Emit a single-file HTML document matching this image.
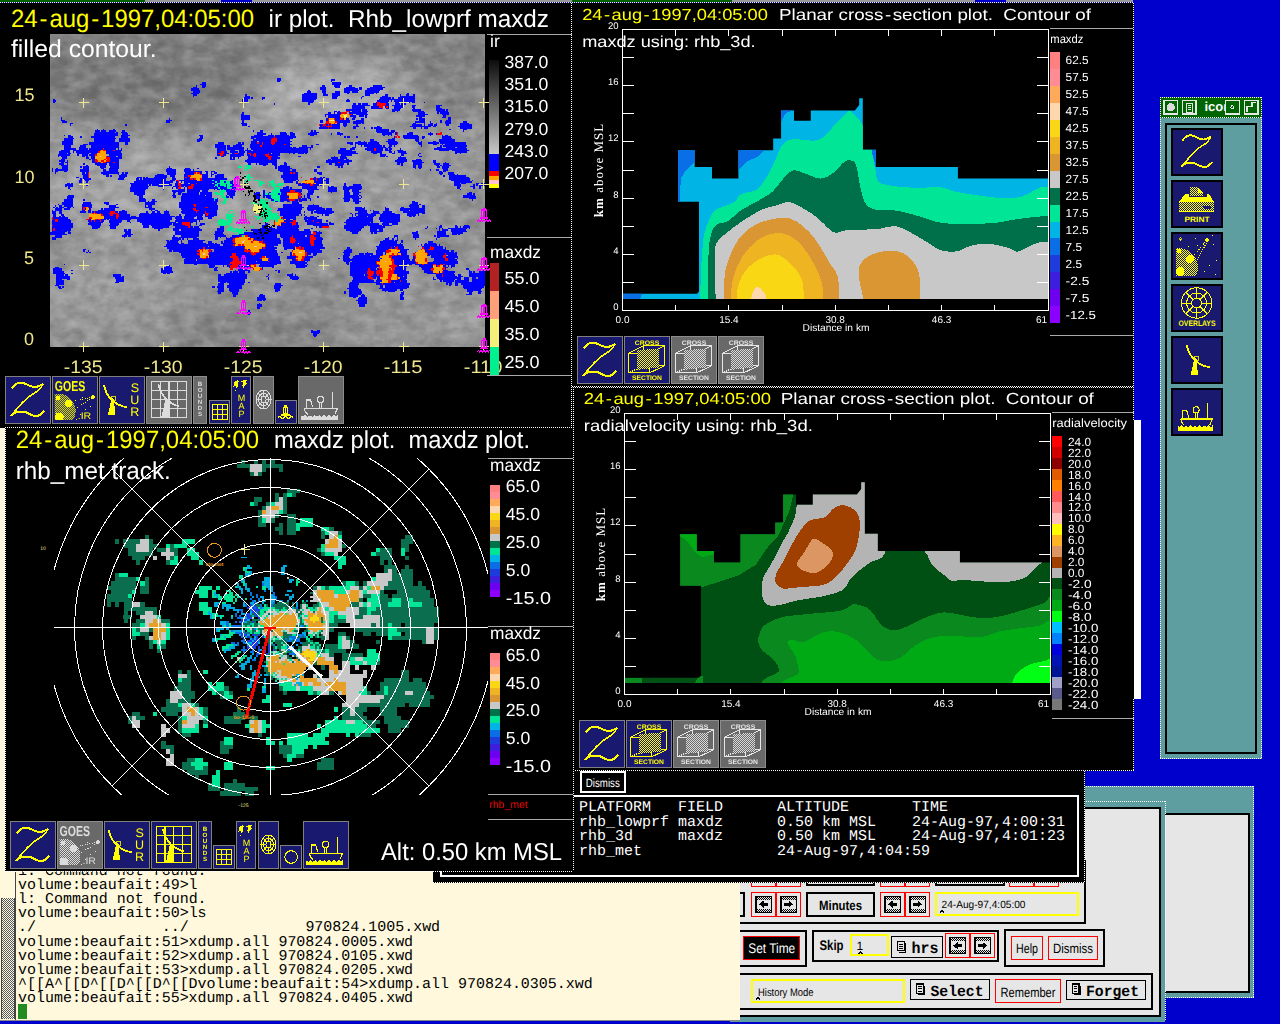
<!DOCTYPE html>
<html><head><meta charset="utf-8"><title>zebra display</title>
<style>html,body{margin:0;padding:0;background:#0000cd;overflow:hidden}svg{display:block}text{white-space:pre}</style></head>
<body><svg width="1280" height="1024" viewBox="0 0 1280 1024" shape-rendering="crispEdges" text-rendering="geometricPrecision">
<defs><pattern id="dy" width="2" height="2" patternUnits="userSpaceOnUse"><rect width="1" height="1" fill="#ffff00"/><rect x="1" y="1" width="1" height="1" fill="#ffff00"/></pattern><pattern id="dg" width="2" height="2" patternUnits="userSpaceOnUse"><rect width="1" height="1" fill="#dcdcdc"/><rect x="1" y="1" width="1" height="1" fill="#dcdcdc"/></pattern><pattern id="dk" width="2" height="2" patternUnits="userSpaceOnUse"><rect width="2" height="2" fill="#fffae6"/><rect width="1" height="1" fill="#555"/><rect x="1" y="1" width="1" height="1" fill="#555"/></pattern></defs>
<rect x="0" y="0" width="1280" height="1024" fill="#0000cd"/>
<rect x="1084.6" y="786" width="169.4" height="211.7" fill="#5f9ea0"/>
<rect x="1151" y="814.4" width="97.5" height="177.3" fill="#e6e6e6" stroke="#000" stroke-width="2"/>
<rect x="730" y="801.2" width="435" height="220.5" fill="#5f9ea0"/>
<line x1="1084" y1="801.5" x2="1165" y2="801.5" stroke="#fff" stroke-width="1" stroke-dasharray="1 1"/><line x1="1165" y1="801" x2="1165" y2="1021" stroke="#fff" stroke-width="1" stroke-dasharray="1 1"/><line x1="1084" y1="786.5" x2="1254" y2="786.5" stroke="#fff" stroke-width="1" stroke-dasharray="1 1"/><line x1="1253.5" y1="786" x2="1253.5" y2="998" stroke="#fff" stroke-width="1" stroke-dasharray="1 1"/><line x1="1165" y1="997.5" x2="1254" y2="997.5" stroke="#fff" stroke-width="1" stroke-dasharray="1 1"/>
<rect x="731" y="807.5" width="428.6" height="208.5" fill="#e6e6e6" stroke="#000" stroke-width="2"/>
<defs><pattern id="dk2" width="2" height="2" patternUnits="userSpaceOnUse"><rect width="2" height="2" fill="#e6e6e6"/><rect width="1" height="1" fill="#000"/><rect x="1" y="1" width="1" height="1" fill="#000"/></pattern></defs><rect x="751.5" y="870.5" width="23.8" height="15.6" fill="#e6e6e6" stroke="#ff0000" stroke-width="1"/><rect x="776.5" y="870.5" width="23.8" height="15.6" fill="#e6e6e6" stroke="#ff0000" stroke-width="1"/><rect x="807" y="871" width="67" height="14" fill="#e6e6e6" stroke="#000" stroke-width="2"/><rect x="880.5" y="870.5" width="23.8" height="15.6" fill="#e6e6e6" stroke="#ff0000" stroke-width="1"/><rect x="905.5" y="870.5" width="23.8" height="15.6" fill="#e6e6e6" stroke="#ff0000" stroke-width="1"/><rect x="936" y="871" width="68" height="14" fill="#e6e6e6" stroke="#000" stroke-width="2"/><rect x="1009.5" y="870.5" width="23.8" height="15.6" fill="#e6e6e6" stroke="#ff0000" stroke-width="1"/><rect x="1034.5" y="870.5" width="23.8" height="15.6" fill="#e6e6e6" stroke="#ff0000" stroke-width="1"/><rect x="701" y="861" width="384" height="62.4" fill="none" stroke="#000" stroke-width="2"/><rect x="701" y="893" width="43" height="22.5" fill="#e6e6e6" stroke="#000" stroke-width="2"/><rect x="751.5" y="892.5" width="23.8" height="23.6" fill="#e6e6e6" stroke="#ff0000" stroke-width="1"/><rect x="755" y="895.5" width="17" height="17.5" fill="#000"/><rect x="756.5" y="897" width="14" height="14.5" fill="#e6e6e6"/><rect x="756.5" y="897" width="14" height="2.5" fill="url(#dk2)"/><rect x="756.5" y="909" width="14" height="2.5" fill="url(#dk2)"/><path d="M759 904.3l4.5-3.6v2.3h4.5v2.6h-4.5v2.3z" fill="#000"/><rect x="776.5" y="892.5" width="23.8" height="23.6" fill="#e6e6e6" stroke="#ff0000" stroke-width="1"/><rect x="780" y="895.5" width="17" height="17.5" fill="#000"/><rect x="781.5" y="897" width="14" height="14.5" fill="#e6e6e6"/><rect x="781.5" y="897" width="14" height="2.5" fill="url(#dk2)"/><rect x="781.5" y="909" width="14" height="2.5" fill="url(#dk2)"/><path d="M793 904.3l-4.5-3.6v2.3h-4.5v2.6h4.5v2.3z" fill="#000"/><rect x="807" y="893" width="67" height="22.5" fill="#e6e6e6" stroke="#000" stroke-width="2"/><text x="840.5" y="909.5" font-size="13.5" fill="#000" font-family="Liberation Sans, sans-serif" font-weight="bold" text-anchor="middle" textLength="43" lengthAdjust="spacingAndGlyphs" xml:space="preserve">Minutes</text><rect x="880.5" y="892.5" width="23.8" height="23.6" fill="#e6e6e6" stroke="#ff0000" stroke-width="1"/><rect x="884" y="895.5" width="17" height="17.5" fill="#000"/><rect x="885.5" y="897" width="14" height="14.5" fill="#e6e6e6"/><rect x="885.5" y="897" width="14" height="2.5" fill="url(#dk2)"/><rect x="885.5" y="909" width="14" height="2.5" fill="url(#dk2)"/><path d="M888 904.3l4.5-3.6v2.3h4.5v2.6h-4.5v2.3z" fill="#000"/><rect x="905.5" y="892.5" width="23.8" height="23.6" fill="#e6e6e6" stroke="#ff0000" stroke-width="1"/><rect x="909" y="895.5" width="17" height="17.5" fill="#000"/><rect x="910.5" y="897" width="14" height="14.5" fill="#e6e6e6"/><rect x="910.5" y="897" width="14" height="2.5" fill="url(#dk2)"/><rect x="910.5" y="909" width="14" height="2.5" fill="url(#dk2)"/><path d="M922 904.3l-4.5-3.6v2.3h-4.5v2.6h4.5v2.3z" fill="#000"/><rect x="936.3" y="893" width="141.7" height="21.8" fill="#e6e6e6" stroke="#ffff00" stroke-width="2"/><text x="941.5" y="908" font-size="10.5" fill="#000" font-family="Liberation Sans, sans-serif" textLength="84" lengthAdjust="spacingAndGlyphs" xml:space="preserve">24-Aug-97,4:05:00</text><path d="M940 912.5l2.2-2.2 2.2 2.2" fill="none" stroke="#000" stroke-width="1.3"/><rect x="701" y="930.6" width="104.5" height="35" fill="none" stroke="#000" stroke-width="2"/><rect x="743.5" y="936.5" width="56.4" height="22.7" fill="#000" stroke="#ff0000" stroke-width="1"/><text x="771.7" y="953.2" font-size="14" fill="#fff" font-family="Liberation Sans, sans-serif" text-anchor="middle" textLength="47" lengthAdjust="spacingAndGlyphs" xml:space="preserve">Set Time</text><rect x="813" y="930.6" width="185" height="29.9" fill="none" stroke="#000" stroke-width="2"/><text x="819.5" y="949.8" font-size="14" fill="#000" font-family="Liberation Sans, sans-serif" font-weight="bold" textLength="24" lengthAdjust="spacingAndGlyphs" xml:space="preserve">Skip</text><rect x="851" y="934.8" width="37" height="20.5" fill="#e6e6e6" stroke="#ffff00" stroke-width="2"/><text x="856.5" y="950" font-size="12" fill="#000" font-family="Liberation Sans, sans-serif" xml:space="preserve">1</text><path d="M858.5 954l2.2-2.2 2.2 2.2" fill="none" stroke="#000" stroke-width="1.3"/><rect x="891.5" y="936.5" width="50.8" height="20.5" fill="#e6e6e6" stroke="#000" stroke-width="1"/><rect x="897.6" y="941.6" width="6.7" height="9.2" fill="#e6e6e6" stroke="#000" stroke-width="1.3"/><line x1="899.3" y1="944.2" x2="902.7" y2="944.2" stroke="#000" stroke-width="1"/><line x1="899.3" y1="946.4" x2="902.7" y2="946.4" stroke="#000" stroke-width="1"/><line x1="899.3" y1="948.6" x2="902.7" y2="948.6" stroke="#000" stroke-width="1"/><rect x="905" y="943" width="1.4" height="9.8" fill="#000"/><rect x="899" y="951.5" width="7.4" height="1.3" fill="#000"/><text x="911.5" y="953" font-size="16" fill="#000" font-family="Liberation Mono, monospace" font-weight="bold" textLength="27" lengthAdjust="spacingAndGlyphs" xml:space="preserve">hrs</text><rect x="945.7" y="933.9" width="23.8" height="23.6" fill="#e6e6e6" stroke="#ff0000" stroke-width="1"/><rect x="949.2" y="936.9" width="17" height="17.5" fill="#000"/><rect x="950.7" y="938.4" width="14" height="14.5" fill="#e6e6e6"/><rect x="950.7" y="938.4" width="14" height="2.5" fill="url(#dk2)"/><rect x="950.7" y="950.4" width="14" height="2.5" fill="url(#dk2)"/><path d="M953.2 945.7l4.5-3.6v2.3h4.5v2.6h-4.5v2.3z" fill="#000"/><rect x="970.8" y="933.9" width="23.8" height="23.6" fill="#e6e6e6" stroke="#ff0000" stroke-width="1"/><rect x="974.3" y="936.9" width="17" height="17.5" fill="#000"/><rect x="975.8" y="938.4" width="14" height="14.5" fill="#e6e6e6"/><rect x="975.8" y="938.4" width="14" height="2.5" fill="url(#dk2)"/><rect x="975.8" y="950.4" width="14" height="2.5" fill="url(#dk2)"/><path d="M987.3 945.7l-4.5-3.6v2.3h-4.5v2.6h4.5v2.3z" fill="#000"/><rect x="1005" y="930" width="99.3" height="36" fill="none" stroke="#000" stroke-width="2"/><rect x="1011.5" y="936.5" width="31" height="22.7" fill="#e6e6e6" stroke="#ff0000" stroke-width="1"/><text x="1027" y="953" font-size="13.5" fill="#000" font-family="Liberation Sans, sans-serif" text-anchor="middle" textLength="22" lengthAdjust="spacingAndGlyphs" xml:space="preserve">Help</text><rect x="1048.5" y="936.5" width="48.8" height="22.7" fill="#e6e6e6" stroke="#ff0000" stroke-width="1"/><text x="1073" y="953" font-size="13.5" fill="#000" font-family="Liberation Sans, sans-serif" text-anchor="middle" textLength="40" lengthAdjust="spacingAndGlyphs" xml:space="preserve">Dismiss</text><rect x="701" y="973.8" width="451" height="35.4" fill="none" stroke="#000" stroke-width="2"/><rect x="752" y="980" width="152.3" height="21.8" fill="#e6e6e6" stroke="#ffff00" stroke-width="2"/><text x="758" y="995.5" font-size="11" fill="#000" font-family="Liberation Sans, sans-serif" textLength="55.5" lengthAdjust="spacingAndGlyphs" xml:space="preserve">History Mode</text><path d="M756 999.5l2.2-2.2 2.2 2.2" fill="none" stroke="#000" stroke-width="1.3"/><rect x="910.5" y="979.5" width="79" height="20.4" fill="#e6e6e6" stroke="#000" stroke-width="1"/><rect x="916.6" y="984.1" width="6.7" height="9.2" fill="#e6e6e6" stroke="#000" stroke-width="1.3"/><line x1="918.3" y1="986.7" x2="921.7" y2="986.7" stroke="#000" stroke-width="1"/><line x1="918.3" y1="988.9" x2="921.7" y2="988.9" stroke="#000" stroke-width="1"/><line x1="918.3" y1="991.1" x2="921.7" y2="991.1" stroke="#000" stroke-width="1"/><rect x="924" y="985.5" width="1.4" height="9.8" fill="#000"/><rect x="918" y="994" width="7.4" height="1.3" fill="#000"/><text x="930.5" y="995.5" font-size="15.5" fill="#000" font-family="Liberation Mono, monospace" font-weight="bold" textLength="53" lengthAdjust="spacingAndGlyphs" xml:space="preserve">Select</text><rect x="995.5" y="979.5" width="64.8" height="22.8" fill="#e6e6e6" stroke="#ff0000" stroke-width="1"/><text x="1028" y="996.5" font-size="13.5" fill="#000" font-family="Liberation Sans, sans-serif" text-anchor="middle" textLength="55" lengthAdjust="spacingAndGlyphs" xml:space="preserve">Remember</text><rect x="1066.5" y="980" width="78.7" height="19.9" fill="#e6e6e6" stroke="#000" stroke-width="1"/><rect x="1072.2" y="984.1" width="6.7" height="9.2" fill="#e6e6e6" stroke="#000" stroke-width="1.3"/><line x1="1073.8" y1="986.7" x2="1077.2" y2="986.7" stroke="#000" stroke-width="1"/><line x1="1073.8" y1="988.9" x2="1077.2" y2="988.9" stroke="#000" stroke-width="1"/><line x1="1073.8" y1="991.1" x2="1077.2" y2="991.1" stroke="#000" stroke-width="1"/><rect x="1079.5" y="985.5" width="1.4" height="9.8" fill="#000"/><rect x="1073.5" y="994" width="7.4" height="1.3" fill="#000"/><text x="1086" y="995.5" font-size="15.5" fill="#000" font-family="Liberation Mono, monospace" font-weight="bold" textLength="53" lengthAdjust="spacingAndGlyphs" xml:space="preserve">Forget</text>
<rect x="0" y="420" width="740.3" height="601" fill="#fff8dc"/>
<rect x="0" y="1020" width="740.3" height="1" fill="#888"/>
<rect x="15" y="860" width="1" height="160" fill="#444"/>
<rect x="2" y="897.5" width="12" height="121.5" fill="url(#dk)"/>
<rect x="1" y="897.5" width="1" height="121.5" fill="#444"/><rect x="13.5" y="897.5" width="1" height="121.5" fill="#444"/>
<text x="18" y="874.7" font-size="15" fill="#000" font-family="Liberation Mono, monospace" textLength="188.6" lengthAdjust="spacingAndGlyphs" xml:space="preserve">1: Command not found.</text>
<text x="18" y="888.9" font-size="15" fill="#000" font-family="Liberation Mono, monospace" textLength="179.6" lengthAdjust="spacingAndGlyphs" xml:space="preserve">volume:beaufait:49&gt;l</text>
<text x="18" y="903.1" font-size="15" fill="#000" font-family="Liberation Mono, monospace" textLength="188.6" lengthAdjust="spacingAndGlyphs" xml:space="preserve">l: Command not found.</text>
<text x="18" y="917.2" font-size="15" fill="#000" font-family="Liberation Mono, monospace" textLength="188.6" lengthAdjust="spacingAndGlyphs" xml:space="preserve">volume:beaufait:50&gt;ls</text>
<text x="18" y="931.4" font-size="15" fill="#000" font-family="Liberation Mono, monospace" textLength="422.1" lengthAdjust="spacingAndGlyphs" xml:space="preserve">./              ../             970824.1005.xwd</text>
<text x="18" y="945.6" font-size="15" fill="#000" font-family="Liberation Mono, monospace" textLength="395.1" lengthAdjust="spacingAndGlyphs" xml:space="preserve">volume:beaufait:51&gt;xdump.all 970824.0005.xwd</text>
<text x="18" y="959.8" font-size="15" fill="#000" font-family="Liberation Mono, monospace" textLength="395.1" lengthAdjust="spacingAndGlyphs" xml:space="preserve">volume:beaufait:52&gt;xdump.all 970824.0105.xwd</text>
<text x="18" y="974" font-size="15" fill="#000" font-family="Liberation Mono, monospace" textLength="395.1" lengthAdjust="spacingAndGlyphs" xml:space="preserve">volume:beaufait:53&gt;xdump.all 970824.0205.xwd</text>
<text x="18" y="988.1" font-size="15" fill="#000" font-family="Liberation Mono, monospace" textLength="574.7" lengthAdjust="spacingAndGlyphs" xml:space="preserve">^[[A^[[D^[[D^[[D^[[Dvolume:beaufait:54&gt;xdump.all 970824.0305.xwd</text>
<text x="18" y="1002.3" font-size="15" fill="#000" font-family="Liberation Mono, monospace" textLength="395.1" lengthAdjust="spacingAndGlyphs" xml:space="preserve">volume:beaufait:55&gt;xdump.all 970824.0405.xwd</text>
<rect x="18" y="1004" width="9" height="14.5" fill="#228b22"/>
<rect x="1160" y="97" width="102" height="661.5" fill="#5f9ea0"/>
<rect x="1160" y="97" width="102" height="21" fill="#006400"/>
<rect x="1165.8" y="123.5" width="90.4" height="629" fill="none" stroke="#000" stroke-width="2"/>
<rect x="1172" y="129" width="50" height="46" fill="#191970" stroke="#000" stroke-width="2"/><g transform="translate(1176,129) scale(0.92,0.95)"><path d="M7.2 11.8C7.9 11.2 9.6 8.8 11.2 7.9C12.8 7.1 14.4 6.3 16.9 6.7C19.3 7.1 23.6 9.5 25.9 10.2C28.2 10.9 28.8 11.3 30.7 11C32.6 10.7 36.5 8.9 37.6 8.5" fill="none" stroke="#ffff00" stroke-width="2.0" stroke-linecap="round"/><path d="M37.6 8.9C36.9 9.8 35.3 12.8 33.2 14.6C31.1 16.4 27.6 17.9 25 19.9C22.4 21.9 20 24.1 17.7 26.4C15.4 28.7 13.1 31.5 11.2 33.7C9.3 35.9 7.1 38.5 6.3 39.4" fill="none" stroke="#ffff00" stroke-width="1.6" stroke-linecap="round"/><path d="M6.3 39.4C7.1 38.9 9 36.8 11.2 36.2C13.4 35.6 16.6 35.3 19.3 35.8C22 36.3 25.2 38.7 27.5 39.4C29.8 40.1 31.3 40.5 33.2 39.8C35.1 39.1 38 36.1 38.9 35.4" fill="none" stroke="#ffff00" stroke-width="2.0" stroke-linecap="round"/></g><rect x="1172" y="181" width="50" height="46" fill="#191970" stroke="#000" stroke-width="2"/><g transform="translate(1171,180)"><path d="M19 7h8l5 6v3h-13z" fill="url(#dy)"/><path d="M27 7l5 6h-5z" fill="#ffff00"/><path d="M14 14h4v3h18v-3h2l5 8h-35z" fill="#ffff00"/><rect x="8" y="22" width="35" height="10" fill="url(#dy)"/><rect x="8" y="31" width="35" height="1.2" fill="#ffff00"/><rect x="32" y="25.5" width="8" height="3" rx="1.5" fill="#191970"/><text x="26" y="41.5" font-size="7.8" fill="#ffff00" font-family="Liberation Sans, sans-serif" font-weight="bold" text-anchor="middle" textLength="25" lengthAdjust="spacingAndGlyphs" xml:space="preserve">PRINT</text></g><rect x="1172" y="233" width="50" height="46" fill="#191970" stroke="#000" stroke-width="2"/><g transform="translate(1171,232)"><clipPath id="pc"><rect x="5" y="12" width="22" height="32"/></clipPath><g clip-path="url(#pc)"><circle cx="8" cy="35" r="19" fill="url(#dy)"/><circle cx="9" cy="39.5" r="4.5" fill="#ffff00"/><circle cx="19" cy="27" r="4" fill="#ffff00"/><circle cx="8" cy="19" r="2.4" fill="#ffff00"/></g><path d="M22 25L35 9M25 30L36 10" stroke="#ffff00" stroke-width="1" stroke-dasharray="1 1.3"/><path d="M36 5.2L38.8 8L36 10.8L33.2 8Z" fill="#ffff00"/><rect x="9" y="7" width="1.2" height="1.2" fill="#ffff00"/><rect x="24" y="6" width="1.2" height="1.2" fill="#ffff00"/><rect x="17" y="14" width="1.2" height="1.2" fill="#ffff00"/><rect x="42" y="12" width="1.2" height="1.2" fill="#ffff00"/><rect x="45" y="28" width="1.2" height="1.2" fill="#ffff00"/><rect x="38" y="33" width="1.2" height="1.2" fill="#ffff00"/><rect x="33" y="39" width="1.2" height="1.2" fill="#ffff00"/><rect x="30" y="19" width="1.2" height="1.2" fill="#ffff00"/><rect x="44" y="42" width="1.2" height="1.2" fill="#ffff00"/><rect x="41" y="3" width="1.2" height="1.2" fill="#ffff00"/><rect x="26" y="13" width="1.2" height="1.2" fill="#ffff00"/><path d="M9.6 5.4l1.6 1.6-1.6 1.6-1.6-1.6z" fill="none" stroke="#ffff00" stroke-width="0.7"/></g><rect x="1172" y="285" width="50" height="46" fill="#191970" stroke="#000" stroke-width="2"/><g transform="translate(1171,284)"><g fill="none" stroke="#ffff00" stroke-width="1"><ellipse cx="25.6" cy="19" rx="15.2" ry="15.2"/><ellipse cx="25.6" cy="19" rx="10" ry="10"/><ellipse cx="25.6" cy="19" rx="5" ry="5"/><path d="M30.6 19L40.8 19"/><path d="M29.1 22.5L36.3 29.7"/><path d="M25.6 24L25.6 34.2"/><path d="M22.1 22.5L14.9 29.7"/><path d="M20.6 19L10.4 19"/><path d="M22.1 15.5L14.9 8.3"/><path d="M25.6 14L25.6 3.8"/><path d="M29.1 15.5L36.3 8.3"/></g><text x="26" y="41.5" font-size="8" fill="#ffff00" font-family="Liberation Sans, sans-serif" font-weight="bold" text-anchor="middle" textLength="37" lengthAdjust="spacingAndGlyphs" xml:space="preserve">OVERLAYS</text></g><rect x="1172" y="337" width="50" height="46" fill="#191970" stroke="#000" stroke-width="2"/><g transform="translate(1182,336)"><path d="M4.8 9.4Q9 27.5 27 31.2" fill="none" stroke="#ffff00" stroke-width="1.8" stroke-linecap="round"/><path d="M12.5 21L15 24L15.8 39.4H8.6L11 29Z" fill="#ffff00"/><rect x="12.2" y="20.3" width="4.2" height="4.2" fill="none" stroke="#ffff00" stroke-width="0.8"/></g><rect x="1172" y="389" width="50" height="46" fill="#191970" stroke="#000" stroke-width="2"/><g transform="translate(1175,386.5) scale(0.95,1.0)"><g fill="none" stroke="#ffff00" stroke-width="1.1"><path d="M6 32.5h33.2l-2.6 6"/><path d="M6 32.5q0.5 3.5 3.5 6"/><path d="M8 32.5v-8.5h4.4l2 7"/><circle cx="22.3" cy="23.4" r="3.1"/><path d="M21.2 26.4v6M23.4 26.4v6"/><path d="M34.2 16v16.5"/></g><path d="M3 44v-4.5l2 1.3 2.2-2.2 2.2 2.2 2.4-1.6 2.2 1.6 2.4-2 2.4 2 2.4-1.8 2.4 1.8 2.4-2 2.4 2 2.4-1.8 2.4 1.8 2.4-2.2 2.2 2.2 2.2-2.4V44z" fill="#ffff00"/></g>
<rect x="1164" y="100.6" width="13.4" height="13.3" fill="none" stroke="#e6e6e6" stroke-width="1.2"/><circle cx="1170.7" cy="107.3" r="4.2" fill="#dcdcdc"/>
<rect x="1182.6" y="100.6" width="13.4" height="13.3" fill="none" stroke="#e6e6e6" stroke-width="1.2"/><rect x="1186.5" y="103" width="6" height="9" fill="none" stroke="#e6e6e6" stroke-width="1"/><line x1="1188" y1="105.5" x2="1191" y2="105.5" stroke="#e6e6e6" stroke-width="1"/><line x1="1188" y1="107.5" x2="1191" y2="107.5" stroke="#e6e6e6" stroke-width="1"/><line x1="1188" y1="109.5" x2="1191" y2="109.5" stroke="#e6e6e6" stroke-width="1"/>
<text x="1204.5" y="111" font-size="13" fill="#fff" font-family="Liberation Sans, sans-serif" font-weight="bold" xml:space="preserve">icons</text>
<rect x="1225.6" y="100.6" width="13.6" height="13.3" fill="#006400" stroke="#e6e6e6" stroke-width="1.2"/><circle cx="1232.4" cy="107.3" r="1.6" fill="none" stroke="#e6e6e6" stroke-width="1"/>
<rect x="1244.6" y="100.6" width="13.4" height="13.3" fill="#006400" stroke="#e6e6e6" stroke-width="1.2"/><path d="M1247 111.5v-5h5v-4h4" fill="none" stroke="#e6e6e6" stroke-width="1.2"/>
<line x1="1160" y1="97.5" x2="1262" y2="97.5" stroke="#fff" stroke-width="1" stroke-dasharray="1 1"/><line x1="1160" y1="117.5" x2="1262" y2="117.5" stroke="#fff" stroke-width="1" stroke-dasharray="1 1"/><line x1="1160.5" y1="97" x2="1160.5" y2="758" stroke="#fff" stroke-width="1" stroke-dasharray="1 1"/><line x1="1261.5" y1="97" x2="1261.5" y2="758" stroke="#fff" stroke-width="1" stroke-dasharray="1 1"/><line x1="1160" y1="758" x2="1262" y2="758" stroke="#fff" stroke-width="1" stroke-dasharray="1 1"/>
<rect x="0" y="3" width="574" height="424.5" fill="#000"/>
<defs><filter id="sb" x="-20%" y="-20%" width="140%" height="140%"><feGaussianBlur stdDeviation="12"/></filter><filter id="sn" x="0" y="0" width="100%" height="100%"><feTurbulence type="fractalNoise" baseFrequency="0.07 0.1" numOctaves="3" seed="11"/><feColorMatrix type="matrix" values="0 0 0 0 0  0 0 0 0 0  0 0 0 0 0  2.2 0 0 0 -0.75"/></filter><filter id="sn2" x="0" y="0" width="100%" height="100%"><feTurbulence type="fractalNoise" baseFrequency="0.06 0.09" numOctaves="3" seed="5"/><feColorMatrix type="matrix" values="0 0 0 0 1  0 0 0 0 1  0 0 0 0 1  0 2.2 0 0 -0.8"/></filter><clipPath id="sc"><rect x="50" y="34" width="435" height="313"/></clipPath></defs><g clip-path="url(#sc)"><rect x="50" y="34" width="435" height="313" fill="#929292"/><g filter="url(#sb)"><ellipse cx="150" cy="75" rx="125" ry="52" fill="#787878" opacity="1.0"/><ellipse cx="300" cy="40" rx="220" ry="16" fill="#7e7e7e" opacity="0.9"/><ellipse cx="455" cy="72" rx="45" ry="45" fill="#7e7e7e" opacity="0.9"/><ellipse cx="330" cy="95" rx="80" ry="28" fill="#b4b4b4" opacity="0.85"/><ellipse cx="260" cy="125" rx="40" ry="18" fill="#a8a8a8" opacity="0.6"/><ellipse cx="420" cy="140" rx="50" ry="30" fill="#a0a0a0" opacity="0.6"/><ellipse cx="150" cy="190" rx="110" ry="50" fill="#a8a8a8" opacity="0.75"/><ellipse cx="330" cy="205" rx="120" ry="55" fill="#a4a4a4" opacity="0.6"/><ellipse cx="60" cy="140" rx="30" ry="12" fill="#a8a8a8" opacity="0.6"/><ellipse cx="110" cy="290" rx="75" ry="40" fill="#a2a2a2" opacity="0.65"/><ellipse cx="250" cy="332" rx="95" ry="22" fill="#828282" opacity="0.95"/><ellipse cx="420" cy="310" rx="70" ry="40" fill="#989898" opacity="0.5"/><ellipse cx="330" cy="270" rx="40" ry="35" fill="#8c8c8c" opacity="0.5"/><ellipse cx="465" cy="325" rx="25" ry="22" fill="#a8a8a8" opacity="0.5"/></g><rect x="50" y="34" width="435" height="313" filter="url(#sn)" opacity="0.13"/><rect x="50" y="34" width="435" height="313" filter="url(#sn2)" opacity="0.2"/></g>
<path fill="#0000ff" d="M276.5 77.5h4.5v1.5h-4.5zM276.5 79h4.5v1.5h-4.5zM330.5 79h4.5v1.5h-4.5zM276.5 80.5h3v1.5h-3zM330.5 80.5h1.5v1.5h-1.5zM201.5 82h4.5v1.5h-4.5zM332 82h9v1.5h-9zM200 83.5h6v1.5h-6zM332 83.5h9v1.5h-9zM195.5 85h1.5v1.5h-1.5zM201.5 85h4.5v1.5h-4.5zM321.5 85h3v1.5h-3zM333.5 85h6v1.5h-6zM348.5 85h3v1.5h-3zM372.5 85h9v1.5h-9zM192.5 86.5h4.5v1.5h-4.5zM201.5 86.5h3v1.5h-3zM320 86.5h6v1.5h-6zM335 86.5h4.5v1.5h-4.5zM345.5 86.5h9v1.5h-9zM359 86.5h3v1.5h-3zM369.5 86.5h15v1.5h-15zM191 88h7.5v1.5h-7.5zM320 88h6v1.5h-6zM344 88h13.5v1.5h-13.5zM359 88h3v1.5h-3zM366.5 88h16.5v1.5h-16.5zM191 89.5h9v1.5h-9zM308 89.5h1.5v1.5h-1.5zM321.5 89.5h4.5v1.5h-4.5zM344 89.5h15v1.5h-15zM365 89.5h15v1.5h-15zM192.5 91h7.5v1.5h-7.5zM306.5 91h4.5v1.5h-4.5zM321.5 91h4.5v1.5h-4.5zM335 91h4.5v1.5h-4.5zM344 91h6v1.5h-6zM351.5 91h6v1.5h-6zM365 91h13.5v1.5h-13.5zM191 92.5h7.5v1.5h-7.5zM303.5 92.5h13.5v1.5h-13.5zM323 92.5h3v1.5h-3zM332 92.5h7.5v1.5h-7.5zM347 92.5h1.5v1.5h-1.5zM365 92.5h9v1.5h-9zM375.5 92.5h1.5v1.5h-1.5zM407 92.5h1.5v1.5h-1.5zM192.5 94h4.5v1.5h-4.5zM245 94h1.5v1.5h-1.5zM302 94h15v1.5h-15zM323 94h4.5v1.5h-4.5zM332 94h7.5v1.5h-7.5zM365 94h4.5v1.5h-4.5zM384.5 94h3v1.5h-3zM399.5 94h1.5v1.5h-1.5zM405.5 94h3v1.5h-3zM413 94h1.5v1.5h-1.5zM192.5 95.5h1.5v1.5h-1.5zM245 95.5h4.5v1.5h-4.5zM302 95.5h15v1.5h-15zM332 95.5h6v1.5h-6zM362 95.5h1.5v1.5h-1.5zM381.5 95.5h6v1.5h-6zM399.5 95.5h15v1.5h-15zM243.5 97h6v1.5h-6zM251 97h1.5v1.5h-1.5zM261.5 97h3v1.5h-3zM302 97h15v1.5h-15zM332 97h4.5v1.5h-4.5zM360.5 97h1.5v1.5h-1.5zM380 97h10.5v1.5h-10.5zM392 97h1.5v1.5h-1.5zM398 97h16.5v1.5h-16.5zM53 98.5h1.5v1.5h-1.5zM242 98.5h6v1.5h-6zM261.5 98.5h1.5v1.5h-1.5zM302 98.5h13.5v1.5h-13.5zM347 98.5h1.5v1.5h-1.5zM378.5 98.5h36v1.5h-36zM53 100h3v1.5h-3zM242 100h6v1.5h-6zM302 100h12v1.5h-12zM345.5 100h4.5v1.5h-4.5zM377 100h12v1.5h-12zM390.5 100h1.5v1.5h-1.5zM393.5 100h21v1.5h-21zM53 101.5h1.5v1.5h-1.5zM243.5 101.5h1.5v1.5h-1.5zM308 101.5h4.5v1.5h-4.5zM375.5 101.5h12v1.5h-12zM395 101.5h15v1.5h-15zM411.5 101.5h3v1.5h-3zM423.5 101.5h1.5v1.5h-1.5zM273.5 103h1.5v1.5h-1.5zM308 103h1.5v1.5h-1.5zM353 103h3v1.5h-3zM357.5 103h3v1.5h-3zM362 103h6v1.5h-6zM372.5 103h16.5v1.5h-16.5zM395 103h4.5v1.5h-4.5zM401 103h4.5v1.5h-4.5zM351.5 104.5h18v1.5h-18zM372.5 104.5h16.5v1.5h-16.5zM392 104.5h12v1.5h-12zM411.5 104.5h4.5v1.5h-4.5zM435.5 104.5h6v1.5h-6zM351.5 106h13.5v1.5h-13.5zM371 106h12v1.5h-12zM384.5 106h4.5v1.5h-4.5zM393.5 106h9v1.5h-9zM411.5 106h3v1.5h-3zM435.5 106h4.5v1.5h-4.5zM351.5 107.5h13.5v1.5h-13.5zM371 107.5h12v1.5h-12zM386 107.5h3v1.5h-3zM393.5 107.5h7.5v1.5h-7.5zM413 107.5h1.5v1.5h-1.5zM435.5 107.5h6v1.5h-6zM345.5 109h15v1.5h-15zM362 109h4.5v1.5h-4.5zM392 109h7.5v1.5h-7.5zM411.5 109h9v1.5h-9zM435.5 109h9v1.5h-9zM446 109h1.5v1.5h-1.5zM333.5 110.5h3v1.5h-3zM338 110.5h1.5v1.5h-1.5zM345.5 110.5h4.5v1.5h-4.5zM351.5 110.5h9v1.5h-9zM362 110.5h6v1.5h-6zM392 110.5h3v1.5h-3zM396.5 110.5h1.5v1.5h-1.5zM413 110.5h10.5v1.5h-10.5zM437 110.5h10.5v1.5h-10.5zM242 112h1.5v1.5h-1.5zM327.5 112h3v1.5h-3zM333.5 112h1.5v1.5h-1.5zM336.5 112h10.5v1.5h-10.5zM348.5 112h18v1.5h-18zM417.5 112h7.5v1.5h-7.5zM437 112h1.5v1.5h-1.5zM440 112h9v1.5h-9zM240.5 113.5h3v1.5h-3zM324.5 113.5h22.5v1.5h-22.5zM350 113.5h3v1.5h-3zM356 113.5h12v1.5h-12zM417.5 113.5h10.5v1.5h-10.5zM441.5 113.5h7.5v1.5h-7.5zM240.5 115h9v1.5h-9zM324.5 115h1.5v1.5h-1.5zM327.5 115h18v1.5h-18zM350 115h6v1.5h-6zM359 115h4.5v1.5h-4.5zM365 115h1.5v1.5h-1.5zM416 115h9v1.5h-9zM443 115h3v1.5h-3zM60.5 116.5h1.5v1.5h-1.5zM240.5 116.5h9v1.5h-9zM327.5 116.5h18v1.5h-18zM353 116.5h3v1.5h-3zM365 116.5h1.5v1.5h-1.5zM419 116.5h3v1.5h-3zM441.5 116.5h4.5v1.5h-4.5zM447.5 116.5h3v1.5h-3zM60.5 118h1.5v1.5h-1.5zM168.5 118h1.5v1.5h-1.5zM240.5 118h9v1.5h-9zM326 118h22.5v1.5h-22.5zM351.5 118h3v1.5h-3zM360.5 118h3v1.5h-3zM416 118h1.5v1.5h-1.5zM419 118h6v1.5h-6zM447.5 118h3v1.5h-3zM60.5 119.5h4.5v1.5h-4.5zM165.5 119.5h6v1.5h-6zM242 119.5h1.5v1.5h-1.5zM320 119.5h3v1.5h-3zM326 119.5h24v1.5h-24zM356 119.5h7.5v1.5h-7.5zM419 119.5h6v1.5h-6zM440 119.5h1.5v1.5h-1.5zM446 119.5h4.5v1.5h-4.5zM62 121h4.5v1.5h-4.5zM165.5 121h4.5v1.5h-4.5zM242 121h1.5v1.5h-1.5zM320 121h3v1.5h-3zM326 121h24v1.5h-24zM353 121h10.5v1.5h-10.5zM414.5 121h10.5v1.5h-10.5zM429.5 121h1.5v1.5h-1.5zM440 121h1.5v1.5h-1.5zM444.5 121h6v1.5h-6zM462.5 121h4.5v1.5h-4.5zM69.5 122.5h3v1.5h-3zM240.5 122.5h6v1.5h-6zM324.5 122.5h15v1.5h-15zM342.5 122.5h4.5v1.5h-4.5zM353 122.5h7.5v1.5h-7.5zM362 122.5h1.5v1.5h-1.5zM413 122.5h3v1.5h-3zM423.5 122.5h1.5v1.5h-1.5zM429.5 122.5h3v1.5h-3zM435.5 122.5h1.5v1.5h-1.5zM444.5 122.5h6v1.5h-6zM459.5 122.5h9v1.5h-9zM69.5 124h1.5v1.5h-1.5zM125 124h1.5v1.5h-1.5zM242 124h4.5v1.5h-4.5zM318.5 124h21v1.5h-21zM342.5 124h4.5v1.5h-4.5zM356 124h1.5v1.5h-1.5zM411.5 124h10.5v1.5h-10.5zM423.5 124h1.5v1.5h-1.5zM428 124h4.5v1.5h-4.5zM434 124h3v1.5h-3zM446 124h3v1.5h-3zM459.5 124h12v1.5h-12zM248 125.5h1.5v1.5h-1.5zM320 125.5h19.5v1.5h-19.5zM344 125.5h1.5v1.5h-1.5zM353 125.5h6v1.5h-6zM377 125.5h3v1.5h-3zM410 125.5h21v1.5h-21zM432.5 125.5h3v1.5h-3zM458 125.5h13.5v1.5h-13.5zM318.5 127h21v1.5h-21zM353 127h3v1.5h-3zM363.5 127h1.5v1.5h-1.5zM371 127h1.5v1.5h-1.5zM374 127h7.5v1.5h-7.5zM413 127h3v1.5h-3zM420.5 127h1.5v1.5h-1.5zM423.5 127h4.5v1.5h-4.5zM459.5 127h12v1.5h-12zM96.5 128.5h1.5v1.5h-1.5zM102.5 128.5h1.5v1.5h-1.5zM113 128.5h1.5v1.5h-1.5zM375.5 128.5h13.5v1.5h-13.5zM449 128.5h1.5v1.5h-1.5zM462.5 128.5h4.5v1.5h-4.5zM95 130h4.5v1.5h-4.5zM101 130h4.5v1.5h-4.5zM108.5 130h7.5v1.5h-7.5zM122 130h3v1.5h-3zM252.5 130h1.5v1.5h-1.5zM260 130h3v1.5h-3zM311 130h1.5v1.5h-1.5zM314 130h1.5v1.5h-1.5zM375.5 130h13.5v1.5h-13.5zM390.5 130h4.5v1.5h-4.5zM462.5 130h1.5v1.5h-1.5zM95 131.5h19.5v1.5h-19.5zM116 131.5h1.5v1.5h-1.5zM120.5 131.5h6v1.5h-6zM257 131.5h6v1.5h-6zM279.5 131.5h6v1.5h-6zM290 131.5h3v1.5h-3zM309.5 131.5h9v1.5h-9zM336.5 131.5h3v1.5h-3zM377 131.5h16.5v1.5h-16.5zM395 131.5h3v1.5h-3zM408.5 131.5h4.5v1.5h-4.5zM429.5 131.5h1.5v1.5h-1.5zM93.5 133h24v1.5h-24zM122 133h6v1.5h-6zM257 133h9v1.5h-9zM270.5 133h1.5v1.5h-1.5zM279.5 133h7.5v1.5h-7.5zM290 133h4.5v1.5h-4.5zM308 133h9v1.5h-9zM330.5 133h1.5v1.5h-1.5zM336.5 133h6v1.5h-6zM381.5 133h10.5v1.5h-10.5zM395 133h3v1.5h-3zM407 133h6v1.5h-6zM428 133h4.5v1.5h-4.5zM435.5 133h3v1.5h-3zM63.5 134.5h1.5v1.5h-1.5zM68 134.5h3v1.5h-3zM93.5 134.5h24v1.5h-24zM120.5 134.5h9v1.5h-9zM198.5 134.5h4.5v1.5h-4.5zM254 134.5h9v1.5h-9zM267.5 134.5h6v1.5h-6zM275 134.5h13.5v1.5h-13.5zM290 134.5h4.5v1.5h-4.5zM309.5 134.5h4.5v1.5h-4.5zM339.5 134.5h1.5v1.5h-1.5zM383 134.5h1.5v1.5h-1.5zM387.5 134.5h1.5v1.5h-1.5zM390.5 134.5h1.5v1.5h-1.5zM396.5 134.5h1.5v1.5h-1.5zM402.5 134.5h15v1.5h-15zM429.5 134.5h1.5v1.5h-1.5zM441.5 134.5h1.5v1.5h-1.5zM444.5 134.5h3v1.5h-3zM68 136h4.5v1.5h-4.5zM80 136h1.5v1.5h-1.5zM90.5 136h24v1.5h-24zM120.5 136h7.5v1.5h-7.5zM200 136h3v1.5h-3zM251 136h45v1.5h-45zM344 136h1.5v1.5h-1.5zM347 136h3v1.5h-3zM356 136h1.5v1.5h-1.5zM393.5 136h3v1.5h-3zM402.5 136h16.5v1.5h-16.5zM422 136h3v1.5h-3zM441.5 136h9v1.5h-9zM63.5 137.5h10.5v1.5h-10.5zM93.5 137.5h22.5v1.5h-22.5zM119 137.5h10.5v1.5h-10.5zM198.5 137.5h4.5v1.5h-4.5zM251 137.5h3v1.5h-3zM255.5 137.5h37.5v1.5h-37.5zM392 137.5h3v1.5h-3zM404 137.5h15v1.5h-15zM422 137.5h1.5v1.5h-1.5zM441.5 137.5h10.5v1.5h-10.5zM63.5 139h9v1.5h-9zM93.5 139h21v1.5h-21zM119 139h10.5v1.5h-10.5zM197 139h4.5v1.5h-4.5zM252.5 139h37.5v1.5h-37.5zM369.5 139h4.5v1.5h-4.5zM387.5 139h7.5v1.5h-7.5zM414.5 139h4.5v1.5h-4.5zM438.5 139h16.5v1.5h-16.5zM62 140.5h10.5v1.5h-10.5zM93.5 140.5h21v1.5h-21zM119 140.5h10.5v1.5h-10.5zM197 140.5h3v1.5h-3zM251 140.5h6v1.5h-6zM258.5 140.5h33v1.5h-33zM357.5 140.5h3v1.5h-3zM363.5 140.5h1.5v1.5h-1.5zM369.5 140.5h7.5v1.5h-7.5zM386 140.5h10.5v1.5h-10.5zM416 140.5h3v1.5h-3zM420.5 140.5h1.5v1.5h-1.5zM432.5 140.5h3v1.5h-3zM438.5 140.5h16.5v1.5h-16.5zM62 142h10.5v1.5h-10.5zM89 142h30v1.5h-30zM125 142h3v1.5h-3zM218 142h6v1.5h-6zM237.5 142h3v1.5h-3zM242 142h1.5v1.5h-1.5zM251 142h39v1.5h-39zM347 142h6v1.5h-6zM354.5 142h12v1.5h-12zM368 142h10.5v1.5h-10.5zM387.5 142h10.5v1.5h-10.5zM417.5 142h4.5v1.5h-4.5zM428 142h10.5v1.5h-10.5zM440 142h25.5v1.5h-25.5zM62 143.5h10.5v1.5h-10.5zM83 143.5h4.5v1.5h-4.5zM89 143.5h30v1.5h-30zM125 143.5h3v1.5h-3zM215 143.5h9v1.5h-9zM236 143.5h7.5v1.5h-7.5zM249.5 143.5h42v1.5h-42zM315.5 143.5h3v1.5h-3zM350 143.5h3v1.5h-3zM354.5 143.5h1.5v1.5h-1.5zM357.5 143.5h22.5v1.5h-22.5zM389 143.5h7.5v1.5h-7.5zM419 143.5h3v1.5h-3zM432.5 143.5h4.5v1.5h-4.5zM441.5 143.5h1.5v1.5h-1.5zM444.5 143.5h21v1.5h-21zM63.5 145h7.5v1.5h-7.5zM80 145h6v1.5h-6zM90.5 145h28.5v1.5h-28.5zM215 145h10.5v1.5h-10.5zM227 145h3v1.5h-3zM233 145h9v1.5h-9zM249.5 145h40.5v1.5h-40.5zM302 145h4.5v1.5h-4.5zM311 145h1.5v1.5h-1.5zM354.5 145h1.5v1.5h-1.5zM360.5 145h1.5v1.5h-1.5zM363.5 145h18v1.5h-18zM383 145h1.5v1.5h-1.5zM389 145h3v1.5h-3zM393.5 145h1.5v1.5h-1.5zM420.5 145h1.5v1.5h-1.5zM440 145h1.5v1.5h-1.5zM443 145h24v1.5h-24zM63.5 146.5h7.5v1.5h-7.5zM78.5 146.5h7.5v1.5h-7.5zM90.5 146.5h28.5v1.5h-28.5zM215 146.5h10.5v1.5h-10.5zM227 146.5h16.5v1.5h-16.5zM249.5 146.5h42v1.5h-42zM293 146.5h3v1.5h-3zM299 146.5h13.5v1.5h-13.5zM351.5 146.5h4.5v1.5h-4.5zM366.5 146.5h19.5v1.5h-19.5zM387.5 146.5h3v1.5h-3zM437 146.5h4.5v1.5h-4.5zM446 146.5h9v1.5h-9zM456.5 146.5h9v1.5h-9zM63.5 148h12v1.5h-12zM78.5 148h9v1.5h-9zM89 148h27v1.5h-27zM117.5 148h1.5v1.5h-1.5zM120.5 148h1.5v1.5h-1.5zM216.5 148h9v1.5h-9zM227 148h16.5v1.5h-16.5zM246.5 148h1.5v1.5h-1.5zM251 148h57v1.5h-57zM309.5 148h1.5v1.5h-1.5zM339.5 148h6v1.5h-6zM350 148h4.5v1.5h-4.5zM365 148h18v1.5h-18zM384.5 148h3v1.5h-3zM389 148h3v1.5h-3zM399.5 148h1.5v1.5h-1.5zM434 148h33v1.5h-33zM60.5 149.5h9v1.5h-9zM72.5 149.5h49.5v1.5h-49.5zM216.5 149.5h9v1.5h-9zM230 149.5h4.5v1.5h-4.5zM239 149.5h4.5v1.5h-4.5zM245 149.5h6v1.5h-6zM252.5 149.5h55.5v1.5h-55.5zM338 149.5h13.5v1.5h-13.5zM366.5 149.5h16.5v1.5h-16.5zM384.5 149.5h6v1.5h-6zM396.5 149.5h6v1.5h-6zM438.5 149.5h10.5v1.5h-10.5zM452 149.5h16.5v1.5h-16.5zM59 151h10.5v1.5h-10.5zM72.5 151h1.5v1.5h-1.5zM75.5 151h45v1.5h-45zM216.5 151h10.5v1.5h-10.5zM230 151h7.5v1.5h-7.5zM239 151h6v1.5h-6zM246.5 151h61.5v1.5h-61.5zM338 151h18v1.5h-18zM371 151h10.5v1.5h-10.5zM389 151h3v1.5h-3zM393.5 151h1.5v1.5h-1.5zM398 151h7.5v1.5h-7.5zM455 151h12v1.5h-12zM59 152.5h7.5v1.5h-7.5zM68 152.5h3v1.5h-3zM77 152.5h12v1.5h-12zM90.5 152.5h31.5v1.5h-31.5zM216.5 152.5h12v1.5h-12zM231.5 152.5h12v1.5h-12zM246.5 152.5h24v1.5h-24zM272 152.5h7.5v1.5h-7.5zM288.5 152.5h1.5v1.5h-1.5zM293 152.5h1.5v1.5h-1.5zM297.5 152.5h6v1.5h-6zM305 152.5h1.5v1.5h-1.5zM338 152.5h19.5v1.5h-19.5zM372.5 152.5h4.5v1.5h-4.5zM380 152.5h1.5v1.5h-1.5zM392 152.5h3v1.5h-3zM401 152.5h6v1.5h-6zM419 152.5h1.5v1.5h-1.5zM455 152.5h1.5v1.5h-1.5zM459.5 152.5h1.5v1.5h-1.5zM57.5 154h12v1.5h-12zM77 154h1.5v1.5h-1.5zM81.5 154h6v1.5h-6zM89 154h16.5v1.5h-16.5zM108.5 154h13.5v1.5h-13.5zM216.5 154h9v1.5h-9zM230 154h13.5v1.5h-13.5zM246.5 154h33v1.5h-33zM341 154h10.5v1.5h-10.5zM380 154h6v1.5h-6zM401 154h3v1.5h-3zM417.5 154h1.5v1.5h-1.5zM57.5 155.5h1.5v1.5h-1.5zM60.5 155.5h6v1.5h-6zM81.5 155.5h3v1.5h-3zM86 155.5h1.5v1.5h-1.5zM90.5 155.5h25.5v1.5h-25.5zM117.5 155.5h4.5v1.5h-4.5zM221 155.5h3v1.5h-3zM230 155.5h10.5v1.5h-10.5zM248 155.5h30v1.5h-30zM297.5 155.5h3v1.5h-3zM333.5 155.5h1.5v1.5h-1.5zM339.5 155.5h6v1.5h-6zM380 155.5h4.5v1.5h-4.5zM386 155.5h1.5v1.5h-1.5zM399.5 155.5h1.5v1.5h-1.5zM419 155.5h3v1.5h-3zM62 157h4.5v1.5h-4.5zM86 157h3v1.5h-3zM90.5 157h31.5v1.5h-31.5zM215 157h1.5v1.5h-1.5zM230 157h1.5v1.5h-1.5zM233 157h1.5v1.5h-1.5zM237.5 157h1.5v1.5h-1.5zM248 157h31.5v1.5h-31.5zM330.5 157h7.5v1.5h-7.5zM339.5 157h7.5v1.5h-7.5zM398 157h7.5v1.5h-7.5zM60.5 158.5h4.5v1.5h-4.5zM89 158.5h1.5v1.5h-1.5zM92 158.5h27v1.5h-27zM230 158.5h4.5v1.5h-4.5zM246.5 158.5h30v1.5h-30zM327.5 158.5h3v1.5h-3zM332 158.5h12v1.5h-12zM345.5 158.5h3v1.5h-3zM396.5 158.5h10.5v1.5h-10.5zM416 158.5h4.5v1.5h-4.5zM59 160h6v1.5h-6zM66.5 160h1.5v1.5h-1.5zM92 160h27v1.5h-27zM245 160h31.5v1.5h-31.5zM326 160h25.5v1.5h-25.5zM395 160h12v1.5h-12zM411.5 160h10.5v1.5h-10.5zM432.5 160h3v1.5h-3zM60.5 161.5h3v1.5h-3zM65 161.5h3v1.5h-3zM92 161.5h27v1.5h-27zM246.5 161.5h30v1.5h-30zM284 161.5h1.5v1.5h-1.5zM326 161.5h22.5v1.5h-22.5zM396.5 161.5h7.5v1.5h-7.5zM413 161.5h10.5v1.5h-10.5zM432.5 161.5h3v1.5h-3zM444.5 161.5h1.5v1.5h-1.5zM59 163h4.5v1.5h-4.5zM66.5 163h1.5v1.5h-1.5zM83 163h1.5v1.5h-1.5zM95 163h12v1.5h-12zM108.5 163h10.5v1.5h-10.5zM248 163h3v1.5h-3zM255.5 163h1.5v1.5h-1.5zM258.5 163h9v1.5h-9zM272 163h4.5v1.5h-4.5zM284 163h3v1.5h-3zM329 163h3v1.5h-3zM335 163h9v1.5h-9zM347 163h1.5v1.5h-1.5zM396.5 163h3v1.5h-3zM401 163h1.5v1.5h-1.5zM413 163h9v1.5h-9zM434 163h6v1.5h-6zM443 163h6v1.5h-6zM60.5 164.5h7.5v1.5h-7.5zM86 164.5h1.5v1.5h-1.5zM96.5 164.5h9v1.5h-9zM108.5 164.5h10.5v1.5h-10.5zM248 164.5h3v1.5h-3zM263 164.5h3v1.5h-3zM273.5 164.5h3v1.5h-3zM279.5 164.5h7.5v1.5h-7.5zM335 164.5h7.5v1.5h-7.5zM401 164.5h1.5v1.5h-1.5zM413 164.5h3v1.5h-3zM417.5 164.5h4.5v1.5h-4.5zM435.5 164.5h3v1.5h-3zM440 164.5h1.5v1.5h-1.5zM443 164.5h7.5v1.5h-7.5zM62 166h6v1.5h-6zM80 166h1.5v1.5h-1.5zM83 166h6v1.5h-6zM99.5 166h6v1.5h-6zM110 166h9v1.5h-9zM168.5 166h1.5v1.5h-1.5zM275 166h1.5v1.5h-1.5zM278 166h12v1.5h-12zM317 166h3v1.5h-3zM338 166h1.5v1.5h-1.5zM341 166h1.5v1.5h-1.5zM413 166h3v1.5h-3zM417.5 166h4.5v1.5h-4.5zM437 166h3v1.5h-3zM441.5 166h7.5v1.5h-7.5zM51.5 167.5h1.5v1.5h-1.5zM56 167.5h1.5v1.5h-1.5zM62 167.5h6v1.5h-6zM83 167.5h6v1.5h-6zM101 167.5h3v1.5h-3zM108.5 167.5h10.5v1.5h-10.5zM167 167.5h4.5v1.5h-4.5zM185 167.5h4.5v1.5h-4.5zM197 167.5h1.5v1.5h-1.5zM275 167.5h1.5v1.5h-1.5zM278 167.5h13.5v1.5h-13.5zM414.5 167.5h1.5v1.5h-1.5zM419 167.5h1.5v1.5h-1.5zM441.5 167.5h6v1.5h-6zM51.5 169h1.5v1.5h-1.5zM54.5 169h13.5v1.5h-13.5zM80 169h9v1.5h-9zM102.5 169h3v1.5h-3zM108.5 169h9v1.5h-9zM165.5 169h10.5v1.5h-10.5zM183.5 169h7.5v1.5h-7.5zM192.5 169h1.5v1.5h-1.5zM278 169h12v1.5h-12zM291.5 169h4.5v1.5h-4.5zM314 169h3v1.5h-3zM429.5 169h1.5v1.5h-1.5zM435.5 169h3v1.5h-3zM443 169h4.5v1.5h-4.5zM51.5 170.5h1.5v1.5h-1.5zM54.5 170.5h3v1.5h-3zM63.5 170.5h3v1.5h-3zM80 170.5h9v1.5h-9zM102.5 170.5h15v1.5h-15zM165.5 170.5h10.5v1.5h-10.5zM183.5 170.5h18v1.5h-18zM204.5 170.5h3v1.5h-3zM210.5 170.5h4.5v1.5h-4.5zM279.5 170.5h16.5v1.5h-16.5zM314 170.5h3v1.5h-3zM438.5 170.5h3v1.5h-3zM443 170.5h3v1.5h-3zM54.5 172h1.5v1.5h-1.5zM81.5 172h3v1.5h-3zM86 172h3v1.5h-3zM101 172h18v1.5h-18zM122 172h1.5v1.5h-1.5zM125 172h3v1.5h-3zM167 172h9v1.5h-9zM185 172h16.5v1.5h-16.5zM206 172h1.5v1.5h-1.5zM210.5 172h1.5v1.5h-1.5zM213.5 172h3v1.5h-3zM282.5 172h15v1.5h-15zM317 172h4.5v1.5h-4.5zM438.5 172h4.5v1.5h-4.5zM447.5 172h6v1.5h-6zM81.5 173.5h7.5v1.5h-7.5zM102.5 173.5h6v1.5h-6zM117.5 173.5h1.5v1.5h-1.5zM120.5 173.5h6v1.5h-6zM156.5 173.5h7.5v1.5h-7.5zM167 173.5h9v1.5h-9zM183.5 173.5h24v1.5h-24zM210.5 173.5h3v1.5h-3zM216.5 173.5h7.5v1.5h-7.5zM282.5 173.5h15v1.5h-15zM318.5 173.5h3v1.5h-3zM440 173.5h1.5v1.5h-1.5zM447.5 173.5h7.5v1.5h-7.5zM456.5 173.5h1.5v1.5h-1.5zM83 175h6v1.5h-6zM105.5 175h3v1.5h-3zM110 175h1.5v1.5h-1.5zM119 175h7.5v1.5h-7.5zM155 175h12v1.5h-12zM170 175h4.5v1.5h-4.5zM183.5 175h24v1.5h-24zM210.5 175h1.5v1.5h-1.5zM215 175h9v1.5h-9zM281 175h16.5v1.5h-16.5zM443 175h1.5v1.5h-1.5zM449 175h16.5v1.5h-16.5zM75.5 176.5h3v1.5h-3zM83 176.5h6v1.5h-6zM119 176.5h6v1.5h-6zM137 176.5h4.5v1.5h-4.5zM143 176.5h1.5v1.5h-1.5zM146 176.5h1.5v1.5h-1.5zM153.5 176.5h13.5v1.5h-13.5zM171.5 176.5h3v1.5h-3zM183.5 176.5h24v1.5h-24zM215 176.5h9v1.5h-9zM234.5 176.5h1.5v1.5h-1.5zM237.5 176.5h1.5v1.5h-1.5zM281 176.5h16.5v1.5h-16.5zM314 176.5h1.5v1.5h-1.5zM320 176.5h1.5v1.5h-1.5zM323 176.5h1.5v1.5h-1.5zM449 176.5h19.5v1.5h-19.5zM80 178h1.5v1.5h-1.5zM83 178h7.5v1.5h-7.5zM117.5 178h6v1.5h-6zM135.5 178h3v1.5h-3zM140 178h1.5v1.5h-1.5zM143 178h22.5v1.5h-22.5zM171.5 178h4.5v1.5h-4.5zM183.5 178h43.5v1.5h-43.5zM282.5 178h15v1.5h-15zM309.5 178h13.5v1.5h-13.5zM326 178h3v1.5h-3zM449 178h21v1.5h-21zM78.5 179.5h3v1.5h-3zM84.5 179.5h4.5v1.5h-4.5zM135.5 179.5h30v1.5h-30zM170 179.5h4.5v1.5h-4.5zM176 179.5h51v1.5h-51zM231.5 179.5h1.5v1.5h-1.5zM284 179.5h12v1.5h-12zM297.5 179.5h1.5v1.5h-1.5zM306.5 179.5h22.5v1.5h-22.5zM450.5 179.5h19.5v1.5h-19.5zM471.5 179.5h1.5v1.5h-1.5zM78.5 181h3v1.5h-3zM86 181h1.5v1.5h-1.5zM134 181h39v1.5h-39zM176 181h3v1.5h-3zM180.5 181h1.5v1.5h-1.5zM183.5 181h49.5v1.5h-49.5zM284 181h9v1.5h-9zM296 181h3v1.5h-3zM302 181h21v1.5h-21zM326 181h3v1.5h-3zM453.5 181h18v1.5h-18zM66.5 182.5h3v1.5h-3zM71 182.5h1.5v1.5h-1.5zM129.5 182.5h40.5v1.5h-40.5zM174.5 182.5h6v1.5h-6zM183.5 182.5h4.5v1.5h-4.5zM189.5 182.5h22.5v1.5h-22.5zM213.5 182.5h19.5v1.5h-19.5zM234.5 182.5h1.5v1.5h-1.5zM282.5 182.5h1.5v1.5h-1.5zM296 182.5h4.5v1.5h-4.5zM302 182.5h21v1.5h-21zM326 182.5h3v1.5h-3zM344 182.5h1.5v1.5h-1.5zM453.5 182.5h6v1.5h-6zM461 182.5h4.5v1.5h-4.5zM476 182.5h3v1.5h-3zM480.5 182.5h4.5v1.5h-4.5zM65 184h7.5v1.5h-7.5zM86 184h1.5v1.5h-1.5zM131 184h16.5v1.5h-16.5zM149 184h1.5v1.5h-1.5zM152 184h19.5v1.5h-19.5zM174.5 184h63v1.5h-63zM297.5 184h21v1.5h-21zM320 184h1.5v1.5h-1.5zM344 184h1.5v1.5h-1.5zM353 184h7.5v1.5h-7.5zM453.5 184h7.5v1.5h-7.5zM473 184h1.5v1.5h-1.5zM476 184h1.5v1.5h-1.5zM479 184h6v1.5h-6zM65 185.5h1.5v1.5h-1.5zM68 185.5h4.5v1.5h-4.5zM131 185.5h18v1.5h-18zM158 185.5h4.5v1.5h-4.5zM173 185.5h10.5v1.5h-10.5zM185 185.5h51v1.5h-51zM285.5 185.5h3v1.5h-3zM302 185.5h15v1.5h-15zM327.5 185.5h1.5v1.5h-1.5zM330.5 185.5h3v1.5h-3zM342.5 185.5h4.5v1.5h-4.5zM348.5 185.5h13.5v1.5h-13.5zM456.5 185.5h4.5v1.5h-4.5zM470 185.5h4.5v1.5h-4.5zM479 185.5h1.5v1.5h-1.5zM68 187h1.5v1.5h-1.5zM129.5 187h18v1.5h-18zM171.5 187h1.5v1.5h-1.5zM176 187h4.5v1.5h-4.5zM183.5 187h1.5v1.5h-1.5zM186.5 187h49.5v1.5h-49.5zM282.5 187h6v1.5h-6zM290 187h1.5v1.5h-1.5zM302 187h15v1.5h-15zM327.5 187h9v1.5h-9zM342.5 187h19.5v1.5h-19.5zM456.5 187h3v1.5h-3zM473 187h1.5v1.5h-1.5zM479 187h1.5v1.5h-1.5zM69.5 188.5h1.5v1.5h-1.5zM129.5 188.5h16.5v1.5h-16.5zM162.5 188.5h1.5v1.5h-1.5zM177.5 188.5h7.5v1.5h-7.5zM186.5 188.5h22.5v1.5h-22.5zM213.5 188.5h1.5v1.5h-1.5zM216.5 188.5h19.5v1.5h-19.5zM275 188.5h27v1.5h-27zM306.5 188.5h12v1.5h-12zM327.5 188.5h9v1.5h-9zM342.5 188.5h7.5v1.5h-7.5zM351.5 188.5h9v1.5h-9zM459.5 188.5h1.5v1.5h-1.5zM129.5 190h15v1.5h-15zM171.5 190h13.5v1.5h-13.5zM186.5 190h13.5v1.5h-13.5zM201.5 190h6v1.5h-6zM221 190h15v1.5h-15zM263 190h1.5v1.5h-1.5zM272 190h30v1.5h-30zM308 190h6v1.5h-6zM327.5 190h9v1.5h-9zM344 190h4.5v1.5h-4.5zM351.5 190h7.5v1.5h-7.5zM134 191.5h10.5v1.5h-10.5zM173 191.5h3v1.5h-3zM177.5 191.5h4.5v1.5h-4.5zM186.5 191.5h12v1.5h-12zM200 191.5h12v1.5h-12zM221 191.5h3v1.5h-3zM227 191.5h7.5v1.5h-7.5zM255.5 191.5h4.5v1.5h-4.5zM263 191.5h1.5v1.5h-1.5zM269 191.5h31.5v1.5h-31.5zM308 191.5h6v1.5h-6zM330.5 191.5h1.5v1.5h-1.5zM344 191.5h6v1.5h-6zM353 191.5h7.5v1.5h-7.5zM468.5 191.5h3v1.5h-3zM134 193h10.5v1.5h-10.5zM173 193h1.5v1.5h-1.5zM177.5 193h3v1.5h-3zM182 193h16.5v1.5h-16.5zM200 193h12v1.5h-12zM227 193h7.5v1.5h-7.5zM254 193h6v1.5h-6zM263 193h39v1.5h-39zM306.5 193h6v1.5h-6zM344 193h6v1.5h-6zM353 193h6v1.5h-6zM467 193h4.5v1.5h-4.5zM473 193h1.5v1.5h-1.5zM68 194.5h6v1.5h-6zM137 194.5h6v1.5h-6zM171.5 194.5h4.5v1.5h-4.5zM182 194.5h22.5v1.5h-22.5zM206 194.5h6v1.5h-6zM225.5 194.5h1.5v1.5h-1.5zM228.5 194.5h6v1.5h-6zM254 194.5h6v1.5h-6zM263 194.5h37.5v1.5h-37.5zM303.5 194.5h1.5v1.5h-1.5zM306.5 194.5h3v1.5h-3zM344 194.5h13.5v1.5h-13.5zM359 194.5h1.5v1.5h-1.5zM462.5 194.5h12v1.5h-12zM66.5 196h7.5v1.5h-7.5zM138.5 196h4.5v1.5h-4.5zM173 196h3v1.5h-3zM180.5 196h31.5v1.5h-31.5zM225.5 196h3v1.5h-3zM230 196h3v1.5h-3zM254 196h6v1.5h-6zM263 196h39v1.5h-39zM303.5 196h1.5v1.5h-1.5zM306.5 196h3v1.5h-3zM317 196h1.5v1.5h-1.5zM344 196h15v1.5h-15zM360.5 196h1.5v1.5h-1.5zM462.5 196h13.5v1.5h-13.5zM66.5 197.5h6v1.5h-6zM138.5 197.5h6v1.5h-6zM180.5 197.5h37.5v1.5h-37.5zM231.5 197.5h1.5v1.5h-1.5zM254 197.5h6v1.5h-6zM267.5 197.5h33v1.5h-33zM302 197.5h4.5v1.5h-4.5zM308 197.5h3v1.5h-3zM342.5 197.5h7.5v1.5h-7.5zM351.5 197.5h9v1.5h-9zM468.5 197.5h7.5v1.5h-7.5zM63.5 199h9v1.5h-9zM83 199h1.5v1.5h-1.5zM138.5 199h7.5v1.5h-7.5zM152 199h3v1.5h-3zM180.5 199h37.5v1.5h-37.5zM267.5 199h1.5v1.5h-1.5zM270.5 199h36v1.5h-36zM309.5 199h1.5v1.5h-1.5zM344 199h6v1.5h-6zM353 199h6v1.5h-6zM471.5 199h1.5v1.5h-1.5zM63.5 200.5h9v1.5h-9zM138.5 200.5h7.5v1.5h-7.5zM147.5 200.5h1.5v1.5h-1.5zM150.5 200.5h6v1.5h-6zM180.5 200.5h37.5v1.5h-37.5zM272 200.5h12v1.5h-12zM287 200.5h3v1.5h-3zM291.5 200.5h6v1.5h-6zM299 200.5h3v1.5h-3zM344 200.5h4.5v1.5h-4.5zM353 200.5h7.5v1.5h-7.5zM411.5 200.5h3v1.5h-3zM62 202h10.5v1.5h-10.5zM83 202h7.5v1.5h-7.5zM104 202h4.5v1.5h-4.5zM144.5 202h10.5v1.5h-10.5zM179 202h37.5v1.5h-37.5zM291.5 202h7.5v1.5h-7.5zM354.5 202h4.5v1.5h-4.5zM411.5 202h6v1.5h-6zM57.5 203.5h1.5v1.5h-1.5zM62 203.5h10.5v1.5h-10.5zM81.5 203.5h10.5v1.5h-10.5zM105.5 203.5h3v1.5h-3zM116 203.5h1.5v1.5h-1.5zM144.5 203.5h10.5v1.5h-10.5zM179 203.5h37.5v1.5h-37.5zM282.5 203.5h19.5v1.5h-19.5zM312.5 203.5h1.5v1.5h-1.5zM410 203.5h7.5v1.5h-7.5zM419 203.5h1.5v1.5h-1.5zM54.5 205h1.5v1.5h-1.5zM59 205h3v1.5h-3zM63.5 205h9v1.5h-9zM81.5 205h10.5v1.5h-10.5zM108.5 205h7.5v1.5h-7.5zM144.5 205h1.5v1.5h-1.5zM147.5 205h4.5v1.5h-4.5zM179 205h39v1.5h-39zM282.5 205h19.5v1.5h-19.5zM308 205h10.5v1.5h-10.5zM408.5 205h10.5v1.5h-10.5zM422 205h3v1.5h-3zM53 206.5h1.5v1.5h-1.5zM56 206.5h1.5v1.5h-1.5zM59 206.5h4.5v1.5h-4.5zM66.5 206.5h4.5v1.5h-4.5zM72.5 206.5h1.5v1.5h-1.5zM81.5 206.5h10.5v1.5h-10.5zM108.5 206.5h10.5v1.5h-10.5zM144.5 206.5h7.5v1.5h-7.5zM179 206.5h39v1.5h-39zM282.5 206.5h21v1.5h-21zM306.5 206.5h15v1.5h-15zM354.5 206.5h7.5v1.5h-7.5zM363.5 206.5h1.5v1.5h-1.5zM384.5 206.5h1.5v1.5h-1.5zM401 206.5h3v1.5h-3zM410 206.5h9v1.5h-9zM422 206.5h3v1.5h-3zM54.5 208h7.5v1.5h-7.5zM63.5 208h6v1.5h-6zM81.5 208h9v1.5h-9zM101 208h1.5v1.5h-1.5zM104 208h10.5v1.5h-10.5zM149 208h6v1.5h-6zM180.5 208h37.5v1.5h-37.5zM278 208h24v1.5h-24zM306.5 208h18v1.5h-18zM326 208h6v1.5h-6zM354.5 208h10.5v1.5h-10.5zM384.5 208h4.5v1.5h-4.5zM399.5 208h25.5v1.5h-25.5zM51.5 209.5h1.5v1.5h-1.5zM54.5 209.5h7.5v1.5h-7.5zM81.5 209.5h9v1.5h-9zM98 209.5h16.5v1.5h-16.5zM122 209.5h3v1.5h-3zM150.5 209.5h1.5v1.5h-1.5zM155 209.5h3v1.5h-3zM165.5 209.5h1.5v1.5h-1.5zM182 209.5h34.5v1.5h-34.5zM276.5 209.5h24v1.5h-24zM308 209.5h6v1.5h-6zM315.5 209.5h16.5v1.5h-16.5zM354.5 209.5h12v1.5h-12zM369.5 209.5h1.5v1.5h-1.5zM372.5 209.5h1.5v1.5h-1.5zM384.5 209.5h4.5v1.5h-4.5zM399.5 209.5h9v1.5h-9zM410 209.5h15v1.5h-15zM51.5 211h4.5v1.5h-4.5zM59 211h3v1.5h-3zM80 211h6v1.5h-6zM87.5 211h3v1.5h-3zM92 211h25.5v1.5h-25.5zM119 211h7.5v1.5h-7.5zM146 211h1.5v1.5h-1.5zM152 211h3v1.5h-3zM156.5 211h3v1.5h-3zM164 211h4.5v1.5h-4.5zM180.5 211h36v1.5h-36zM279.5 211h21v1.5h-21zM303.5 211h1.5v1.5h-1.5zM311 211h1.5v1.5h-1.5zM314 211h19.5v1.5h-19.5zM357.5 211h9v1.5h-9zM372.5 211h6v1.5h-6zM383 211h9v1.5h-9zM402.5 211h22.5v1.5h-22.5zM51.5 212.5h4.5v1.5h-4.5zM59 212.5h3v1.5h-3zM92 212.5h34.5v1.5h-34.5zM140 212.5h9v1.5h-9zM150.5 212.5h10.5v1.5h-10.5zM164 212.5h4.5v1.5h-4.5zM182 212.5h34.5v1.5h-34.5zM279.5 212.5h21v1.5h-21zM311 212.5h1.5v1.5h-1.5zM317 212.5h15v1.5h-15zM350 212.5h1.5v1.5h-1.5zM354.5 212.5h13.5v1.5h-13.5zM371 212.5h9v1.5h-9zM381.5 212.5h13.5v1.5h-13.5zM407 212.5h12v1.5h-12zM422 212.5h3v1.5h-3zM53 214h3v1.5h-3zM60.5 214h3v1.5h-3zM89 214h40.5v1.5h-40.5zM138.5 214h31.5v1.5h-31.5zM179 214h1.5v1.5h-1.5zM185 214h18v1.5h-18zM204.5 214h12v1.5h-12zM279.5 214h19.5v1.5h-19.5zM300.5 214h1.5v1.5h-1.5zM303.5 214h1.5v1.5h-1.5zM321.5 214h1.5v1.5h-1.5zM324.5 214h4.5v1.5h-4.5zM351.5 214h1.5v1.5h-1.5zM354.5 214h1.5v1.5h-1.5zM357.5 214h18v1.5h-18zM380 214h19.5v1.5h-19.5zM407 214h9v1.5h-9zM417.5 214h1.5v1.5h-1.5zM53 215.5h3v1.5h-3zM59 215.5h1.5v1.5h-1.5zM62 215.5h3v1.5h-3zM89 215.5h40.5v1.5h-40.5zM131 215.5h4.5v1.5h-4.5zM138.5 215.5h36v1.5h-36zM176 215.5h6v1.5h-6zM183.5 215.5h12v1.5h-12zM197 215.5h4.5v1.5h-4.5zM204.5 215.5h9v1.5h-9zM276.5 215.5h3v1.5h-3zM282.5 215.5h13.5v1.5h-13.5zM305 215.5h1.5v1.5h-1.5zM309.5 215.5h4.5v1.5h-4.5zM317 215.5h1.5v1.5h-1.5zM351.5 215.5h1.5v1.5h-1.5zM356 215.5h10.5v1.5h-10.5zM368 215.5h6v1.5h-6zM380 215.5h19.5v1.5h-19.5zM408.5 215.5h3v1.5h-3zM413 215.5h1.5v1.5h-1.5zM51.5 217h16.5v1.5h-16.5zM89 217h82.5v1.5h-82.5zM174.5 217h7.5v1.5h-7.5zM183.5 217h10.5v1.5h-10.5zM197 217h6v1.5h-6zM207.5 217h4.5v1.5h-4.5zM278 217h1.5v1.5h-1.5zM281 217h15v1.5h-15zM303.5 217h13.5v1.5h-13.5zM348.5 217h24v1.5h-24zM378.5 217h21v1.5h-21zM51.5 218.5h18v1.5h-18zM86 218.5h19.5v1.5h-19.5zM107 218.5h1.5v1.5h-1.5zM110 218.5h21v1.5h-21zM137 218.5h34.5v1.5h-34.5zM176 218.5h27v1.5h-27zM279.5 218.5h10.5v1.5h-10.5zM293 218.5h3v1.5h-3zM303.5 218.5h3v1.5h-3zM308 218.5h13.5v1.5h-13.5zM347 218.5h25.5v1.5h-25.5zM378.5 218.5h21v1.5h-21zM51.5 220h19.5v1.5h-19.5zM87.5 220h16.5v1.5h-16.5zM108.5 220h13.5v1.5h-13.5zM126.5 220h3v1.5h-3zM137 220h33v1.5h-33zM174.5 220h22.5v1.5h-22.5zM198.5 220h1.5v1.5h-1.5zM278 220h18v1.5h-18zM305 220h16.5v1.5h-16.5zM326 220h1.5v1.5h-1.5zM345.5 220h27v1.5h-27zM380 220h19.5v1.5h-19.5zM51.5 221.5h19.5v1.5h-19.5zM89 221.5h13.5v1.5h-13.5zM108.5 221.5h12v1.5h-12zM129.5 221.5h1.5v1.5h-1.5zM140 221.5h36v1.5h-36zM177.5 221.5h15v1.5h-15zM195.5 221.5h1.5v1.5h-1.5zM264.5 221.5h1.5v1.5h-1.5zM278 221.5h19.5v1.5h-19.5zM306.5 221.5h15v1.5h-15zM329 221.5h1.5v1.5h-1.5zM344 221.5h25.5v1.5h-25.5zM371 221.5h1.5v1.5h-1.5zM383 221.5h15v1.5h-15zM51.5 223h21v1.5h-21zM87.5 223h13.5v1.5h-13.5zM110 223h9v1.5h-9zM141.5 223h30v1.5h-30zM173 223h18v1.5h-18zM195.5 223h1.5v1.5h-1.5zM200 223h4.5v1.5h-4.5zM264.5 223h3v1.5h-3zM278 223h19.5v1.5h-19.5zM306.5 223h21v1.5h-21zM329 223h4.5v1.5h-4.5zM345.5 223h33v1.5h-33zM381.5 223h7.5v1.5h-7.5zM392 223h6v1.5h-6zM51.5 224.5h21v1.5h-21zM90.5 224.5h10.5v1.5h-10.5zM108.5 224.5h9v1.5h-9zM143 224.5h6v1.5h-6zM150.5 224.5h19.5v1.5h-19.5zM173 224.5h18v1.5h-18zM198.5 224.5h3v1.5h-3zM221 224.5h1.5v1.5h-1.5zM261.5 224.5h6v1.5h-6zM278 224.5h21v1.5h-21zM312.5 224.5h16.5v1.5h-16.5zM344 224.5h22.5v1.5h-22.5zM368 224.5h13.5v1.5h-13.5zM383 224.5h9v1.5h-9zM440 224.5h1.5v1.5h-1.5zM455 224.5h1.5v1.5h-1.5zM464 224.5h4.5v1.5h-4.5zM51.5 226h21v1.5h-21zM92 226h7.5v1.5h-7.5zM110 226h6v1.5h-6zM143 226h6v1.5h-6zM152 226h16.5v1.5h-16.5zM174.5 226h18v1.5h-18zM194 226h4.5v1.5h-4.5zM219.5 226h4.5v1.5h-4.5zM261.5 226h6v1.5h-6zM270.5 226h1.5v1.5h-1.5zM276.5 226h22.5v1.5h-22.5zM315.5 226h1.5v1.5h-1.5zM318.5 226h10.5v1.5h-10.5zM344 226h19.5v1.5h-19.5zM369.5 226h15v1.5h-15zM426.5 226h1.5v1.5h-1.5zM438.5 226h3v1.5h-3zM455 226h3v1.5h-3zM459.5 226h1.5v1.5h-1.5zM462.5 226h7.5v1.5h-7.5zM51.5 227.5h19.5v1.5h-19.5zM92 227.5h6v1.5h-6zM110 227.5h6v1.5h-6zM153.5 227.5h9v1.5h-9zM173 227.5h27v1.5h-27zM216.5 227.5h7.5v1.5h-7.5zM260 227.5h15v1.5h-15zM276.5 227.5h21v1.5h-21zM311 227.5h1.5v1.5h-1.5zM344 227.5h18v1.5h-18zM369.5 227.5h13.5v1.5h-13.5zM425 227.5h1.5v1.5h-1.5zM435.5 227.5h1.5v1.5h-1.5zM438.5 227.5h1.5v1.5h-1.5zM441.5 227.5h1.5v1.5h-1.5zM447.5 227.5h19.5v1.5h-19.5zM468.5 227.5h1.5v1.5h-1.5zM51.5 229h19.5v1.5h-19.5zM123.5 229h3v1.5h-3zM128 229h3v1.5h-3zM158 229h1.5v1.5h-1.5zM173 229h6v1.5h-6zM180.5 229h21v1.5h-21zM216.5 229h7.5v1.5h-7.5zM251 229h7.5v1.5h-7.5zM260 229h39v1.5h-39zM303.5 229h6v1.5h-6zM345.5 229h15v1.5h-15zM369.5 229h7.5v1.5h-7.5zM378.5 229h4.5v1.5h-4.5zM438.5 229h1.5v1.5h-1.5zM441.5 229h6v1.5h-6zM450.5 229h15v1.5h-15zM51.5 230.5h15v1.5h-15zM68 230.5h1.5v1.5h-1.5zM123.5 230.5h7.5v1.5h-7.5zM174.5 230.5h24v1.5h-24zM215 230.5h9v1.5h-9zM243.5 230.5h3v1.5h-3zM252.5 230.5h58.5v1.5h-58.5zM312.5 230.5h4.5v1.5h-4.5zM318.5 230.5h1.5v1.5h-1.5zM350 230.5h9v1.5h-9zM369.5 230.5h13.5v1.5h-13.5zM416 230.5h1.5v1.5h-1.5zM437 230.5h9v1.5h-9zM450.5 230.5h16.5v1.5h-16.5zM50 232h15v1.5h-15zM68 232h3v1.5h-3zM125 232h6v1.5h-6zM174.5 232h24v1.5h-24zM215 232h7.5v1.5h-7.5zM240.5 232h70.5v1.5h-70.5zM312.5 232h9v1.5h-9zM351.5 232h6v1.5h-6zM371 232h1.5v1.5h-1.5zM374 232h3v1.5h-3zM411.5 232h6v1.5h-6zM437 232h9v1.5h-9zM452 232h10.5v1.5h-10.5zM50 233.5h16.5v1.5h-16.5zM123.5 233.5h9v1.5h-9zM174.5 233.5h24v1.5h-24zM213.5 233.5h10.5v1.5h-10.5zM236 233.5h40.5v1.5h-40.5zM279.5 233.5h40.5v1.5h-40.5zM413 233.5h6v1.5h-6zM437 233.5h9v1.5h-9zM452 233.5h4.5v1.5h-4.5zM458 233.5h1.5v1.5h-1.5zM54.5 235h7.5v1.5h-7.5zM122 235h4.5v1.5h-4.5zM128 235h3v1.5h-3zM173 235h1.5v1.5h-1.5zM180.5 235h18v1.5h-18zM215 235h10.5v1.5h-10.5zM231.5 235h45v1.5h-45zM279.5 235h25.5v1.5h-25.5zM306.5 235h13.5v1.5h-13.5zM393.5 235h4.5v1.5h-4.5zM413 235h6v1.5h-6zM434 235h1.5v1.5h-1.5zM437 235h12v1.5h-12zM51.5 236.5h10.5v1.5h-10.5zM123.5 236.5h1.5v1.5h-1.5zM171.5 236.5h6v1.5h-6zM179 236.5h18v1.5h-18zM215 236.5h3v1.5h-3zM219.5 236.5h1.5v1.5h-1.5zM225.5 236.5h1.5v1.5h-1.5zM230 236.5h46.5v1.5h-46.5zM281 236.5h40.5v1.5h-40.5zM387.5 236.5h1.5v1.5h-1.5zM393.5 236.5h1.5v1.5h-1.5zM396.5 236.5h1.5v1.5h-1.5zM413 236.5h6v1.5h-6zM437 236.5h3v1.5h-3zM51.5 238h4.5v1.5h-4.5zM171.5 238h9v1.5h-9zM182 238h1.5v1.5h-1.5zM186.5 238h1.5v1.5h-1.5zM192.5 238h6v1.5h-6zM215 238h3v1.5h-3zM225.5 238h54v1.5h-54zM282.5 238h40.5v1.5h-40.5zM384.5 238h4.5v1.5h-4.5zM392 238h1.5v1.5h-1.5zM396.5 238h1.5v1.5h-1.5zM414.5 238h1.5v1.5h-1.5zM435.5 238h1.5v1.5h-1.5zM165.5 239.5h3v1.5h-3zM170 239.5h9v1.5h-9zM180.5 239.5h1.5v1.5h-1.5zM188 239.5h16.5v1.5h-16.5zM224 239.5h57v1.5h-57zM282.5 239.5h39v1.5h-39zM383 239.5h10.5v1.5h-10.5zM395 239.5h3v1.5h-3zM401 239.5h1.5v1.5h-1.5zM167 241h10.5v1.5h-10.5zM180.5 241h1.5v1.5h-1.5zM188 241h15v1.5h-15zM207.5 241h4.5v1.5h-4.5zM221 241h1.5v1.5h-1.5zM224 241h57v1.5h-57zM282.5 241h39v1.5h-39zM380 241h16.5v1.5h-16.5zM401 241h1.5v1.5h-1.5zM428 241h4.5v1.5h-4.5zM167 242.5h12v1.5h-12zM180.5 242.5h3v1.5h-3zM188 242.5h18v1.5h-18zM207.5 242.5h6v1.5h-6zM215 242.5h1.5v1.5h-1.5zM221 242.5h60v1.5h-60zM282.5 242.5h15v1.5h-15zM299 242.5h22.5v1.5h-22.5zM380 242.5h16.5v1.5h-16.5zM399.5 242.5h1.5v1.5h-1.5zM425 242.5h1.5v1.5h-1.5zM428 242.5h7.5v1.5h-7.5zM165.5 244h54v1.5h-54zM222.5 244h55.5v1.5h-55.5zM282.5 244h40.5v1.5h-40.5zM378.5 244h24v1.5h-24zM420.5 244h1.5v1.5h-1.5zM423.5 244h13.5v1.5h-13.5zM438.5 244h1.5v1.5h-1.5zM164 245.5h43.5v1.5h-43.5zM209 245.5h64.5v1.5h-64.5zM282.5 245.5h40.5v1.5h-40.5zM375.5 245.5h18v1.5h-18zM395 245.5h9v1.5h-9zM417.5 245.5h1.5v1.5h-1.5zM422 245.5h21v1.5h-21zM167 247h109.5v1.5h-109.5zM284 247h40.5v1.5h-40.5zM347 247h3v1.5h-3zM377 247h27v1.5h-27zM422 247h21v1.5h-21zM444.5 247h1.5v1.5h-1.5zM83 248.5h3v1.5h-3zM168.5 248.5h37.5v1.5h-37.5zM209 248.5h1.5v1.5h-1.5zM213.5 248.5h61.5v1.5h-61.5zM284 248.5h3v1.5h-3zM293 248.5h7.5v1.5h-7.5zM302 248.5h18v1.5h-18zM345.5 248.5h6v1.5h-6zM377 248.5h31.5v1.5h-31.5zM420.5 248.5h25.5v1.5h-25.5zM83 250h1.5v1.5h-1.5zM87.5 250h1.5v1.5h-1.5zM168.5 250h3v1.5h-3zM173 250h39v1.5h-39zM213.5 250h63v1.5h-63zM291.5 250h30v1.5h-30zM344 250h7.5v1.5h-7.5zM375.5 250h31.5v1.5h-31.5zM419 250h30v1.5h-30zM450.5 250h3v1.5h-3zM86 251.5h1.5v1.5h-1.5zM89 251.5h1.5v1.5h-1.5zM179 251.5h97.5v1.5h-97.5zM281 251.5h1.5v1.5h-1.5zM290 251.5h13.5v1.5h-13.5zM305 251.5h16.5v1.5h-16.5zM342.5 251.5h9v1.5h-9zM366.5 251.5h1.5v1.5h-1.5zM375.5 251.5h7.5v1.5h-7.5zM384.5 251.5h22.5v1.5h-22.5zM417.5 251.5h36v1.5h-36zM455 251.5h1.5v1.5h-1.5zM180.5 253h97.5v1.5h-97.5zM290 253h21v1.5h-21zM312.5 253h4.5v1.5h-4.5zM344 253h6v1.5h-6zM359 253h4.5v1.5h-4.5zM365 253h7.5v1.5h-7.5zM375.5 253h7.5v1.5h-7.5zM384.5 253h22.5v1.5h-22.5zM413 253h1.5v1.5h-1.5zM416 253h40.5v1.5h-40.5zM180.5 254.5h97.5v1.5h-97.5zM290 254.5h4.5v1.5h-4.5zM299 254.5h9v1.5h-9zM312.5 254.5h3v1.5h-3zM342.5 254.5h7.5v1.5h-7.5zM354.5 254.5h15v1.5h-15zM371 254.5h37.5v1.5h-37.5zM413 254.5h16.5v1.5h-16.5zM431 254.5h15v1.5h-15zM447.5 254.5h9v1.5h-9zM182 256h97.5v1.5h-97.5zM287 256h25.5v1.5h-25.5zM342.5 256h6v1.5h-6zM353 256h55.5v1.5h-55.5zM413 256h13.5v1.5h-13.5zM431 256h27v1.5h-27zM185 257.5h94.5v1.5h-94.5zM287 257.5h22.5v1.5h-22.5zM338 257.5h1.5v1.5h-1.5zM342.5 257.5h7.5v1.5h-7.5zM351.5 257.5h31.5v1.5h-31.5zM386 257.5h22.5v1.5h-22.5zM413 257.5h12v1.5h-12zM434 257.5h21v1.5h-21zM456.5 257.5h1.5v1.5h-1.5zM183.5 259h12v1.5h-12zM197 259h82.5v1.5h-82.5zM291.5 259h18v1.5h-18zM342.5 259h39v1.5h-39zM386 259h24v1.5h-24zM411.5 259h13.5v1.5h-13.5zM434 259h22.5v1.5h-22.5zM183.5 260.5h72v1.5h-72zM257 260.5h24v1.5h-24zM290 260.5h15v1.5h-15zM306.5 260.5h1.5v1.5h-1.5zM344 260.5h6v1.5h-6zM351.5 260.5h30v1.5h-30zM384.5 260.5h43.5v1.5h-43.5zM432.5 260.5h25.5v1.5h-25.5zM183.5 262h97.5v1.5h-97.5zM290 262h16.5v1.5h-16.5zM345.5 262h3v1.5h-3zM350 262h33v1.5h-33zM386 262h72v1.5h-72zM63.5 263.5h1.5v1.5h-1.5zM194 263.5h3v1.5h-3zM207.5 263.5h48v1.5h-48zM260 263.5h16.5v1.5h-16.5zM294.5 263.5h10.5v1.5h-10.5zM306.5 263.5h1.5v1.5h-1.5zM347 263.5h1.5v1.5h-1.5zM350 263.5h33v1.5h-33zM386 263.5h21v1.5h-21zM408.5 263.5h3v1.5h-3zM414.5 263.5h40.5v1.5h-40.5zM165.5 265h4.5v1.5h-4.5zM209 265h6v1.5h-6zM222.5 265h1.5v1.5h-1.5zM227 265h27v1.5h-27zM258.5 265h15v1.5h-15zM296 265h10.5v1.5h-10.5zM350 265h28.5v1.5h-28.5zM380 265h1.5v1.5h-1.5zM384.5 265h22.5v1.5h-22.5zM419 265h27v1.5h-27zM447.5 265h1.5v1.5h-1.5zM450.5 265h4.5v1.5h-4.5zM54.5 266.5h4.5v1.5h-4.5zM162.5 266.5h9v1.5h-9zM209 266.5h4.5v1.5h-4.5zM215 266.5h3v1.5h-3zM228.5 266.5h28.5v1.5h-28.5zM258.5 266.5h1.5v1.5h-1.5zM261.5 266.5h1.5v1.5h-1.5zM272 266.5h1.5v1.5h-1.5zM296 266.5h9v1.5h-9zM350 266.5h27v1.5h-27zM378.5 266.5h27v1.5h-27zM420.5 266.5h27v1.5h-27zM450.5 266.5h1.5v1.5h-1.5zM53 268h9v1.5h-9zM161 268h10.5v1.5h-10.5zM213.5 268h3v1.5h-3zM237.5 268h10.5v1.5h-10.5zM252.5 268h10.5v1.5h-10.5zM350 268h25.5v1.5h-25.5zM377 268h1.5v1.5h-1.5zM380 268h25.5v1.5h-25.5zM422 268h24v1.5h-24zM465.5 268h3v1.5h-3zM53 269.5h9v1.5h-9zM71 269.5h1.5v1.5h-1.5zM161 269.5h10.5v1.5h-10.5zM213.5 269.5h4.5v1.5h-4.5zM234.5 269.5h1.5v1.5h-1.5zM237.5 269.5h12v1.5h-12zM254 269.5h3v1.5h-3zM275 269.5h1.5v1.5h-1.5zM278 269.5h1.5v1.5h-1.5zM350 269.5h55.5v1.5h-55.5zM423.5 269.5h24v1.5h-24zM468.5 269.5h1.5v1.5h-1.5zM482 269.5h1.5v1.5h-1.5zM53 271h10.5v1.5h-10.5zM161 271h12v1.5h-12zM230 271h1.5v1.5h-1.5zM233 271h4.5v1.5h-4.5zM239 271h6v1.5h-6zM248 271h1.5v1.5h-1.5zM278 271h1.5v1.5h-1.5zM350 271h34.5v1.5h-34.5zM386 271h22.5v1.5h-22.5zM423.5 271h31.5v1.5h-31.5zM468.5 271h3v1.5h-3zM473 271h1.5v1.5h-1.5zM479 271h6v1.5h-6zM53 272.5h12v1.5h-12zM71 272.5h1.5v1.5h-1.5zM162.5 272.5h3v1.5h-3zM167 272.5h3v1.5h-3zM225.5 272.5h19.5v1.5h-19.5zM291.5 272.5h1.5v1.5h-1.5zM350 272.5h58.5v1.5h-58.5zM426.5 272.5h27v1.5h-27zM468.5 272.5h16.5v1.5h-16.5zM56 274h7.5v1.5h-7.5zM65 274h3v1.5h-3zM113 274h7.5v1.5h-7.5zM218 274h3v1.5h-3zM224 274h22.5v1.5h-22.5zM267.5 274h1.5v1.5h-1.5zM287 274h6v1.5h-6zM294.5 274h1.5v1.5h-1.5zM350 274h13.5v1.5h-13.5zM365 274h42v1.5h-42zM435.5 274h19.5v1.5h-19.5zM458 274h3v1.5h-3zM468.5 274h16.5v1.5h-16.5zM56 275.5h13.5v1.5h-13.5zM113 275.5h7.5v1.5h-7.5zM122 275.5h1.5v1.5h-1.5zM218 275.5h28.5v1.5h-28.5zM266 275.5h1.5v1.5h-1.5zM288.5 275.5h9v1.5h-9zM351.5 275.5h51v1.5h-51zM404 275.5h3v1.5h-3zM435.5 275.5h21v1.5h-21zM458 275.5h4.5v1.5h-4.5zM468.5 275.5h16.5v1.5h-16.5zM56 277h13.5v1.5h-13.5zM114.5 277h9v1.5h-9zM218 277h28.5v1.5h-28.5zM267.5 277h1.5v1.5h-1.5zM290 277h9v1.5h-9zM353 277h22.5v1.5h-22.5zM377 277h30v1.5h-30zM432.5 277h1.5v1.5h-1.5zM437 277h24v1.5h-24zM464 277h4.5v1.5h-4.5zM471.5 277h4.5v1.5h-4.5zM477.5 277h7.5v1.5h-7.5zM56 278.5h6v1.5h-6zM66.5 278.5h3v1.5h-3zM116 278.5h7.5v1.5h-7.5zM218 278.5h27v1.5h-27zM267.5 278.5h1.5v1.5h-1.5zM291.5 278.5h6v1.5h-6zM353 278.5h19.5v1.5h-19.5zM377 278.5h28.5v1.5h-28.5zM432.5 278.5h3v1.5h-3zM438.5 278.5h16.5v1.5h-16.5zM456.5 278.5h4.5v1.5h-4.5zM464 278.5h4.5v1.5h-4.5zM471.5 278.5h13.5v1.5h-13.5zM56 280h7.5v1.5h-7.5zM116 280h7.5v1.5h-7.5zM218 280h27v1.5h-27zM351.5 280h22.5v1.5h-22.5zM375.5 280h31.5v1.5h-31.5zM440 280h1.5v1.5h-1.5zM443 280h10.5v1.5h-10.5zM455 280h13.5v1.5h-13.5zM471.5 280h13.5v1.5h-13.5zM56 281.5h7.5v1.5h-7.5zM114.5 281.5h4.5v1.5h-4.5zM219.5 281.5h6v1.5h-6zM227 281.5h18v1.5h-18zM248 281.5h1.5v1.5h-1.5zM350 281.5h43.5v1.5h-43.5zM395 281.5h12v1.5h-12zM446 281.5h6v1.5h-6zM455 281.5h30v1.5h-30zM56 283h7.5v1.5h-7.5zM218 283h6v1.5h-6zM228.5 283h15v1.5h-15zM275 283h6v1.5h-6zM348.5 283h10.5v1.5h-10.5zM375.5 283h34.5v1.5h-34.5zM446 283h1.5v1.5h-1.5zM449 283h3v1.5h-3zM455 283h3v1.5h-3zM461 283h24v1.5h-24zM54.5 284.5h4.5v1.5h-4.5zM218 284.5h6v1.5h-6zM227 284.5h15v1.5h-15zM273.5 284.5h9v1.5h-9zM348.5 284.5h9v1.5h-9zM380 284.5h3v1.5h-3zM384.5 284.5h24v1.5h-24zM449 284.5h1.5v1.5h-1.5zM455 284.5h3v1.5h-3zM462.5 284.5h22.5v1.5h-22.5zM57.5 286h3v1.5h-3zM62 286h1.5v1.5h-1.5zM212 286h3v1.5h-3zM216.5 286h7.5v1.5h-7.5zM227 286h15v1.5h-15zM273.5 286h7.5v1.5h-7.5zM348.5 286h9v1.5h-9zM380 286h3v1.5h-3zM384.5 286h24v1.5h-24zM462.5 286h21v1.5h-21zM59 287.5h3v1.5h-3zM218 287.5h6v1.5h-6zM228.5 287.5h13.5v1.5h-13.5zM273.5 287.5h6v1.5h-6zM347 287.5h12v1.5h-12zM378.5 287.5h28.5v1.5h-28.5zM464 287.5h18v1.5h-18zM218 289h6v1.5h-6zM228.5 289h10.5v1.5h-10.5zM275 289h4.5v1.5h-4.5zM348.5 289h12v1.5h-12zM381.5 289h15v1.5h-15zM399.5 289h3v1.5h-3zM467 289h13.5v1.5h-13.5zM216.5 290.5h7.5v1.5h-7.5zM230 290.5h9v1.5h-9zM275 290.5h3v1.5h-3zM344 290.5h1.5v1.5h-1.5zM348.5 290.5h13.5v1.5h-13.5zM384.5 290.5h1.5v1.5h-1.5zM387.5 290.5h7.5v1.5h-7.5zM402.5 290.5h1.5v1.5h-1.5zM467 290.5h6v1.5h-6zM477.5 290.5h4.5v1.5h-4.5zM218 292h3v1.5h-3zM231.5 292h6v1.5h-6zM344 292h1.5v1.5h-1.5zM348.5 292h13.5v1.5h-13.5zM401 292h3v1.5h-3zM468.5 292h3v1.5h-3zM477.5 292h3v1.5h-3zM233 293.5h4.5v1.5h-4.5zM260 293.5h3v1.5h-3zM348.5 293.5h12v1.5h-12zM362 293.5h1.5v1.5h-1.5zM399.5 293.5h4.5v1.5h-4.5zM465.5 293.5h6v1.5h-6zM233 295h3v1.5h-3zM258.5 295h6v1.5h-6zM348.5 295h9v1.5h-9zM360.5 295h4.5v1.5h-4.5zM399.5 295h3v1.5h-3zM257 296.5h7.5v1.5h-7.5zM353 296.5h3v1.5h-3zM359 296.5h7.5v1.5h-7.5zM399.5 296.5h4.5v1.5h-4.5zM257 298h9v1.5h-9zM357.5 298h9v1.5h-9zM399.5 298h4.5v1.5h-4.5zM257 299.5h4.5v1.5h-4.5zM263 299.5h1.5v1.5h-1.5zM356 299.5h10.5v1.5h-10.5zM357.5 301h9v1.5h-9zM258.5 302.5h1.5v1.5h-1.5zM357.5 302.5h9v1.5h-9zM257 304h4.5v1.5h-4.5zM359 304h6v1.5h-6zM257 305.5h4.5v1.5h-4.5zM359 305.5h6v1.5h-6zM257 307h3v1.5h-3zM242 308.5h1.5v1.5h-1.5zM248 310h1.5v1.5h-1.5zM246.5 311.5h4.5v1.5h-4.5zM248 313h1.5v1.5h-1.5zM311 329.5h1.5v1.5h-1.5zM317 329.5h3v1.5h-3zM311 331h9v1.5h-9zM312.5 332.5h6v1.5h-6zM312.5 334h4.5v1.5h-4.5zM314 335.5h1.5v1.5h-1.5z"/>
<path fill="#ff0000" d="M377 101.5h3v1.5h-3zM377 103h9v1.5h-9zM377 104.5h7.5v1.5h-7.5zM378.5 106h4.5v1.5h-4.5zM386 106h1.5v1.5h-1.5zM381.5 107.5h1.5v1.5h-1.5zM345.5 110.5h3v1.5h-3zM341 112h6v1.5h-6zM339.5 113.5h12v1.5h-12zM339.5 115h9v1.5h-9zM339.5 116.5h7.5v1.5h-7.5zM327.5 118h7.5v1.5h-7.5zM339.5 118h3v1.5h-3zM344 118h1.5v1.5h-1.5zM327.5 119.5h7.5v1.5h-7.5zM326 121h10.5v1.5h-10.5zM324.5 122.5h12v1.5h-12zM318.5 124h1.5v1.5h-1.5zM323 124h3v1.5h-3zM327.5 124h1.5v1.5h-1.5zM330.5 124h1.5v1.5h-1.5zM321.5 125.5h1.5v1.5h-1.5zM326 125.5h6v1.5h-6zM327.5 127h1.5v1.5h-1.5zM396.5 131.5h1.5v1.5h-1.5zM440 131.5h1.5v1.5h-1.5zM396.5 133h1.5v1.5h-1.5zM437 133h4.5v1.5h-4.5zM396.5 134.5h1.5v1.5h-1.5zM273.5 136h1.5v1.5h-1.5zM395 136h1.5v1.5h-1.5zM398 136h1.5v1.5h-1.5zM272 137.5h4.5v1.5h-4.5zM270.5 139h6v1.5h-6zM270.5 140.5h6v1.5h-6zM257 142h1.5v1.5h-1.5zM261.5 142h1.5v1.5h-1.5zM270.5 142h4.5v1.5h-4.5zM261.5 143.5h1.5v1.5h-1.5zM272 143.5h1.5v1.5h-1.5zM284 143.5h1.5v1.5h-1.5zM260 145h1.5v1.5h-1.5zM102.5 148h1.5v1.5h-1.5zM374 148h1.5v1.5h-1.5zM99.5 149.5h6v1.5h-6zM113 149.5h1.5v1.5h-1.5zM374 149.5h1.5v1.5h-1.5zM98 151h7.5v1.5h-7.5zM221 151h3v1.5h-3zM96.5 152.5h9v1.5h-9zM218 152.5h6v1.5h-6zM234.5 152.5h3v1.5h-3zM248 152.5h3v1.5h-3zM254 152.5h1.5v1.5h-1.5zM267.5 152.5h1.5v1.5h-1.5zM95 154h10.5v1.5h-10.5zM219.5 154h3v1.5h-3zM249.5 154h1.5v1.5h-1.5zM252.5 154h3v1.5h-3zM264.5 154h4.5v1.5h-4.5zM95 155.5h12v1.5h-12zM254 155.5h1.5v1.5h-1.5zM266 155.5h6v1.5h-6zM95 157h15v1.5h-15zM267.5 157h3v1.5h-3zM95 158.5h15v1.5h-15zM269 158.5h1.5v1.5h-1.5zM95 160h15v1.5h-15zM96.5 161.5h1.5v1.5h-1.5zM99.5 161.5h6v1.5h-6zM113 161.5h1.5v1.5h-1.5zM338 161.5h1.5v1.5h-1.5zM87.5 172h1.5v1.5h-1.5zM194 172h6v1.5h-6zM290 172h1.5v1.5h-1.5zM293 172h1.5v1.5h-1.5zM87.5 173.5h1.5v1.5h-1.5zM194 173.5h7.5v1.5h-7.5zM87.5 175h1.5v1.5h-1.5zM188 175h13.5v1.5h-13.5zM87.5 176.5h1.5v1.5h-1.5zM185 176.5h1.5v1.5h-1.5zM189.5 176.5h12v1.5h-12zM300.5 176.5h1.5v1.5h-1.5zM189.5 178h3v1.5h-3zM194 178h7.5v1.5h-7.5zM309.5 178h3v1.5h-3zM315.5 178h1.5v1.5h-1.5zM176 179.5h3v1.5h-3zM197 179.5h4.5v1.5h-4.5zM305 179.5h9v1.5h-9zM315.5 179.5h1.5v1.5h-1.5zM177.5 181h1.5v1.5h-1.5zM297.5 181h1.5v1.5h-1.5zM302 181h12v1.5h-12zM177.5 182.5h3v1.5h-3zM195.5 182.5h1.5v1.5h-1.5zM297.5 182.5h1.5v1.5h-1.5zM305 182.5h10.5v1.5h-10.5zM177.5 184h3v1.5h-3zM191 184h3v1.5h-3zM309.5 184h3v1.5h-3zM179 185.5h1.5v1.5h-1.5zM188 185.5h4.5v1.5h-4.5zM177.5 187h3v1.5h-3zM188 187h4.5v1.5h-4.5zM290 190h4.5v1.5h-4.5zM287 191.5h12v1.5h-12zM287 193h13.5v1.5h-13.5zM287 194.5h13.5v1.5h-13.5zM288.5 196h9v1.5h-9zM299 196h1.5v1.5h-1.5zM287 197.5h10.5v1.5h-10.5zM288.5 199h6v1.5h-6zM297.5 199h1.5v1.5h-1.5zM192.5 203.5h3v1.5h-3zM194 205h1.5v1.5h-1.5zM83 206.5h6v1.5h-6zM204.5 206.5h3v1.5h-3zM83 208h1.5v1.5h-1.5zM86 208h3v1.5h-3zM192.5 208h3v1.5h-3zM84.5 209.5h3v1.5h-3zM194 209.5h4.5v1.5h-4.5zM93.5 211h1.5v1.5h-1.5zM110 211h4.5v1.5h-4.5zM195.5 211h1.5v1.5h-1.5zM204.5 211h1.5v1.5h-1.5zM92 212.5h4.5v1.5h-4.5zM99.5 212.5h1.5v1.5h-1.5zM108.5 212.5h9v1.5h-9zM204.5 212.5h4.5v1.5h-4.5zM89 214h13.5v1.5h-13.5zM110 214h3v1.5h-3zM116 214h3v1.5h-3zM206 214h1.5v1.5h-1.5zM89 215.5h15v1.5h-15zM116 215.5h3v1.5h-3zM273.5 215.5h1.5v1.5h-1.5zM276.5 215.5h3v1.5h-3zM51.5 217h1.5v1.5h-1.5zM89 217h15v1.5h-15zM116 217h1.5v1.5h-1.5zM275 217h7.5v1.5h-7.5zM51.5 218.5h1.5v1.5h-1.5zM54.5 218.5h3v1.5h-3zM86 218.5h3v1.5h-3zM90.5 218.5h6v1.5h-6zM98 218.5h3v1.5h-3zM275 218.5h10.5v1.5h-10.5zM54.5 220h3v1.5h-3zM90.5 220h1.5v1.5h-1.5zM93.5 220h1.5v1.5h-1.5zM99.5 220h1.5v1.5h-1.5zM273.5 220h10.5v1.5h-10.5zM293 220h3v1.5h-3zM312.5 220h1.5v1.5h-1.5zM182 221.5h7.5v1.5h-7.5zM273.5 221.5h9v1.5h-9zM284 221.5h1.5v1.5h-1.5zM290 221.5h6v1.5h-6zM317 221.5h1.5v1.5h-1.5zM182 223h7.5v1.5h-7.5zM273.5 223h7.5v1.5h-7.5zM291.5 223h4.5v1.5h-4.5zM51.5 224.5h1.5v1.5h-1.5zM185 224.5h4.5v1.5h-4.5zM278 224.5h3v1.5h-3zM291.5 224.5h1.5v1.5h-1.5zM188 226h1.5v1.5h-1.5zM321.5 226h7.5v1.5h-7.5zM53 227.5h1.5v1.5h-1.5zM53 229h1.5v1.5h-1.5zM312.5 230.5h1.5v1.5h-1.5zM312.5 232h3v1.5h-3zM312.5 233.5h3v1.5h-3zM240.5 235h7.5v1.5h-7.5zM291.5 235h1.5v1.5h-1.5zM309.5 235h4.5v1.5h-4.5zM236 236.5h13.5v1.5h-13.5zM290 236.5h3v1.5h-3zM309.5 236.5h6v1.5h-6zM233 238h21v1.5h-21zM290 238h4.5v1.5h-4.5zM309.5 238h6v1.5h-6zM231.5 239.5h21v1.5h-21zM254 239.5h3v1.5h-3zM261.5 239.5h1.5v1.5h-1.5zM290 239.5h6v1.5h-6zM309.5 239.5h4.5v1.5h-4.5zM233 241h30v1.5h-30zM290 241h4.5v1.5h-4.5zM309.5 241h4.5v1.5h-4.5zM234.5 242.5h30v1.5h-30zM291.5 242.5h1.5v1.5h-1.5zM309.5 242.5h4.5v1.5h-4.5zM233 244h33v1.5h-33zM311 244h3v1.5h-3zM234.5 245.5h1.5v1.5h-1.5zM245 245.5h21v1.5h-21zM294.5 245.5h1.5v1.5h-1.5zM299 245.5h1.5v1.5h-1.5zM396.5 245.5h1.5v1.5h-1.5zM417.5 245.5h1.5v1.5h-1.5zM429.5 245.5h1.5v1.5h-1.5zM203 247h1.5v1.5h-1.5zM243.5 247h18v1.5h-18zM263 247h1.5v1.5h-1.5zM294.5 247h6v1.5h-6zM302 247h1.5v1.5h-1.5zM390.5 247h1.5v1.5h-1.5zM395 247h3v1.5h-3zM422 247h1.5v1.5h-1.5zM429.5 247h4.5v1.5h-4.5zM198.5 248.5h7.5v1.5h-7.5zM209 248.5h1.5v1.5h-1.5zM245 248.5h3v1.5h-3zM249.5 248.5h10.5v1.5h-10.5zM294.5 248.5h9v1.5h-9zM387.5 248.5h12v1.5h-12zM420.5 248.5h4.5v1.5h-4.5zM428 248.5h6v1.5h-6zM197 250h13.5v1.5h-13.5zM243.5 250h16.5v1.5h-16.5zM291.5 250h13.5v1.5h-13.5zM386 250h13.5v1.5h-13.5zM417.5 250h7.5v1.5h-7.5zM198.5 251.5h10.5v1.5h-10.5zM246.5 251.5h1.5v1.5h-1.5zM249.5 251.5h9v1.5h-9zM291.5 251.5h15v1.5h-15zM386 251.5h12v1.5h-12zM414.5 251.5h12v1.5h-12zM197 253h12v1.5h-12zM231.5 253h4.5v1.5h-4.5zM251 253h4.5v1.5h-4.5zM291.5 253h15v1.5h-15zM386 253h15v1.5h-15zM413 253h1.5v1.5h-1.5zM416 253h12v1.5h-12zM444.5 253h1.5v1.5h-1.5zM198.5 254.5h10.5v1.5h-10.5zM231.5 254.5h4.5v1.5h-4.5zM252.5 254.5h1.5v1.5h-1.5zM291.5 254.5h15v1.5h-15zM381.5 254.5h9v1.5h-9zM392 254.5h1.5v1.5h-1.5zM395 254.5h1.5v1.5h-1.5zM399.5 254.5h1.5v1.5h-1.5zM413 254.5h13.5v1.5h-13.5zM443 254.5h3v1.5h-3zM200 256h9v1.5h-9zM230 256h7.5v1.5h-7.5zM261.5 256h4.5v1.5h-4.5zM296 256h9v1.5h-9zM380 256h12v1.5h-12zM414.5 256h12v1.5h-12zM443 256h3v1.5h-3zM198.5 257.5h1.5v1.5h-1.5zM201.5 257.5h4.5v1.5h-4.5zM233 257.5h6v1.5h-6zM260 257.5h9v1.5h-9zM294.5 257.5h9v1.5h-9zM378.5 257.5h1.5v1.5h-1.5zM381.5 257.5h10.5v1.5h-10.5zM414.5 257.5h12v1.5h-12zM444.5 257.5h3v1.5h-3zM233 259h6v1.5h-6zM261.5 259h6v1.5h-6zM296 259h7.5v1.5h-7.5zM380 259h13.5v1.5h-13.5zM414.5 259h12v1.5h-12zM444.5 259h3v1.5h-3zM231.5 260.5h9v1.5h-9zM267.5 260.5h1.5v1.5h-1.5zM375.5 260.5h18v1.5h-18zM414.5 260.5h13.5v1.5h-13.5zM230 262h10.5v1.5h-10.5zM375.5 262h18v1.5h-18zM416 262h12v1.5h-12zM228.5 263.5h1.5v1.5h-1.5zM231.5 263.5h7.5v1.5h-7.5zM251 263.5h1.5v1.5h-1.5zM254 263.5h1.5v1.5h-1.5zM377 263.5h18v1.5h-18zM422 263.5h1.5v1.5h-1.5zM432.5 263.5h3v1.5h-3zM440 263.5h1.5v1.5h-1.5zM443 263.5h1.5v1.5h-1.5zM230 265h7.5v1.5h-7.5zM249.5 265h6v1.5h-6zM378.5 265h18v1.5h-18zM432.5 265h3v1.5h-3zM437 265h6v1.5h-6zM230 266.5h7.5v1.5h-7.5zM251 266.5h9v1.5h-9zM378.5 266.5h16.5v1.5h-16.5zM432.5 266.5h12v1.5h-12zM230 268h3v1.5h-3zM252.5 268h9v1.5h-9zM368 268h1.5v1.5h-1.5zM378.5 268h16.5v1.5h-16.5zM431 268h13.5v1.5h-13.5zM254 269.5h6v1.5h-6zM368 269.5h3v1.5h-3zM377 269.5h16.5v1.5h-16.5zM431 269.5h12v1.5h-12zM366.5 271h7.5v1.5h-7.5zM375.5 271h18v1.5h-18zM432.5 271h6v1.5h-6zM440 271h3v1.5h-3zM366.5 272.5h7.5v1.5h-7.5zM375.5 272.5h18v1.5h-18zM435.5 272.5h3v1.5h-3zM368 274h4.5v1.5h-4.5zM377 274h1.5v1.5h-1.5zM380 274h16.5v1.5h-16.5zM441.5 274h1.5v1.5h-1.5zM366.5 275.5h4.5v1.5h-4.5zM380 275.5h18v1.5h-18zM441.5 275.5h1.5v1.5h-1.5zM368 277h4.5v1.5h-4.5zM380 277h19.5v1.5h-19.5zM371 278.5h1.5v1.5h-1.5zM380 278.5h18v1.5h-18zM381.5 280h9v1.5h-9zM399.5 280h1.5v1.5h-1.5zM380 281.5h10.5v1.5h-10.5zM381.5 283h1.5v1.5h-1.5z"/>
<path fill="#ffa500" d="M341 113.5h7.5v1.5h-7.5zM339.5 115h9v1.5h-9zM341 116.5h4.5v1.5h-4.5zM329 118h4.5v1.5h-4.5zM344 118h1.5v1.5h-1.5zM329 119.5h6v1.5h-6zM329 121h6v1.5h-6zM330.5 122.5h3v1.5h-3zM335 122.5h1.5v1.5h-1.5zM101 149.5h1.5v1.5h-1.5zM99.5 151h6v1.5h-6zM96.5 152.5h9v1.5h-9zM96.5 154h9v1.5h-9zM95 155.5h10.5v1.5h-10.5zM95 157h10.5v1.5h-10.5zM96.5 158.5h7.5v1.5h-7.5zM105.5 158.5h1.5v1.5h-1.5zM98 160h3v1.5h-3zM104 160h1.5v1.5h-1.5zM101 161.5h1.5v1.5h-1.5zM195.5 172h1.5v1.5h-1.5zM194 173.5h6v1.5h-6zM191 175h10.5v1.5h-10.5zM189.5 176.5h12v1.5h-12zM195.5 178h4.5v1.5h-4.5zM197 179.5h3v1.5h-3zM306.5 179.5h7.5v1.5h-7.5zM297.5 181h1.5v1.5h-1.5zM302 181h12v1.5h-12zM306.5 182.5h1.5v1.5h-1.5zM311 182.5h1.5v1.5h-1.5zM314 182.5h1.5v1.5h-1.5zM287 193h10.5v1.5h-10.5zM288.5 194.5h9v1.5h-9zM288.5 196h9v1.5h-9zM288.5 197.5h9v1.5h-9zM86 206.5h1.5v1.5h-1.5zM86 208h3v1.5h-3zM84.5 209.5h3v1.5h-3zM93.5 212.5h1.5v1.5h-1.5zM89 214h12v1.5h-12zM89 215.5h15v1.5h-15zM92 217h12v1.5h-12zM275 217h6v1.5h-6zM90.5 218.5h4.5v1.5h-4.5zM275 218.5h7.5v1.5h-7.5zM284 218.5h1.5v1.5h-1.5zM275 220h9v1.5h-9zM275 221.5h6v1.5h-6zM275 223h6v1.5h-6zM279.5 224.5h1.5v1.5h-1.5zM242 235h3v1.5h-3zM239 236.5h10.5v1.5h-10.5zM234.5 238h13.5v1.5h-13.5zM251 238h1.5v1.5h-1.5zM234.5 239.5h18v1.5h-18zM234.5 241h16.5v1.5h-16.5zM252.5 241h6v1.5h-6zM236 242.5h25.5v1.5h-25.5zM234.5 244h3v1.5h-3zM240.5 244h1.5v1.5h-1.5zM243.5 244h21v1.5h-21zM245 245.5h19.5v1.5h-19.5zM245 247h16.5v1.5h-16.5zM294.5 247h1.5v1.5h-1.5zM198.5 248.5h1.5v1.5h-1.5zM203 248.5h1.5v1.5h-1.5zM246.5 248.5h1.5v1.5h-1.5zM249.5 248.5h9v1.5h-9zM294.5 248.5h4.5v1.5h-4.5zM389 248.5h7.5v1.5h-7.5zM422 248.5h1.5v1.5h-1.5zM200 250h1.5v1.5h-1.5zM203 250h4.5v1.5h-4.5zM251 250h7.5v1.5h-7.5zM293 250h12v1.5h-12zM390.5 250h9v1.5h-9zM417.5 250h7.5v1.5h-7.5zM200 251.5h9v1.5h-9zM252.5 251.5h1.5v1.5h-1.5zM291.5 251.5h13.5v1.5h-13.5zM389 251.5h9v1.5h-9zM416 251.5h9v1.5h-9zM200 253h7.5v1.5h-7.5zM291.5 253h1.5v1.5h-1.5zM294.5 253h10.5v1.5h-10.5zM386 253h6v1.5h-6zM393.5 253h3v1.5h-3zM398 253h3v1.5h-3zM416 253h10.5v1.5h-10.5zM200 254.5h9v1.5h-9zM296 254.5h9v1.5h-9zM383 254.5h6v1.5h-6zM416 254.5h10.5v1.5h-10.5zM200 256h6v1.5h-6zM207.5 256h1.5v1.5h-1.5zM264.5 256h1.5v1.5h-1.5zM297.5 256h4.5v1.5h-4.5zM380 256h9v1.5h-9zM416 256h10.5v1.5h-10.5zM261.5 257.5h6v1.5h-6zM296 257.5h6v1.5h-6zM378.5 257.5h1.5v1.5h-1.5zM381.5 257.5h9v1.5h-9zM416 257.5h9v1.5h-9zM261.5 259h6v1.5h-6zM297.5 259h3v1.5h-3zM380 259h10.5v1.5h-10.5zM414.5 259h10.5v1.5h-10.5zM380 260.5h12v1.5h-12zM416 260.5h9v1.5h-9zM426.5 260.5h1.5v1.5h-1.5zM377 262h15v1.5h-15zM417.5 262h9v1.5h-9zM378.5 263.5h13.5v1.5h-13.5zM251 265h3v1.5h-3zM380 265h9v1.5h-9zM432.5 265h3v1.5h-3zM440 265h3v1.5h-3zM252.5 266.5h7.5v1.5h-7.5zM380 266.5h10.5v1.5h-10.5zM432.5 266.5h10.5v1.5h-10.5zM254 268h6v1.5h-6zM381.5 268h7.5v1.5h-7.5zM390.5 268h1.5v1.5h-1.5zM434 268h7.5v1.5h-7.5zM254 269.5h4.5v1.5h-4.5zM381.5 269.5h7.5v1.5h-7.5zM432.5 269.5h10.5v1.5h-10.5zM383 271h4.5v1.5h-4.5zM432.5 271h6v1.5h-6zM440 271h1.5v1.5h-1.5zM383 272.5h6v1.5h-6zM383 274h4.5v1.5h-4.5zM392 274h4.5v1.5h-4.5zM383 275.5h4.5v1.5h-4.5zM392 275.5h4.5v1.5h-4.5zM380 277h7.5v1.5h-7.5zM390.5 277h6v1.5h-6zM398 277h1.5v1.5h-1.5zM381.5 278.5h4.5v1.5h-4.5zM390.5 278.5h6v1.5h-6zM381.5 280h6v1.5h-6zM380 281.5h7.5v1.5h-7.5z"/>
<path fill="#ffc0cb" d="M99.5 155.5h1.5v1.5h-1.5zM243.5 239.5h1.5v1.5h-1.5zM242 241h1.5v1.5h-1.5zM254 245.5h3v1.5h-3zM299 251.5h3v1.5h-3zM203 253h1.5v1.5h-1.5zM384.5 260.5h1.5v1.5h-1.5z"/>
<path fill="#00f090" d="M245 164.5h6v1.5h-6zM237.5 166h4.5v1.5h-4.5zM243.5 166h1.5v1.5h-1.5zM246.5 166h4.5v1.5h-4.5zM243.5 167.5h7.5v1.5h-7.5zM245 169h1.5v1.5h-1.5zM248 173.5h1.5v1.5h-1.5zM243.5 175h1.5v1.5h-1.5zM246.5 175h3v1.5h-3zM245 176.5h7.5v1.5h-7.5zM246.5 178h3v1.5h-3zM212 179.5h1.5v1.5h-1.5zM219.5 179.5h7.5v1.5h-7.5zM245 179.5h6v1.5h-6zM254 179.5h6v1.5h-6zM272 179.5h1.5v1.5h-1.5zM215 181h1.5v1.5h-1.5zM219.5 181h4.5v1.5h-4.5zM225.5 181h4.5v1.5h-4.5zM245 181h1.5v1.5h-1.5zM258.5 181h4.5v1.5h-4.5zM269 181h4.5v1.5h-4.5zM216.5 182.5h13.5v1.5h-13.5zM258.5 182.5h6v1.5h-6zM270.5 182.5h4.5v1.5h-4.5zM278 182.5h6v1.5h-6zM215 184h3v1.5h-3zM219.5 184h6v1.5h-6zM227 184h4.5v1.5h-4.5zM258.5 184h3v1.5h-3zM267.5 184h1.5v1.5h-1.5zM270.5 184h6v1.5h-6zM278 184h4.5v1.5h-4.5zM213.5 185.5h1.5v1.5h-1.5zM216.5 185.5h1.5v1.5h-1.5zM224 185.5h1.5v1.5h-1.5zM227 185.5h3v1.5h-3zM258.5 185.5h1.5v1.5h-1.5zM267.5 185.5h1.5v1.5h-1.5zM272 185.5h3v1.5h-3zM218 187h1.5v1.5h-1.5zM227 187h4.5v1.5h-4.5zM273.5 187h6v1.5h-6zM219.5 188.5h1.5v1.5h-1.5zM222.5 188.5h1.5v1.5h-1.5zM273.5 188.5h6v1.5h-6zM219.5 190h6v1.5h-6zM272 190h7.5v1.5h-7.5zM213.5 191.5h4.5v1.5h-4.5zM219.5 191.5h4.5v1.5h-4.5zM270.5 191.5h10.5v1.5h-10.5zM215 193h9v1.5h-9zM264.5 193h3v1.5h-3zM269 193h9v1.5h-9zM279.5 193h1.5v1.5h-1.5zM221 194.5h3v1.5h-3zM270.5 194.5h9v1.5h-9zM221 196h4.5v1.5h-4.5zM264.5 196h1.5v1.5h-1.5zM270.5 196h9v1.5h-9zM213.5 197.5h3v1.5h-3zM224 197.5h3v1.5h-3zM272 197.5h7.5v1.5h-7.5zM213.5 199h1.5v1.5h-1.5zM224 199h3v1.5h-3zM258.5 199h6v1.5h-6zM267.5 199h1.5v1.5h-1.5zM273.5 199h6v1.5h-6zM222.5 200.5h3v1.5h-3zM258.5 200.5h10.5v1.5h-10.5zM272 200.5h3v1.5h-3zM278 200.5h1.5v1.5h-1.5zM221 202h1.5v1.5h-1.5zM224 202h1.5v1.5h-1.5zM251 202h6v1.5h-6zM260 202h7.5v1.5h-7.5zM254 203.5h13.5v1.5h-13.5zM255.5 205h13.5v1.5h-13.5zM255.5 206.5h13.5v1.5h-13.5zM252.5 208h19.5v1.5h-19.5zM230 209.5h3v1.5h-3zM255.5 209.5h13.5v1.5h-13.5zM228.5 211h1.5v1.5h-1.5zM255.5 211h16.5v1.5h-16.5zM225.5 212.5h1.5v1.5h-1.5zM231.5 212.5h1.5v1.5h-1.5zM234.5 212.5h1.5v1.5h-1.5zM255.5 212.5h21v1.5h-21zM225.5 214h7.5v1.5h-7.5zM258.5 214h19.5v1.5h-19.5zM225.5 215.5h9v1.5h-9zM254 215.5h3v1.5h-3zM258.5 215.5h6v1.5h-6zM266 215.5h13.5v1.5h-13.5zM225.5 217h6v1.5h-6zM257 217h3v1.5h-3zM263 217h16.5v1.5h-16.5zM219.5 218.5h4.5v1.5h-4.5zM225.5 218.5h1.5v1.5h-1.5zM228.5 218.5h4.5v1.5h-4.5zM257 218.5h1.5v1.5h-1.5zM264.5 218.5h6v1.5h-6zM272 218.5h1.5v1.5h-1.5zM275 218.5h3v1.5h-3zM279.5 218.5h3v1.5h-3zM218 220h7.5v1.5h-7.5zM227 220h4.5v1.5h-4.5zM263 220h6v1.5h-6zM275 220h3v1.5h-3zM216.5 221.5h15v1.5h-15zM264.5 221.5h1.5v1.5h-1.5zM218 223h12v1.5h-12zM237.5 223h1.5v1.5h-1.5zM216.5 224.5h1.5v1.5h-1.5zM219.5 224.5h6v1.5h-6zM228.5 224.5h1.5v1.5h-1.5zM228.5 226h3v1.5h-3zM251 226h1.5v1.5h-1.5zM227 227.5h7.5v1.5h-7.5zM236 227.5h1.5v1.5h-1.5zM240.5 227.5h1.5v1.5h-1.5zM227 229h4.5v1.5h-4.5zM233 229h1.5v1.5h-1.5zM236 229h7.5v1.5h-7.5zM231.5 230.5h10.5v1.5h-10.5zM243.5 230.5h3v1.5h-3zM234.5 232h1.5v1.5h-1.5zM237.5 232h6v1.5h-6zM236 233.5h3v1.5h-3zM242 235h1.5v1.5h-1.5z"/>
<path fill="#f5f07a" d="M342.5 113.5h1.5v1.5h-1.5zM345.5 113.5h1.5v1.5h-1.5zM344 115h3v1.5h-3zM344 116.5h1.5v1.5h-1.5zM329 119.5h4.5v1.5h-4.5zM252.5 202h1.5v1.5h-1.5zM254 203.5h3v1.5h-3zM254 205h7.5v1.5h-7.5zM252.5 206.5h9v1.5h-9zM252.5 208h10.5v1.5h-10.5zM252.5 209.5h10.5v1.5h-10.5zM254 211h6v1.5h-6zM255.5 212.5h1.5v1.5h-1.5z"/>
<path fill="#000" d="M266.9 229.1h1.5v1.5h-1.5zM239.9 172.1h1.5v1.5h-1.5zM266.4 202.4h1.5v1.5h-1.5zM248.3 190.5h1.5v1.5h-1.5zM253.2 195.1h1.5v1.5h-1.5zM266.8 227.6h1.5v1.5h-1.5zM240.3 179.1h1.5v1.5h-1.5zM259.1 229h1.5v1.5h-1.5zM258.2 208.9h1.5v1.5h-1.5zM247.3 187.4h1.5v1.5h-1.5zM253.5 191.5h1.5v1.5h-1.5zM257.8 204.4h1.5v1.5h-1.5zM248.6 191.3h1.5v1.5h-1.5zM269.2 230.7h1.5v1.5h-1.5zM254.1 232.9h1.5v1.5h-1.5zM260.8 209h1.5v1.5h-1.5zM262.5 210.1h1.5v1.5h-1.5zM261.2 207.6h1.5v1.5h-1.5zM253.6 233h1.5v1.5h-1.5zM243.8 226.9h1.5v1.5h-1.5zM257.1 193.5h1.5v1.5h-1.5zM262.9 233.9h1.5v1.5h-1.5zM254 210.6h1.5v1.5h-1.5zM254.1 198.6h1.5v1.5h-1.5zM265 225.6h1.5v1.5h-1.5zM259.1 214.2h1.5v1.5h-1.5zM264.5 227.9h1.5v1.5h-1.5zM267 229h1.5v1.5h-1.5zM250.9 229.6h1.5v1.5h-1.5zM266.6 215.3h1.5v1.5h-1.5zM268.4 225.6h1.5v1.5h-1.5zM263.9 210.5h1.5v1.5h-1.5zM241.5 183.9h1.5v1.5h-1.5zM248 187.6h1.5v1.5h-1.5zM257.5 231.7h1.5v1.5h-1.5zM273.1 225.4h1.5v1.5h-1.5zM264.6 208.4h1.5v1.5h-1.5zM259.2 212.6h1.5v1.5h-1.5zM254.5 195.9h1.5v1.5h-1.5zM268.3 223.5h1.5v1.5h-1.5zM259 194.8h1.5v1.5h-1.5zM244.2 186.9h1.5v1.5h-1.5zM267.9 230.3h1.5v1.5h-1.5zM265.1 214.9h1.5v1.5h-1.5zM265.4 227.9h1.5v1.5h-1.5zM261.7 215.9h1.5v1.5h-1.5zM254.5 197.7h1.5v1.5h-1.5zM259.1 222.6h1.5v1.5h-1.5zM269 226.8h1.5v1.5h-1.5zM260 211h1.5v1.5h-1.5zM245.5 180.8h1.5v1.5h-1.5zM262.3 237.2h1.5v1.5h-1.5zM259.9 208.6h1.5v1.5h-1.5zM244.5 182.7h1.5v1.5h-1.5zM265.7 229.5h1.5v1.5h-1.5zM264.5 221.6h1.5v1.5h-1.5zM255.4 201.4h1.5v1.5h-1.5zM260.2 232.2h1.5v1.5h-1.5zM244.4 175.9h1.5v1.5h-1.5zM261.4 213.7h1.5v1.5h-1.5zM259.5 203.5h1.5v1.5h-1.5zM247.7 189.8h1.5v1.5h-1.5zM254.4 194.6h1.5v1.5h-1.5zM242.5 190.9h1.5v1.5h-1.5zM264.7 217.3h1.5v1.5h-1.5zM260.4 204.5h1.5v1.5h-1.5zM245 187.1h1.5v1.5h-1.5zM264 215.2h1.5v1.5h-1.5zM264 226.1h1.5v1.5h-1.5zM258.9 213.5h1.5v1.5h-1.5zM259.9 231h1.5v1.5h-1.5zM266.1 225h1.5v1.5h-1.5zM257.4 237.1h1.5v1.5h-1.5zM254.2 196.3h1.5v1.5h-1.5zM265.7 208.5h1.5v1.5h-1.5zM248.5 193.2h1.5v1.5h-1.5zM261.2 234.8h1.5v1.5h-1.5zM266.2 232.5h1.5v1.5h-1.5zM248.3 191.4h1.5v1.5h-1.5zM255.8 233.3h1.5v1.5h-1.5zM242.8 181.9h1.5v1.5h-1.5zM245.9 229.6h1.5v1.5h-1.5zM249.7 187.8h1.5v1.5h-1.5zM251.3 190.4h1.5v1.5h-1.5zM244.7 194.4h1.5v1.5h-1.5zM265 212.2h1.5v1.5h-1.5zM258.2 228.9h1.5v1.5h-1.5zM249.9 190.1h1.5v1.5h-1.5zM248.2 186.1h1.5v1.5h-1.5zM246.6 180.1h1.5v1.5h-1.5zM252.5 231.5h1.5v1.5h-1.5zM260.3 204.1h1.5v1.5h-1.5zM244 182.8h1.5v1.5h-1.5zM239.9 175.9h1.5v1.5h-1.5zM266.3 231.7h1.5v1.5h-1.5zM247.7 194.7h1.5v1.5h-1.5zM258.7 228.8h1.5v1.5h-1.5zM258 199.3h1.5v1.5h-1.5zM264.1 232.3h1.5v1.5h-1.5zM253 200.2h1.5v1.5h-1.5zM244.1 185.7h1.5v1.5h-1.5zM263.7 213.1h1.5v1.5h-1.5zM263.8 226h1.5v1.5h-1.5zM261 208.6h1.5v1.5h-1.5zM246.8 183.1h1.5v1.5h-1.5zM270.5 228.7h1.5v1.5h-1.5zM254.3 197.1h1.5v1.5h-1.5zM242.3 177.3h1.5v1.5h-1.5zM271.6 224.6h1.5v1.5h-1.5zM254.5 200.7h1.5v1.5h-1.5z"/>
<path d="M78.5 102.7h10M83.5 97.7v10M78.5 184h10M83.5 179v10M78.5 265.3h10M83.5 260.3v10M78.5 346.6h10M83.5 341.6v10M158.5 102.7h10M163.5 97.7v10M158.5 184h10M163.5 179v10M158.5 265.3h10M163.5 260.3v10M158.5 346.6h10M163.5 341.6v10M238.5 102.7h10M243.5 97.7v10M238.5 184h10M243.5 179v10M238.5 265.3h10M243.5 260.3v10M238.5 346.6h10M243.5 341.6v10M318.5 102.7h10M323.5 97.7v10M318.5 184h10M323.5 179v10M318.5 265.3h10M323.5 260.3v10M318.5 346.6h10M323.5 341.6v10M398.5 102.7h10M403.5 97.7v10M398.5 184h10M403.5 179v10M398.5 265.3h10M403.5 260.3v10M398.5 346.6h10M403.5 341.6v10M478.5 102.7h10M483.5 97.7v10M478.5 184h10M483.5 179v10M478.5 265.3h10M483.5 260.3v10M478.5 346.6h10M483.5 341.6v10" stroke="#f0e68c" stroke-width="1" fill="none"/>
<g transform="translate(237.2,187.5)" stroke="#ff00ff" fill="none" stroke-width="1.2"><path d="M-1.5 -10.5h3M-2.2 -9h4.4v7.5h-4.4zM0 -9v7.5M-4 -1h8M-7 2.5l1.4-1.6 1.4 1.6 1.4-1.6 1.4 1.6 1.4-1.6 1.4 1.6 1.4-1.6 1.4 1.6 1.4-1.6 1.4 1.6"/></g>
<g transform="translate(243.3,221)" stroke="#ff00ff" fill="none" stroke-width="1.2"><path d="M-1.5 -10.5h3M-2.2 -9h4.4v7.5h-4.4zM0 -9v7.5M-4 -1h8M-7 2.5l1.4-1.6 1.4 1.6 1.4-1.6 1.4 1.6 1.4-1.6 1.4 1.6 1.4-1.6 1.4 1.6 1.4-1.6 1.4 1.6"/></g>
<g transform="translate(243.3,266.5)" stroke="#ff00ff" fill="none" stroke-width="1.2"><path d="M-1.5 -10.5h3M-2.2 -9h4.4v7.5h-4.4zM0 -9v7.5M-4 -1h8M-7 2.5l1.4-1.6 1.4 1.6 1.4-1.6 1.4 1.6 1.4-1.6 1.4 1.6 1.4-1.6 1.4 1.6 1.4-1.6 1.4 1.6"/></g>
<g transform="translate(243.3,311.5)" stroke="#ff00ff" fill="none" stroke-width="1.2"><path d="M-1.5 -10.5h3M-2.2 -9h4.4v7.5h-4.4zM0 -9v7.5M-4 -1h8M-7 2.5l1.4-1.6 1.4 1.6 1.4-1.6 1.4 1.6 1.4-1.6 1.4 1.6 1.4-1.6 1.4 1.6 1.4-1.6 1.4 1.6"/></g>
<g transform="translate(243.3,350.5)" stroke="#ff00ff" fill="none" stroke-width="1.2"><path d="M-1.5 -10.5h3M-2.2 -9h4.4v7.5h-4.4zM0 -9v7.5M-4 -1h8M-7 2.5l1.4-1.6 1.4 1.6 1.4-1.6 1.4 1.6 1.4-1.6 1.4 1.6 1.4-1.6 1.4 1.6 1.4-1.6 1.4 1.6"/></g>
<g transform="translate(484,219)" stroke="#ff00ff" fill="none" stroke-width="1.2"><path d="M-1.5 -10.5h3M-2.2 -9h4.4v7.5h-4.4zM0 -9v7.5M-4 -1h8M-7 2.5l1.4-1.6 1.4 1.6 1.4-1.6 1.4 1.6 1.4-1.6 1.4 1.6 1.4-1.6 1.4 1.6 1.4-1.6 1.4 1.6"/></g>
<g transform="translate(484,268)" stroke="#ff00ff" fill="none" stroke-width="1.2"><path d="M-1.5 -10.5h3M-2.2 -9h4.4v7.5h-4.4zM0 -9v7.5M-4 -1h8M-7 2.5l1.4-1.6 1.4 1.6 1.4-1.6 1.4 1.6 1.4-1.6 1.4 1.6 1.4-1.6 1.4 1.6 1.4-1.6 1.4 1.6"/></g>
<g transform="translate(484,315)" stroke="#ff00ff" fill="none" stroke-width="1.2"><path d="M-1.5 -10.5h3M-2.2 -9h4.4v7.5h-4.4zM0 -9v7.5M-4 -1h8M-7 2.5l1.4-1.6 1.4 1.6 1.4-1.6 1.4 1.6 1.4-1.6 1.4 1.6 1.4-1.6 1.4 1.6 1.4-1.6 1.4 1.6"/></g>
<g transform="translate(484,349.5)" stroke="#ff00ff" fill="none" stroke-width="1.2"><path d="M-1.5 -10.5h3M-2.2 -9h4.4v7.5h-4.4zM0 -9v7.5M-4 -1h8M-7 2.5l1.4-1.6 1.4 1.6 1.4-1.6 1.4 1.6 1.4-1.6 1.4 1.6 1.4-1.6 1.4 1.6 1.4-1.6 1.4 1.6"/></g>
<text transform="translate(11,27) scale(0.9565,1)" font-size="25" fill="#ffff00" font-family="Liberation Sans, sans-serif" xml:space="preserve">24<tspan dx="2">-</tspan><tspan dx="2">a</tspan>ug<tspan dx="2">-</tspan><tspan dx="2">1</tspan>997,04:05:00</text>
<text x="268.5" y="27" font-size="24.5" fill="#fff" font-family="Liberation Sans, sans-serif" textLength="280.5" lengthAdjust="spacingAndGlyphs" xml:space="preserve">ir plot.  Rhb_lowprf maxdz</text>
<text x="11" y="57" font-size="24.5" fill="#fff" font-family="Liberation Sans, sans-serif" textLength="145.5" lengthAdjust="spacingAndGlyphs" xml:space="preserve">filled contour.</text>
<text x="24.5" y="101.3" font-size="18" fill="#f0e68c" font-family="Liberation Sans, sans-serif" text-anchor="middle" xml:space="preserve">15</text>
<text x="24.5" y="182.6" font-size="18" fill="#f0e68c" font-family="Liberation Sans, sans-serif" text-anchor="middle" xml:space="preserve">10</text>
<text x="29" y="263.9" font-size="18" fill="#f0e68c" font-family="Liberation Sans, sans-serif" text-anchor="middle" xml:space="preserve">5</text>
<text x="29" y="345.2" font-size="18" fill="#f0e68c" font-family="Liberation Sans, sans-serif" text-anchor="middle" xml:space="preserve">0</text>
<text x="63.7" y="372.6" font-size="18" fill="#f0e68c" font-family="Liberation Sans, sans-serif" textLength="38.8" lengthAdjust="spacingAndGlyphs" xml:space="preserve">-135</text>
<text x="143.7" y="372.6" font-size="18" fill="#f0e68c" font-family="Liberation Sans, sans-serif" textLength="38.8" lengthAdjust="spacingAndGlyphs" xml:space="preserve">-130</text>
<text x="223.7" y="372.6" font-size="18" fill="#f0e68c" font-family="Liberation Sans, sans-serif" textLength="38.8" lengthAdjust="spacingAndGlyphs" xml:space="preserve">-125</text>
<text x="303.7" y="372.6" font-size="18" fill="#f0e68c" font-family="Liberation Sans, sans-serif" textLength="38.8" lengthAdjust="spacingAndGlyphs" xml:space="preserve">-120</text>
<text x="383.7" y="372.6" font-size="18" fill="#f0e68c" font-family="Liberation Sans, sans-serif" textLength="38.8" lengthAdjust="spacingAndGlyphs" xml:space="preserve">-115</text>
<text x="463.7" y="372.6" font-size="18" fill="#f0e68c" font-family="Liberation Sans, sans-serif" textLength="38.8" lengthAdjust="spacingAndGlyphs" xml:space="preserve">-110</text>
<line x1="487" y1="34.5" x2="572" y2="34.5" stroke="#aaa" stroke-width="1"/>
<text x="490" y="46.5" font-size="17.5" fill="#fff" font-family="Liberation Sans, sans-serif" xml:space="preserve">ir</text>
<defs><linearGradient id="irg" x1="0" y1="0" x2="0" y2="1"><stop offset="0" stop-color="#0c0c0c"/><stop offset="1" stop-color="#c8c8c8"/></linearGradient></defs>
<rect x="489" y="60" width="10" height="94.5" fill="url(#irg)"/>
<rect x="489" y="154.4" width="10" height="16.4" fill="#0000ff"/><rect x="489" y="170.8" width="10" height="4.7" fill="#ff0000"/><rect x="489" y="175.5" width="10" height="4.5" fill="#ffa500"/><rect x="489" y="180" width="10" height="4" fill="#ffc0cb"/><rect x="489" y="184" width="10" height="4" fill="#ffff00"/>
<text x="504.4" y="67.6" font-size="17.6" fill="#fff" font-family="Liberation Sans, sans-serif" textLength="44" lengthAdjust="spacingAndGlyphs" xml:space="preserve">387.0</text>
<text x="504.4" y="89.9" font-size="17.6" fill="#fff" font-family="Liberation Sans, sans-serif" textLength="44" lengthAdjust="spacingAndGlyphs" xml:space="preserve">351.0</text>
<text x="504.4" y="112.3" font-size="17.6" fill="#fff" font-family="Liberation Sans, sans-serif" textLength="44" lengthAdjust="spacingAndGlyphs" xml:space="preserve">315.0</text>
<text x="504.4" y="134.7" font-size="17.6" fill="#fff" font-family="Liberation Sans, sans-serif" textLength="44" lengthAdjust="spacingAndGlyphs" xml:space="preserve">279.0</text>
<text x="504.4" y="157" font-size="17.6" fill="#fff" font-family="Liberation Sans, sans-serif" textLength="44" lengthAdjust="spacingAndGlyphs" xml:space="preserve">243.0</text>
<text x="504.4" y="179.3" font-size="17.6" fill="#fff" font-family="Liberation Sans, sans-serif" textLength="44" lengthAdjust="spacingAndGlyphs" xml:space="preserve">207.0</text>
<line x1="487" y1="237.5" x2="572" y2="237.5" stroke="#aaa" stroke-width="1"/>
<text x="490" y="257.5" font-size="17.5" fill="#fff" font-family="Liberation Sans, sans-serif" textLength="51" lengthAdjust="spacingAndGlyphs" xml:space="preserve">maxdz</text>
<rect x="489.5" y="263" width="9.5" height="28.2" fill="#b22222"/>
<rect x="489.5" y="291" width="9.5" height="28.2" fill="#ffa07a"/>
<rect x="489.5" y="319" width="9.5" height="28.2" fill="#f5f07a"/>
<rect x="489.5" y="347" width="9.5" height="28.2" fill="#00f090"/>
<text x="504.5" y="283.8" font-size="17.6" fill="#fff" font-family="Liberation Sans, sans-serif" textLength="35" lengthAdjust="spacingAndGlyphs" xml:space="preserve">55.0</text>
<text x="504.5" y="311.9" font-size="17.6" fill="#fff" font-family="Liberation Sans, sans-serif" textLength="35" lengthAdjust="spacingAndGlyphs" xml:space="preserve">45.0</text>
<text x="504.5" y="340" font-size="17.6" fill="#fff" font-family="Liberation Sans, sans-serif" textLength="35" lengthAdjust="spacingAndGlyphs" xml:space="preserve">35.0</text>
<text x="504.5" y="368.1" font-size="17.6" fill="#fff" font-family="Liberation Sans, sans-serif" textLength="35" lengthAdjust="spacingAndGlyphs" xml:space="preserve">25.0</text>
<line x1="487" y1="375.5" x2="572" y2="375.5" stroke="#aaa" stroke-width="1"/>
<rect x="5.5" y="376.5" width="45" height="47" fill="#191970" stroke="#808080" stroke-width="1"/><g transform="translate(5,376)"><path d="M7.2 11.8C7.9 11.2 9.6 8.8 11.2 7.9C12.8 7.1 14.4 6.3 16.9 6.7C19.3 7.1 23.6 9.5 25.9 10.2C28.2 10.9 28.8 11.3 30.7 11C32.6 10.7 36.5 8.9 37.6 8.5" fill="none" stroke="#ffff00" stroke-width="2.0" stroke-linecap="round"/><path d="M37.6 8.9C36.9 9.8 35.3 12.8 33.2 14.6C31.1 16.4 27.6 17.9 25 19.9C22.4 21.9 20 24.1 17.7 26.4C15.4 28.7 13.1 31.5 11.2 33.7C9.3 35.9 7.1 38.5 6.3 39.4" fill="none" stroke="#ffff00" stroke-width="1.6" stroke-linecap="round"/><path d="M6.3 39.4C7.1 38.9 9 36.8 11.2 36.2C13.4 35.6 16.6 35.3 19.3 35.8C22 36.3 25.2 38.7 27.5 39.4C29.8 40.1 31.3 40.5 33.2 39.8C35.1 39.1 38 36.1 38.9 35.4" fill="none" stroke="#ffff00" stroke-width="2.0" stroke-linecap="round"/></g>
<rect x="52.7" y="376.5" width="45" height="47" fill="#191970" stroke="#808080" stroke-width="1"/><g transform="translate(52.2,376)"><text x="2.6" y="14.8" font-size="14.5" fill="#ffff00" font-family="Liberation Sans, sans-serif" font-weight="bold" textLength="30.5" lengthAdjust="spacingAndGlyphs" xml:space="preserve">GOES</text><clipPath id="gc52376"><rect x="2.5" y="17" width="22" height="27"/></clipPath><g clip-path="url(#gc52376)"><circle cx="6" cy="35" r="17.5" fill="url(#dy)"/><circle cx="7" cy="41" r="4.5" fill="#ffff00"/><circle cx="16.5" cy="27.5" r="3.6" fill="#ffff00"/><circle cx="6" cy="22" r="2.2" fill="#ffff00"/></g><path d="M23 24.5L40 21.5M24.5 31.5L40 22" stroke="#ffff00" stroke-width="1" stroke-dasharray="1 1.4" fill="none"/><path d="M40.8 18.2L43.4 21L40.8 23.8L38.2 21Z" fill="#ffff00"/><text x="25.5" y="42.5" font-size="9.5" fill="#ffff00" font-family="Liberation Sans, sans-serif" textLength="13.5" lengthAdjust="spacingAndGlyphs" xml:space="preserve">.IR</text><rect x="20" y="17.5" width="0.9" height="0.9" fill="#ffff00"/><rect x="30" y="21" width="0.9" height="0.9" fill="#ffff00"/><rect x="38" y="30" width="0.9" height="0.9" fill="#ffff00"/><rect x="33" y="33" width="0.9" height="0.9" fill="#ffff00"/><rect x="28" y="38" width="0.9" height="0.9" fill="#ffff00"/><rect x="24" y="43" width="0.9" height="0.9" fill="#ffff00"/></g>
<rect x="99.7" y="376.5" width="45" height="47" fill="#191970" stroke="#808080" stroke-width="1"/><g transform="translate(99.2,376)"><path d="M4.8 9.4Q9 27.5 27 31.2" fill="none" stroke="#ffff00" stroke-width="1.8" stroke-linecap="round"/><path d="M12.5 21L15 24L15.8 39.4H8.6L11 29Z" fill="#ffff00"/><rect x="12.2" y="20.3" width="4.2" height="4.2" fill="none" stroke="#ffff00" stroke-width="0.8"/><text x="35.6" y="5" font-size="12.5" fill="#ffff00" font-family="Liberation Sans, sans-serif" style="writing-mode:vertical-rl;text-orientation:upright;letter-spacing:-2.1px">SUR</text></g>
<rect x="146.9" y="376.5" width="45" height="47" fill="#696969" stroke="#8c8c8c" stroke-width="1"/><g transform="translate(146.4,376)"><g fill="none" stroke="#dcdcdc" stroke-width="1.3"><rect x="5.2" y="5.4" width="35" height="36"/><path d="M13.9 5.4v36M5.2 14.4h35"/><path d="M22.7 5.4v36M5.2 23.4h35"/><path d="M31.4 5.4v36M5.2 32.4h35"/></g><path d="M12 8Q16 26 33 30.5" fill="none" stroke="#dcdcdc" stroke-width="1.8"/><path d="M19 22L21.5 25L22.5 41H15L17.5 30Z" fill="#dcdcdc"/></g>
<rect x="193.8" y="376.5" width="12.5" height="47" fill="#696969" stroke="#8c8c8c" stroke-width="1"/><g transform="translate(193.3,376)"><text x="6.8" y="5.2" font-size="6.2" fill="#dcdcdc" font-family="Liberation Sans, sans-serif" style="writing-mode:vertical-rl;text-orientation:upright;letter-spacing:-1.1px" font-weight="bold">BOUNDS</text></g>
<rect x="209.1" y="400.5" width="20.5" height="22.5" fill="#191970" stroke="#808080" stroke-width="1"/><g transform="translate(208.6,400)"><g fill="none" stroke="#ffff00" stroke-width="1"><rect x="3.4" y="4.2" width="15" height="15"/><path d="M8.4 4.2v15M13.4 4.2v15M3.4 9.2h15M3.4 14.2h15"/></g></g>
<rect x="231.9" y="376.5" width="19" height="47" fill="#191970" stroke="#808080" stroke-width="1"/><g transform="translate(231.4,376)"><path d="M3 6l3-2 2 1-2 3 1 2-2 2-1-2-2 1zM9.5 5.5l3-1.5 4-0.5-2 2.5 1.5 2-2.5 1-1 3.5-1.5-3 1-2.5z M3 13l2 1-1 1.5z" fill="#ffff00"/><text x="10" y="16.9" font-size="9" fill="#ffff00" font-family="Liberation Sans, sans-serif" style="writing-mode:vertical-rl;text-orientation:upright;letter-spacing:-2px">MAP</text></g>
<rect x="253.7" y="376.5" width="19.5" height="47" fill="#696969" stroke="#8c8c8c" stroke-width="1"/><g transform="translate(253.2,376)"><g fill="none" stroke="#dcdcdc" stroke-width="1"><ellipse cx="10.4" cy="23.5" rx="7.5" ry="9.4"/><ellipse cx="10.4" cy="23.5" rx="5" ry="6.2"/><ellipse cx="10.4" cy="23.5" rx="2.5" ry="3.1"/><path d="M12.9 23.5L17.9 23.5"/><path d="M12.2 25.7L15.7 30.1"/><path d="M10.4 26.6L10.4 32.9"/><path d="M8.6 25.7L5.1 30.1"/><path d="M7.9 23.5L2.9 23.5"/><path d="M8.6 21.3L5.1 16.9"/><path d="M10.4 20.4L10.4 14.1"/><path d="M12.2 21.3L15.7 16.9"/></g></g>
<rect x="275.9" y="400.5" width="20.5" height="22.5" fill="#191970" stroke="#808080" stroke-width="1"/><g transform="translate(275.4,400)"><rect x="8.6" y="5" width="3.4" height="2.2" fill="#ffff00"/><rect x="8" y="7" width="4.6" height="6.4" fill="none" stroke="#ffff00" stroke-width="1"/><path d="M10.3 7v6.4" stroke="#ffff00" stroke-width="1"/><path d="M6.5 13.6h7.6l1.4 2.6h-10.4z" fill="#ffff00"/><path d="M2.5 17.5q1.5-2 3 0t3 0 3 0 3 0 3 0" fill="none" stroke="#ffff00" stroke-width="1"/></g>
<rect x="298.7" y="376.5" width="44.6" height="47" fill="#696969" stroke="#8c8c8c" stroke-width="1"/><g transform="translate(298.2,376)"><g fill="none" stroke="#dcdcdc" stroke-width="1.1"><path d="M6 32.5h33.2l-2.6 6"/><path d="M6 32.5q0.5 3.5 3.5 6"/><path d="M8 32.5v-8.5h4.4l2 7"/><circle cx="22.3" cy="23.4" r="3.1"/><path d="M21.2 26.4v6M23.4 26.4v6"/><path d="M34.2 16v16.5"/></g><path d="M3 44v-4.5l2 1.3 2.2-2.2 2.2 2.2 2.4-1.6 2.2 1.6 2.4-2 2.4 2 2.4-1.8 2.4 1.8 2.4-2 2.4 2 2.4-1.8 2.4 1.8 2.4-2.2 2.2 2.2 2.2-2.4V44z" fill="#dcdcdc"/></g>
<line x1="571.5" y1="3" x2="571.5" y2="427" stroke="#fff" stroke-width="1" stroke-dasharray="1 1"/>
<rect x="572" y="3" width="562" height="385" fill="#000"/>
<defs><clipPath id="x1"><polygon points="622.5,293.8 697,293.8 699,291.5 699,201.8 678.2,201.8 678.2,150.2 694.7,150.2 694.7,167 712,167 712,178.6 738.4,178.6 738.4,150.2 773.2,150.2 773.2,138.4 781.1,138.4 781.1,110.4 794,110.4 794,120.7 810.8,120.7 810.8,110.4 854.9,110.4 859.2,105 859.2,98.2 862.8,98.2 862.8,149.8 875.8,149.8 875.8,167 957.9,167 957.9,178.6 1048,178.6 1048,299 622.5,299"/></clipPath></defs><g clip-path="url(#x1)"><rect x="620" y="90" width="430" height="215" fill="#00b4e6"/><polygon points="678,150 695,150 695,161 686,170 681,178 680,192 679.5,202 678,202" fill="#0a6ee6"/><polygon points="738,150 765,150 757,157 746,162 740,168 738,172" fill="#0a6ee6"/><polygon points="781,110 794,110 786,113 783,118 781,122" fill="#0a6ee6"/><polygon points="622,293 642,293 640,300 622,300" fill="#0a6ee6"/><polygon points="871,149 876,149 876,168 874,160" fill="#0a6ee6"/><path d="M700.1 300C700.5 283.5 701.3 262.9 702.2 251.2C703.1 239.5 703.7 236.1 705.5 229.7C707.3 223.2 710.3 216.2 713 212.5C715.7 208.8 718 209 721.6 207.2C725.2 205.4 731.3 204 734.5 201.8C737.7 199.7 737.3 196.3 740.9 194.3C744.5 192.3 752 192.3 756 190C760 187.7 761.7 184.4 764.6 180.3C767.5 176.2 770.3 170.9 773.2 165.2C776.1 159.5 778.6 150.2 781.8 145.9C785 141.6 786.4 140.4 792.5 139.4C798.6 138.4 811.5 142.1 818.3 139.9C825.1 137.8 828.4 131.2 833.4 126.5C838.4 121.8 844.8 113.3 848.4 111.5C852 109.7 852.6 113.6 854.9 115.8C857.2 118 860.5 120.4 862.4 124.4C864.2 128.4 864.5 135.7 866 140C867.5 144.3 869.9 144.9 871.5 150.2C873.1 155.5 874.2 166.1 875.8 171.7C877.4 177.2 874.8 180.8 881.2 183.5C887.7 186.2 904.6 187.2 914.5 187.8C924.4 188.4 933.1 186.5 940.3 187.2C947.5 187.9 947.5 190.3 957.5 192.1C967.5 193.9 989.8 197.4 1000.5 198.1C1011.2 198.8 1015.5 198.1 1022 196.4C1028.5 194.7 1034.9 189.4 1039.2 187.8C1043.5 186.2 1042.9 187 1048 186.7C1053.1 186.4 1066.3 158.8 1070 186C1073.7 213.2 1131.7 322.7 1070 350C1008.4 377.3 761.8 358.3 700.1 350C638.5 341.7 699.8 316.5 700.1 300Z" fill="#00e696"/><path d="M707.6 300C707.8 283.5 708 262.6 708.7 251.2C709.4 239.8 710.5 236.4 711.9 231.9C713.3 227.4 714.6 226.2 717.3 224.4C720 222.6 724.1 223.4 728 221.1C731.9 218.8 735.5 214 740.9 210.4C746.3 206.8 754.9 202.8 760.3 199.6C765.7 196.4 769.6 194.2 773.2 191C776.8 187.8 778.6 183.7 781.8 180.3C785 176.9 788.9 171.8 792.5 170.6C796.1 169.3 798.6 171.5 803.3 172.8C808 174.1 815.5 178.6 820.5 178.6C825.5 178.6 829.5 175.6 833.4 172.8C837.3 170 841.2 164.1 844.1 162C847 159.9 848.6 159.8 850.6 160.3C852.6 160.8 854.4 160.8 856 165.2C857.6 169.6 858.9 180.6 860.3 186.7C861.7 192.8 862.7 198.2 864.5 201.8C866.3 205.4 868.4 206.8 871 208.2C873.6 209.6 875.6 209.6 880 210C884.4 210.4 890.5 209.7 897.3 210.8C904.1 211.9 913 214.7 920.9 216.8C928.8 218.9 933.1 222.2 944.6 223.3C956.1 224.4 977.5 224 989.7 223.3C1001.9 222.6 1008 220.2 1017.7 219C1027.4 217.8 1039.3 216.5 1048 215.8C1056.7 215.1 1066.3 192.6 1070 215C1073.7 237.4 1130.4 327.5 1070 350C1009.6 372.5 768 358.3 707.6 350C647.2 341.7 707.4 316.5 707.6 300Z" fill="#00704a"/><path d="M715.6 300C715.5 283.5 714.6 261.1 715.1 251.2C715.6 241.3 716.2 243.7 718.4 240.5C720.5 237.3 724.2 235 728 231.9C731.8 228.8 735.5 225.8 740.9 222.2C746.3 218.6 754.2 213.3 760.3 210.4C766.4 207.5 772.9 206.4 777.5 205C782.1 203.6 784.6 202 788.2 202.2C791.8 202.4 794.3 203.7 799 206.1C803.7 208.5 810.8 212.7 816.2 216.8C821.6 220.9 827.6 228.2 831.2 230.8C834.8 233.4 835.2 232.6 837.7 232.5C840.2 232.4 842 230.7 846.3 230.2C850.6 229.7 857.9 229.9 863.5 229.7C869.1 229.4 874.4 229.2 880 228.7C885.6 228.2 890.5 224.9 897.3 226.5C904.1 228.1 913.7 234.4 920.9 238.3C928.1 242.2 934.2 247.9 940.3 250.1C946.4 252.2 952.5 251.9 957.5 251.2C962.5 250.5 965.4 247.1 970.4 245.8C975.4 244.6 981.2 243.3 987.6 243.7C994 244.1 1004 246.7 1009 248C1014 249.3 1013.4 252.3 1017.7 251.6C1022 250.9 1029.9 245.4 1034.9 243.7C1040 242 1042.2 241.9 1048 241.5C1053.8 241.1 1066.3 222.9 1070 241C1073.7 259.1 1129.1 331.8 1070 350C1010.9 368.2 774.7 358.3 715.6 350C656.5 341.7 715.7 316.5 715.6 300Z" fill="#c8c8c8"/><path d="M724.2 305C724.3 292.5 723.8 283.1 724.8 274.9C725.8 266.6 727.5 261.9 730.2 255.5C732.9 249.1 736.6 241.4 740.9 236.2C745.2 231 750.6 227.3 756 224.4C761.4 221.5 767.7 220 773.2 219C778.8 218 784.3 217.1 789.3 218.3C794.3 219.6 798.8 222.8 803.3 226.5C807.8 230.2 811.9 234.6 816.2 240.5C820.5 246.4 825.5 255.9 829.1 262C832.7 268.1 836 269.8 837.7 277C839.4 284.2 839 292.8 839.2 305C839.5 317.2 858.4 342.5 839.2 350C820 357.5 743.4 357.5 724.2 350C705 342.5 724.1 317.5 724.2 305Z" fill="#da9632"/><path d="M864 305C863.1 292.5 858.9 282.2 858.6 275C858.3 267.8 859.6 265.5 862 262C864.4 258.5 868.5 255.9 873 254C877.5 252.1 883.7 251 888.7 250.8C893.7 250.6 898.8 251 903 253C907.2 255 911.2 259 914 263C916.8 267 918.5 270 919.5 277C920.5 284 919.8 292.8 919.9 305C920 317.2 929.2 342.5 919.9 350C910.6 357.5 873.3 357.5 864 350C854.7 342.5 864.9 317.5 864 305Z" fill="#da9632"/><path d="M730.6 305C731.1 292.8 731.3 285.2 733.4 277C735.5 268.8 739.3 261.4 743.1 255.5C746.9 249.6 751.7 245 756 241.5C760.3 238 764.2 235.8 768.9 234.5C773.5 233.2 779.2 232.6 783.9 233.6C788.5 234.6 792.8 237.2 796.8 240.5C800.8 243.8 804 248 807.6 253.4C811.2 258.8 815.8 267 818.3 272.7C820.8 278.4 821.8 282.4 822.6 287.8C823.4 293.2 822.9 294.6 823 305C823.1 315.4 838.4 342.5 823 350C807.6 357.5 746 357.5 730.6 350C715.2 342.5 730.1 317.2 730.6 305Z" fill="#eeb422"/><path d="M736.6 305C737 293.9 737 289.6 738.8 283.5C740.6 277.4 743.8 272.5 747.4 268.4C751 264.3 755.6 261 760.3 258.7C764.9 256.4 771 254.2 775.3 254.4C779.6 254.6 782.5 257.1 786.1 259.8C789.7 262.5 794 266.7 796.8 270.6C799.6 274.6 801.6 277.8 802.8 283.5C803.9 289.2 803.6 293.9 803.7 305C803.9 316.1 814.9 342.5 803.7 350C792.5 357.5 747.8 357.5 736.6 350C725.4 342.5 736.2 316.1 736.6 305Z" fill="#fad714"/><path d="M751 302C751.6 291.8 753.7 291.4 754.9 288.8C756.1 286.2 756.9 286.3 758.1 286.7C759.4 287.1 761 288.4 762.4 291C763.8 293.6 766 292.2 766.7 302C767.4 311.8 769.3 342 766.7 350C764.1 358 753.6 358 751 350C748.4 342 750.4 312.2 751 302Z" fill="#ffd7af"/></g>
<rect x="622.5" y="29.5" width="425.5" height="281" fill="none" stroke="#fff" stroke-width="1"/><line x1="675.7" y1="29.5" x2="675.7" y2="35.5" stroke="#fff" stroke-width="1"/><line x1="675.7" y1="310.5" x2="675.7" y2="304.5" stroke="#fff" stroke-width="1"/><line x1="728.9" y1="29.5" x2="728.9" y2="35.5" stroke="#fff" stroke-width="1"/><line x1="728.9" y1="310.5" x2="728.9" y2="304.5" stroke="#fff" stroke-width="1"/><line x1="782.1" y1="29.5" x2="782.1" y2="35.5" stroke="#fff" stroke-width="1"/><line x1="782.1" y1="310.5" x2="782.1" y2="304.5" stroke="#fff" stroke-width="1"/><line x1="835.2" y1="29.5" x2="835.2" y2="35.5" stroke="#fff" stroke-width="1"/><line x1="835.2" y1="310.5" x2="835.2" y2="304.5" stroke="#fff" stroke-width="1"/><line x1="888.4" y1="29.5" x2="888.4" y2="35.5" stroke="#fff" stroke-width="1"/><line x1="888.4" y1="310.5" x2="888.4" y2="304.5" stroke="#fff" stroke-width="1"/><line x1="941.6" y1="29.5" x2="941.6" y2="35.5" stroke="#fff" stroke-width="1"/><line x1="941.6" y1="310.5" x2="941.6" y2="304.5" stroke="#fff" stroke-width="1"/><line x1="994.8" y1="29.5" x2="994.8" y2="35.5" stroke="#fff" stroke-width="1"/><line x1="994.8" y1="310.5" x2="994.8" y2="304.5" stroke="#fff" stroke-width="1"/><line x1="622.5" y1="282.4" x2="633.5" y2="282.4" stroke="#fff" stroke-width="1"/><line x1="1048" y1="282.4" x2="1037" y2="282.4" stroke="#fff" stroke-width="1"/><line x1="622.5" y1="254.3" x2="633.5" y2="254.3" stroke="#fff" stroke-width="1"/><line x1="1048" y1="254.3" x2="1037" y2="254.3" stroke="#fff" stroke-width="1"/><line x1="622.5" y1="226.2" x2="633.5" y2="226.2" stroke="#fff" stroke-width="1"/><line x1="1048" y1="226.2" x2="1037" y2="226.2" stroke="#fff" stroke-width="1"/><line x1="622.5" y1="198.1" x2="633.5" y2="198.1" stroke="#fff" stroke-width="1"/><line x1="1048" y1="198.1" x2="1037" y2="198.1" stroke="#fff" stroke-width="1"/><line x1="622.5" y1="170" x2="633.5" y2="170" stroke="#fff" stroke-width="1"/><line x1="1048" y1="170" x2="1037" y2="170" stroke="#fff" stroke-width="1"/><line x1="622.5" y1="141.9" x2="633.5" y2="141.9" stroke="#fff" stroke-width="1"/><line x1="1048" y1="141.9" x2="1037" y2="141.9" stroke="#fff" stroke-width="1"/><line x1="622.5" y1="113.8" x2="633.5" y2="113.8" stroke="#fff" stroke-width="1"/><line x1="1048" y1="113.8" x2="1037" y2="113.8" stroke="#fff" stroke-width="1"/><line x1="622.5" y1="85.7" x2="633.5" y2="85.7" stroke="#fff" stroke-width="1"/><line x1="1048" y1="85.7" x2="1037" y2="85.7" stroke="#fff" stroke-width="1"/><line x1="622.5" y1="57.6" x2="633.5" y2="57.6" stroke="#fff" stroke-width="1"/><line x1="1048" y1="57.6" x2="1037" y2="57.6" stroke="#fff" stroke-width="1"/><text x="618.5" y="310" font-size="9.5" fill="#fff" font-family="Liberation Sans, sans-serif" text-anchor="end" xml:space="preserve">0</text><text x="618.5" y="253.8" font-size="9.5" fill="#fff" font-family="Liberation Sans, sans-serif" text-anchor="end" xml:space="preserve">4</text><text x="618.5" y="197.6" font-size="9.5" fill="#fff" font-family="Liberation Sans, sans-serif" text-anchor="end" xml:space="preserve">8</text><text x="618.5" y="141.4" font-size="9.5" fill="#fff" font-family="Liberation Sans, sans-serif" text-anchor="end" xml:space="preserve">12</text><text x="618.5" y="85.2" font-size="9.5" fill="#fff" font-family="Liberation Sans, sans-serif" text-anchor="end" xml:space="preserve">16</text><text x="618.5" y="29" font-size="9.5" fill="#fff" font-family="Liberation Sans, sans-serif" text-anchor="end" xml:space="preserve">20</text><text x="622.5" y="323" font-size="10" fill="#fff" font-family="Liberation Sans, sans-serif" text-anchor="middle" xml:space="preserve">0.0</text><text x="728.9" y="323" font-size="10" fill="#fff" font-family="Liberation Sans, sans-serif" text-anchor="middle" xml:space="preserve">15.4</text><text x="835.2" y="323" font-size="10" fill="#fff" font-family="Liberation Sans, sans-serif" text-anchor="middle" xml:space="preserve">30.8</text><text x="941.6" y="323" font-size="10" fill="#fff" font-family="Liberation Sans, sans-serif" text-anchor="middle" xml:space="preserve">46.3</text><text x="1047" y="323" font-size="10" fill="#fff" font-family="Liberation Sans, sans-serif" text-anchor="end" xml:space="preserve">61</text><text x="836" y="330.5" font-size="10" fill="#fff" font-family="Liberation Sans, sans-serif" text-anchor="middle" textLength="67" lengthAdjust="spacingAndGlyphs" xml:space="preserve">Distance in km</text><text transform="translate(602.5,170) rotate(-90)" font-size="13" fill="#fff" font-family="Liberation Serif, serif" text-anchor="middle" letter-spacing="1" xml:space="preserve"><tspan font-weight="bold">km</tspan> above MSL</text>
<text transform="translate(582.2,19.7) scale(1.1415,1)" font-size="16" fill="#ffff00" font-family="Liberation Sans, sans-serif" xml:space="preserve">24<tspan dx="1.3">-</tspan><tspan dx="1.3">a</tspan>ug<tspan dx="1.3">-</tspan><tspan dx="1.3">1</tspan>997,04:05:00</text>
<text transform="translate(779,19.7) scale(1.1738,1)" font-size="16" fill="#fff" font-family="Liberation Sans, sans-serif" xml:space="preserve">Planar cross<tspan dx="1.3">-</tspan><tspan dx="1.3">s</tspan>ection plot.  Contour of</text>
<text x="582.2" y="46.9" font-size="16" fill="#fff" font-family="Liberation Sans, sans-serif" textLength="173.4" lengthAdjust="spacingAndGlyphs" xml:space="preserve">maxdz using: rhb_3d.</text>
<line x1="1050" y1="28.5" x2="1133" y2="28.5" stroke="#aaa" stroke-width="1"/>
<text x="1050.3" y="43.4" font-size="12" fill="#fff" font-family="Liberation Sans, sans-serif" textLength="33" lengthAdjust="spacingAndGlyphs" xml:space="preserve">maxdz</text>
<rect x="1050" y="52.2" width="10.3" height="17.1" fill="#ff8080"/>
<rect x="1050" y="69.1" width="10.3" height="17.1" fill="#ff8c94"/>
<rect x="1050" y="86.1" width="10.3" height="17.1" fill="#ffaa5a"/>
<rect x="1050" y="103" width="10.3" height="17.1" fill="#ffd7af"/>
<rect x="1050" y="119.9" width="10.3" height="17.1" fill="#fad714"/>
<rect x="1050" y="136.9" width="10.3" height="17.1" fill="#eeb422"/>
<rect x="1050" y="153.8" width="10.3" height="17.1" fill="#da9632"/>
<rect x="1050" y="170.7" width="10.3" height="17.1" fill="#c8c8c8"/>
<rect x="1050" y="187.6" width="10.3" height="17.1" fill="#00704a"/>
<rect x="1050" y="204.6" width="10.3" height="17.1" fill="#00e696"/>
<rect x="1050" y="221.5" width="10.3" height="17.1" fill="#00b4e6"/>
<rect x="1050" y="238.4" width="10.3" height="17.1" fill="#0a6ee6"/>
<rect x="1050" y="255.4" width="10.3" height="17.1" fill="#1e3cdc"/>
<rect x="1050" y="272.3" width="10.3" height="17.1" fill="#3c1edc"/>
<rect x="1050" y="289.2" width="10.3" height="17.1" fill="#6e00f0"/>
<rect x="1050" y="306.1" width="10.3" height="17.1" fill="#8c00ff"/>
<text x="1065.6" y="64.4" font-size="11.8" fill="#fff" font-family="Liberation Sans, sans-serif" textLength="23" lengthAdjust="spacingAndGlyphs" xml:space="preserve">62.5</text>
<text x="1065.6" y="81.4" font-size="11.8" fill="#fff" font-family="Liberation Sans, sans-serif" textLength="23" lengthAdjust="spacingAndGlyphs" xml:space="preserve">57.5</text>
<text x="1065.6" y="98.3" font-size="11.8" fill="#fff" font-family="Liberation Sans, sans-serif" textLength="23" lengthAdjust="spacingAndGlyphs" xml:space="preserve">52.5</text>
<text x="1065.6" y="115.2" font-size="11.8" fill="#fff" font-family="Liberation Sans, sans-serif" textLength="23" lengthAdjust="spacingAndGlyphs" xml:space="preserve">47.5</text>
<text x="1065.6" y="132.2" font-size="11.8" fill="#fff" font-family="Liberation Sans, sans-serif" textLength="23" lengthAdjust="spacingAndGlyphs" xml:space="preserve">42.5</text>
<text x="1065.6" y="149.2" font-size="11.8" fill="#fff" font-family="Liberation Sans, sans-serif" textLength="23" lengthAdjust="spacingAndGlyphs" xml:space="preserve">37.5</text>
<text x="1065.6" y="166.1" font-size="11.8" fill="#fff" font-family="Liberation Sans, sans-serif" textLength="23" lengthAdjust="spacingAndGlyphs" xml:space="preserve">32.5</text>
<text x="1065.6" y="183.1" font-size="11.8" fill="#fff" font-family="Liberation Sans, sans-serif" textLength="23" lengthAdjust="spacingAndGlyphs" xml:space="preserve">27.5</text>
<text x="1065.6" y="200" font-size="11.8" fill="#fff" font-family="Liberation Sans, sans-serif" textLength="23" lengthAdjust="spacingAndGlyphs" xml:space="preserve">22.5</text>
<text x="1065.6" y="216.9" font-size="11.8" fill="#fff" font-family="Liberation Sans, sans-serif" textLength="23" lengthAdjust="spacingAndGlyphs" xml:space="preserve">17.5</text>
<text x="1065.6" y="233.9" font-size="11.8" fill="#fff" font-family="Liberation Sans, sans-serif" textLength="23" lengthAdjust="spacingAndGlyphs" xml:space="preserve">12.5</text>
<text x="1065.6" y="250.8" font-size="11.8" fill="#fff" font-family="Liberation Sans, sans-serif" textLength="16.4" lengthAdjust="spacingAndGlyphs" xml:space="preserve">7.5</text>
<text x="1065.6" y="267.8" font-size="11.8" fill="#fff" font-family="Liberation Sans, sans-serif" textLength="16.4" lengthAdjust="spacingAndGlyphs" xml:space="preserve">2.5</text>
<text x="1065.6" y="284.8" font-size="11.8" fill="#fff" font-family="Liberation Sans, sans-serif" textLength="23.7" lengthAdjust="spacingAndGlyphs" xml:space="preserve">-2.5</text>
<text x="1065.6" y="301.7" font-size="11.8" fill="#fff" font-family="Liberation Sans, sans-serif" textLength="23.7" lengthAdjust="spacingAndGlyphs" xml:space="preserve">-7.5</text>
<text x="1065.6" y="318.6" font-size="11.8" fill="#fff" font-family="Liberation Sans, sans-serif" textLength="30.3" lengthAdjust="spacingAndGlyphs" xml:space="preserve">-12.5</text>
<line x1="1050" y1="335.6" x2="1133" y2="335.6" stroke="#aaa" stroke-width="1"/>
<rect x="577.5" y="336.5" width="45" height="47" fill="#191970" stroke="#808080" stroke-width="1"/><g transform="translate(577,336)"><path d="M7.2 11.8C7.9 11.2 9.6 8.8 11.2 7.9C12.8 7.1 14.4 6.3 16.9 6.7C19.3 7.1 23.6 9.5 25.9 10.2C28.2 10.9 28.8 11.3 30.7 11C32.6 10.7 36.5 8.9 37.6 8.5" fill="none" stroke="#ffff00" stroke-width="2.0" stroke-linecap="round"/><path d="M37.6 8.9C36.9 9.8 35.3 12.8 33.2 14.6C31.1 16.4 27.6 17.9 25 19.9C22.4 21.9 20 24.1 17.7 26.4C15.4 28.7 13.1 31.5 11.2 33.7C9.3 35.9 7.1 38.5 6.3 39.4" fill="none" stroke="#ffff00" stroke-width="1.6" stroke-linecap="round"/><path d="M6.3 39.4C7.1 38.9 9 36.8 11.2 36.2C13.4 35.6 16.6 35.3 19.3 35.8C22 36.3 25.2 38.7 27.5 39.4C29.8 40.1 31.3 40.5 33.2 39.8C35.1 39.1 38 36.1 38.9 35.4" fill="none" stroke="#ffff00" stroke-width="2.0" stroke-linecap="round"/></g><rect x="624.5" y="336.5" width="45" height="47" fill="#191970" stroke="#808080" stroke-width="1"/><g transform="translate(624,336)"><text x="23" y="9" font-size="6.6" fill="#ffff00" font-family="Liberation Sans, sans-serif" font-weight="bold" text-anchor="middle" textLength="24.5" lengthAdjust="spacingAndGlyphs" xml:space="preserve">CROSS</text><text x="23" y="43.6" font-size="6.6" fill="#ffff00" font-family="Liberation Sans, sans-serif" font-weight="bold" text-anchor="middle" textLength="30" lengthAdjust="spacingAndGlyphs" xml:space="preserve">SECTION</text><g fill="none" stroke="#ffff00" stroke-width="1"><rect x="4.4" y="17.5" width="21" height="19.4"/><rect x="19.8" y="9.8" width="21" height="19.9"/><path d="M4.4 17.5L19.8 9.8M25.4 17.5L40.8 9.8M25.4 36.9L40.8 29.7"/><path d="M4.4 36.9L19.8 29.7" stroke-dasharray="1 1"/></g><path d="M13 14.5L34.5 12.3V31.5L13 33.8Z" fill="#191970"/><path d="M13 14.5L34.5 12.3V31.5L13 33.8Z" fill="url(#dy)"/></g><rect x="671.5" y="336.5" width="45" height="47" fill="#696969" stroke="#8c8c8c" stroke-width="1"/><g transform="translate(671,336)"><text x="23" y="9" font-size="6.6" fill="#e6e6e6" font-family="Liberation Sans, sans-serif" font-weight="bold" text-anchor="middle" textLength="24.5" lengthAdjust="spacingAndGlyphs" xml:space="preserve">CROSS</text><text x="23" y="43.6" font-size="6.6" fill="#e6e6e6" font-family="Liberation Sans, sans-serif" font-weight="bold" text-anchor="middle" textLength="30" lengthAdjust="spacingAndGlyphs" xml:space="preserve">SECTION</text><g fill="none" stroke="#e6e6e6" stroke-width="1"><rect x="4.4" y="17.5" width="21" height="19.4"/><rect x="19.8" y="9.8" width="21" height="19.9"/><path d="M4.4 17.5L19.8 9.8M25.4 17.5L40.8 9.8M25.4 36.9L40.8 29.7"/><path d="M4.4 36.9L19.8 29.7" stroke-dasharray="1 1"/></g><path d="M13 14.5L34.5 12.3V31.5L13 33.8Z" fill="#696969"/><path d="M13 14.5L34.5 12.3V31.5L13 33.8Z" fill="url(#dg)"/></g><rect x="718.5" y="336.5" width="45" height="47" fill="#696969" stroke="#8c8c8c" stroke-width="1"/><g transform="translate(718,336)"><text x="23" y="9" font-size="6.6" fill="#e6e6e6" font-family="Liberation Sans, sans-serif" font-weight="bold" text-anchor="middle" textLength="24.5" lengthAdjust="spacingAndGlyphs" xml:space="preserve">CROSS</text><text x="23" y="43.6" font-size="6.6" fill="#e6e6e6" font-family="Liberation Sans, sans-serif" font-weight="bold" text-anchor="middle" textLength="30" lengthAdjust="spacingAndGlyphs" xml:space="preserve">SECTION</text><g fill="none" stroke="#e6e6e6" stroke-width="1"><rect x="4.4" y="17.5" width="21" height="19.4"/><rect x="19.8" y="9.8" width="21" height="19.9"/><path d="M4.4 17.5L19.8 9.8M25.4 17.5L40.8 9.8M25.4 36.9L40.8 29.7"/><path d="M4.4 36.9L19.8 29.7" stroke-dasharray="1 1"/></g><path d="M13 14.5L34.5 12.3V31.5L13 33.8Z" fill="#696969"/><path d="M13 14.5L34.5 12.3V31.5L13 33.8Z" fill="url(#dg)"/></g>
<line x1="1133.5" y1="3" x2="1133.5" y2="387" stroke="#fff" stroke-width="1" stroke-dasharray="1 1"/><line x1="572" y1="386.5" x2="1134" y2="386.5" stroke="#fff" stroke-width="1" stroke-dasharray="1 1"/>
<rect x="573" y="387" width="561" height="384" fill="#000"/>
<g transform="translate(2,384)"><g clip-path="url(#x1)"><rect x="620" y="90" width="430" height="215" fill="#005014"/><polygon points="674.4,146.2 797,105.3 791.6,110.1 789.5,118.2 787.3,126.8 781.9,139.7 775.5,152.6 769,159.1 762.6,167.7 754,180.6 736.8,191.3 717.4,197.8 699.2,203.2 689.5,206.4 674.4,206.4" fill="#0a8a1e"/><polygon points="676.6,148.3 695.9,148.3 695.9,167.3 713.1,167.3 712.1,170.3 700.2,173.1 693.8,168.8 687.3,160.2 680.9,153.7 678.3,153.1" fill="#00aa14"/><path d="M756.1 258C755.8 254.7 756.9 250.3 758.3 247.2C759.7 244.2 761.1 242 764.7 239.7C768.3 237.4 773 234.9 779.8 233.2C786.6 231.6 795.9 231.1 805.6 230C815.2 228.9 830.3 228.4 837.8 226.8C845.3 225.2 847.6 221.3 850.7 220.4C853.8 219.4 854.2 220.5 856.6 221C859 221.5 862.7 222.1 865.2 223.6C867.7 225.1 869.5 227.3 871.6 230C873.8 232.7 875.6 237.1 878.1 239.7C880.6 242.3 883.5 244.5 886.7 245.5C889.9 246.5 893.1 246.6 897.4 245.5C901.7 244.4 907.1 241 912.5 238.6C917.9 236.2 924.7 232.8 929.7 231.1C934.7 229.4 937.6 228.3 942.6 228.3C947.6 228.3 954 230.2 959.8 231.1C965.5 232 971.2 233.5 977 233.9C982.7 234.3 988.4 234.1 994.2 233.2C999.9 232.4 1005.6 230.6 1011.4 228.9C1017.1 227.3 1023.6 225.2 1028.6 223.6C1033.6 222 1037.2 220.5 1041.5 219.3C1045.8 218 1052.2 202.1 1054.4 216.1C1056.5 230 1099.9 288.6 1054.4 303.1C1008.8 317.6 827 306 780.9 303.1C734.7 300.2 779.2 290.6 777.6 285.9C776 281.3 774 278.4 771.2 275.2C768.3 271.9 762.9 269.4 760.4 266.6C757.9 263.7 756.5 261.2 756.1 258Z" fill="#0a8a1e"/><path d="M785.2 258C785.5 256.5 787.8 255.8 790.5 255.8C793.2 255.8 796.6 259 801.3 258C805.9 256.9 813.5 251.2 818.5 249.4C823.5 247.6 826.7 246.9 831.4 247.2C836 247.6 842.2 249.7 846.4 251.5C850.6 253.3 853.5 255.5 856.6 258C859.7 260.5 862.7 264.1 865.2 266.6C867.7 269.1 869.1 271.2 871.6 273C874.2 274.8 877 276.8 880.2 277.3C883.5 277.9 887.8 277 891 276.2C894.2 275.5 896.7 274.8 899.6 273C902.5 271.2 905 268 908.2 265.5C911.4 263 915 260 918.9 258C922.9 255.9 927.5 254.2 931.8 253.2C936.1 252.2 939.4 252.1 944.7 252C950.1 251.8 958 252.5 964.1 252.6C970.2 252.7 975.5 253.5 981.3 252.6C987 251.7 992 248.7 998.5 247.2C1004.9 245.8 1013.5 244.9 1020 244C1026.4 243.1 1031.4 242.7 1037.2 241.8C1042.9 241 1051.5 228.8 1054.4 239.1C1057.2 249.3 1096.9 292.4 1054.4 303.1C1011.8 313.8 842 305.6 799.1 303.1C756.2 300.6 797.9 293.1 797 288.1C796.1 283 795.2 277 793.8 273C792.3 269.1 789.8 266.9 788.4 264.4C786.9 261.9 784.8 259.4 785.2 258Z" fill="#00aa14"/><path d="M1009.2 303.1C1001.9 302.2 1010 299.7 1010.7 297.7C1011.4 295.8 1012 293.4 1013.5 291.3C1015.1 289.1 1017.1 286.8 1020 284.8C1022.8 282.9 1027.1 280.7 1030.7 279.5C1034.3 278.2 1037.5 278 1041.5 277.3C1045.4 276.7 1052.2 271.3 1054.4 275.6C1056.5 279.9 1061.9 298.5 1054.4 303.1C1046.8 307.7 1016.5 304 1009.2 303.1Z" fill="#00ff14"/><path d="M794.8 121.5C796.3 117.2 797.3 112 801.3 107.5C805.2 103 808.4 97.1 818.5 94.6C828.5 92.1 850.7 86.7 861.5 92.4C872.2 98.2 879.4 116.3 883 129C886.5 141.7 885.4 160.5 883 168.8C880.5 177 872.8 175.4 868.4 178.4C864 181.5 860 184.2 856.6 187C853.2 189.9 850.8 192.4 848 195.6C845.2 198.9 844.9 203.5 840 206.4C835 209.2 825.6 211.2 818.5 212.8C811.3 214.4 804.1 214.6 797 216.1C789.8 217.5 780.9 220.7 775.5 221.4C770.1 222.1 767.2 221.8 764.7 220.4C762.2 218.9 761.2 215.2 760.4 212.8C759.6 210.5 759.8 209.6 760 206.4C760.2 203.2 759.6 198.5 761.5 193.5C763.4 188.5 768.1 182 771.2 176.3C774.2 170.6 777.3 163.7 779.8 159.1C782.3 154.4 784.1 152.6 786.2 148.3C788.4 144 791.2 137.8 792.7 133.3C794.1 128.8 793.4 125.8 794.8 121.5Z" fill="#b4b4b4"/><path d="M924.3 163.4C930.3 162 949.6 162 961.9 163.4C974.3 164.8 985.2 169.7 998.5 172C1011.7 174.3 1034.7 176.2 1041.5 177.4C1048.3 178.5 1040.7 177.6 1039.3 178.9C1037.9 180.1 1035 182.8 1032.9 184.9C1030.7 187 1028.9 189.5 1026.4 191.3C1023.9 193.1 1021.8 194.5 1017.8 195.6C1013.9 196.8 1008.1 197.9 1002.8 198.2C997.4 198.6 992.4 198.1 985.6 197.8C978.8 197.4 968 196.2 961.9 196.1C955.8 195.9 952.3 197.5 949 196.7C945.8 195.9 945.1 193.3 942.6 191.3C940.1 189.4 936.3 187 934 184.9C931.7 182.7 930 180.6 928.6 178.4C927.2 176.3 926.5 174.5 925.8 172C925.1 169.5 918.3 164.8 924.3 163.4Z" fill="#b4b4b4"/><path d="M773.3 193.5C773.5 191.3 774 189.9 775.5 187C776.9 184.2 779.8 180.2 781.9 176.3C784.1 172.3 785.9 168 788.4 163.4C790.9 158.7 793.8 152.8 797 148.3C800.2 143.9 803.4 139 807.7 136.5C812 134 818.8 135.3 822.8 133.3C826.7 131.3 828.5 126.7 831.4 124.7C834.2 122.7 836.7 121 840 121C843.2 121 847.9 122.7 850.7 124.7C853.6 126.7 856.1 129 857.2 133.3C858.2 137.6 857.9 144.8 857.2 150.5C856.4 156.2 855 162.7 852.9 167.7C850.7 172.7 847.5 176.3 844.3 180.6C841 184.9 837.5 190.1 833.5 193.5C829.6 196.9 826.7 199.4 820.6 201C814.5 202.6 803.4 202.5 797 203.2C790.5 203.8 785.7 205.2 781.9 204.7C778.2 204.1 775.8 201.8 774.4 199.9C773 198.1 773.2 195.6 773.3 193.5Z" fill="#a04000"/><path d="M794.8 179.5C795.2 176.9 799.1 173.2 801.3 169.8C803.4 166.4 805.9 161.7 807.7 159.1C809.5 156.5 809.9 154.4 812 154.4C814.2 154.4 817.8 157.2 820.6 159.1C823.5 160.9 827.5 163.4 829.2 165.5C830.9 167.7 831.1 169.7 830.7 172C830.4 174.3 829.1 177 827.1 179.5C825 182 821.3 185.4 818.5 187C815.6 188.6 813.1 189.5 809.9 189.2C806.7 188.9 801.6 186.9 799.1 185.3C796.6 183.7 794.5 182.1 794.8 179.5Z" fill="#dc9664"/><polygon points="622,293.5 640,293.5 640,300 622,300" fill="#0a8a1e"/><polygon points="692,300 697,292 701,292 701,300" fill="#0a8a1e"/></g></g>
<rect x="624.5" y="413.5" width="425.5" height="281" fill="none" stroke="#fff" stroke-width="1"/><line x1="677.7" y1="413.5" x2="677.7" y2="419.5" stroke="#fff" stroke-width="1"/><line x1="677.7" y1="694.5" x2="677.7" y2="688.5" stroke="#fff" stroke-width="1"/><line x1="730.9" y1="413.5" x2="730.9" y2="419.5" stroke="#fff" stroke-width="1"/><line x1="730.9" y1="694.5" x2="730.9" y2="688.5" stroke="#fff" stroke-width="1"/><line x1="784.1" y1="413.5" x2="784.1" y2="419.5" stroke="#fff" stroke-width="1"/><line x1="784.1" y1="694.5" x2="784.1" y2="688.5" stroke="#fff" stroke-width="1"/><line x1="837.2" y1="413.5" x2="837.2" y2="419.5" stroke="#fff" stroke-width="1"/><line x1="837.2" y1="694.5" x2="837.2" y2="688.5" stroke="#fff" stroke-width="1"/><line x1="890.4" y1="413.5" x2="890.4" y2="419.5" stroke="#fff" stroke-width="1"/><line x1="890.4" y1="694.5" x2="890.4" y2="688.5" stroke="#fff" stroke-width="1"/><line x1="943.6" y1="413.5" x2="943.6" y2="419.5" stroke="#fff" stroke-width="1"/><line x1="943.6" y1="694.5" x2="943.6" y2="688.5" stroke="#fff" stroke-width="1"/><line x1="996.8" y1="413.5" x2="996.8" y2="419.5" stroke="#fff" stroke-width="1"/><line x1="996.8" y1="694.5" x2="996.8" y2="688.5" stroke="#fff" stroke-width="1"/><line x1="624.5" y1="666.4" x2="635.5" y2="666.4" stroke="#fff" stroke-width="1"/><line x1="1050" y1="666.4" x2="1039" y2="666.4" stroke="#fff" stroke-width="1"/><line x1="624.5" y1="638.3" x2="635.5" y2="638.3" stroke="#fff" stroke-width="1"/><line x1="1050" y1="638.3" x2="1039" y2="638.3" stroke="#fff" stroke-width="1"/><line x1="624.5" y1="610.2" x2="635.5" y2="610.2" stroke="#fff" stroke-width="1"/><line x1="1050" y1="610.2" x2="1039" y2="610.2" stroke="#fff" stroke-width="1"/><line x1="624.5" y1="582.1" x2="635.5" y2="582.1" stroke="#fff" stroke-width="1"/><line x1="1050" y1="582.1" x2="1039" y2="582.1" stroke="#fff" stroke-width="1"/><line x1="624.5" y1="554" x2="635.5" y2="554" stroke="#fff" stroke-width="1"/><line x1="1050" y1="554" x2="1039" y2="554" stroke="#fff" stroke-width="1"/><line x1="624.5" y1="525.9" x2="635.5" y2="525.9" stroke="#fff" stroke-width="1"/><line x1="1050" y1="525.9" x2="1039" y2="525.9" stroke="#fff" stroke-width="1"/><line x1="624.5" y1="497.8" x2="635.5" y2="497.8" stroke="#fff" stroke-width="1"/><line x1="1050" y1="497.8" x2="1039" y2="497.8" stroke="#fff" stroke-width="1"/><line x1="624.5" y1="469.7" x2="635.5" y2="469.7" stroke="#fff" stroke-width="1"/><line x1="1050" y1="469.7" x2="1039" y2="469.7" stroke="#fff" stroke-width="1"/><line x1="624.5" y1="441.6" x2="635.5" y2="441.6" stroke="#fff" stroke-width="1"/><line x1="1050" y1="441.6" x2="1039" y2="441.6" stroke="#fff" stroke-width="1"/><text x="620.5" y="694" font-size="9.5" fill="#fff" font-family="Liberation Sans, sans-serif" text-anchor="end" xml:space="preserve">0</text><text x="620.5" y="637.8" font-size="9.5" fill="#fff" font-family="Liberation Sans, sans-serif" text-anchor="end" xml:space="preserve">4</text><text x="620.5" y="581.6" font-size="9.5" fill="#fff" font-family="Liberation Sans, sans-serif" text-anchor="end" xml:space="preserve">8</text><text x="620.5" y="525.4" font-size="9.5" fill="#fff" font-family="Liberation Sans, sans-serif" text-anchor="end" xml:space="preserve">12</text><text x="620.5" y="469.2" font-size="9.5" fill="#fff" font-family="Liberation Sans, sans-serif" text-anchor="end" xml:space="preserve">16</text><text x="620.5" y="413" font-size="9.5" fill="#fff" font-family="Liberation Sans, sans-serif" text-anchor="end" xml:space="preserve">20</text><text x="624.5" y="707" font-size="10" fill="#fff" font-family="Liberation Sans, sans-serif" text-anchor="middle" xml:space="preserve">0.0</text><text x="730.9" y="707" font-size="10" fill="#fff" font-family="Liberation Sans, sans-serif" text-anchor="middle" xml:space="preserve">15.4</text><text x="837.2" y="707" font-size="10" fill="#fff" font-family="Liberation Sans, sans-serif" text-anchor="middle" xml:space="preserve">30.8</text><text x="943.6" y="707" font-size="10" fill="#fff" font-family="Liberation Sans, sans-serif" text-anchor="middle" xml:space="preserve">46.3</text><text x="1049" y="707" font-size="10" fill="#fff" font-family="Liberation Sans, sans-serif" text-anchor="end" xml:space="preserve">61</text><text x="838" y="714.5" font-size="10" fill="#fff" font-family="Liberation Sans, sans-serif" text-anchor="middle" textLength="67" lengthAdjust="spacingAndGlyphs" xml:space="preserve">Distance in km</text><text transform="translate(604.5,554) rotate(-90)" font-size="13" fill="#fff" font-family="Liberation Serif, serif" text-anchor="middle" letter-spacing="1" xml:space="preserve"><tspan font-weight="bold">km</tspan> above MSL</text>
<text transform="translate(583.8,403.6) scale(1.1501,1)" font-size="16" fill="#ffff00" font-family="Liberation Sans, sans-serif" xml:space="preserve">24<tspan dx="1.3">-</tspan><tspan dx="1.3">a</tspan>ug<tspan dx="1.3">-</tspan><tspan dx="1.3">1</tspan>997,04:05:00</text>
<text transform="translate(780.8,403.6) scale(1.1776,1)" font-size="16" fill="#fff" font-family="Liberation Sans, sans-serif" xml:space="preserve">Planar cross<tspan dx="1.3">-</tspan><tspan dx="1.3">s</tspan>ection plot.  Contour of</text>
<text x="583.8" y="430.7" font-size="16" fill="#fff" font-family="Liberation Sans, sans-serif" textLength="229" lengthAdjust="spacingAndGlyphs" xml:space="preserve">radialvelocity using: rhb_3d.</text>
<line x1="1052" y1="412.5" x2="1134" y2="412.5" stroke="#aaa" stroke-width="1"/>
<text x="1052.3" y="427.4" font-size="12" fill="#fff" font-family="Liberation Sans, sans-serif" textLength="74.8" lengthAdjust="spacingAndGlyphs" xml:space="preserve">radialvelocity</text>
<rect x="1052.3" y="436.2" width="9.5" height="11.1" fill="#ff0000"/>
<rect x="1052.3" y="447.1" width="9.5" height="11.1" fill="#d20000"/>
<rect x="1052.3" y="458.1" width="9.5" height="11.1" fill="#8c0000"/>
<rect x="1052.3" y="469" width="9.5" height="11.1" fill="#e05a00"/>
<rect x="1052.3" y="480" width="9.5" height="11.1" fill="#ff8000"/>
<rect x="1052.3" y="490.9" width="9.5" height="11.1" fill="#ff5a5a"/>
<rect x="1052.3" y="501.8" width="9.5" height="11.1" fill="#ff8c8c"/>
<rect x="1052.3" y="512.8" width="9.5" height="11.1" fill="#ffbebe"/>
<rect x="1052.3" y="523.7" width="9.5" height="11.1" fill="#ffff00"/>
<rect x="1052.3" y="534.7" width="9.5" height="11.1" fill="#ffb428"/>
<rect x="1052.3" y="545.6" width="9.5" height="11.1" fill="#dc9664"/>
<rect x="1052.3" y="556.5" width="9.5" height="11.1" fill="#a04000"/>
<rect x="1052.3" y="567.5" width="9.5" height="11.1" fill="#b4b4b4"/>
<rect x="1052.3" y="578.4" width="9.5" height="11.1" fill="#005014"/>
<rect x="1052.3" y="589.4" width="9.5" height="11.1" fill="#0a8a1e"/>
<rect x="1052.3" y="600.3" width="9.5" height="11.1" fill="#00aa14"/>
<rect x="1052.3" y="611.2" width="9.5" height="11.1" fill="#00ff14"/>
<rect x="1052.3" y="622.2" width="9.5" height="11.1" fill="#00beff"/>
<rect x="1052.3" y="633.1" width="9.5" height="11.1" fill="#0082ff"/>
<rect x="1052.3" y="644.1" width="9.5" height="11.1" fill="#0000dc"/>
<rect x="1052.3" y="655" width="9.5" height="11.1" fill="#0014b4"/>
<rect x="1052.3" y="665.9" width="9.5" height="11.1" fill="#001496"/>
<rect x="1052.3" y="676.9" width="9.5" height="11.1" fill="#a0a0c8"/>
<rect x="1052.3" y="687.8" width="9.5" height="11.1" fill="#5a5a8c"/>
<rect x="1052.3" y="698.8" width="9.5" height="11.1" fill="#787878"/>
<text x="1068" y="445.6" font-size="11.8" fill="#fff" font-family="Liberation Sans, sans-serif" textLength="23" lengthAdjust="spacingAndGlyphs" xml:space="preserve">24.0</text>
<text x="1068" y="456.6" font-size="11.8" fill="#fff" font-family="Liberation Sans, sans-serif" textLength="23" lengthAdjust="spacingAndGlyphs" xml:space="preserve">22.0</text>
<text x="1068" y="467.5" font-size="11.8" fill="#fff" font-family="Liberation Sans, sans-serif" textLength="23" lengthAdjust="spacingAndGlyphs" xml:space="preserve">20.0</text>
<text x="1068" y="478.5" font-size="11.8" fill="#fff" font-family="Liberation Sans, sans-serif" textLength="23" lengthAdjust="spacingAndGlyphs" xml:space="preserve">18.0</text>
<text x="1068" y="489.5" font-size="11.8" fill="#fff" font-family="Liberation Sans, sans-serif" textLength="23" lengthAdjust="spacingAndGlyphs" xml:space="preserve">16.0</text>
<text x="1068" y="500.5" font-size="11.8" fill="#fff" font-family="Liberation Sans, sans-serif" textLength="23" lengthAdjust="spacingAndGlyphs" xml:space="preserve">14.0</text>
<text x="1068" y="511.4" font-size="11.8" fill="#fff" font-family="Liberation Sans, sans-serif" textLength="23" lengthAdjust="spacingAndGlyphs" xml:space="preserve">12.0</text>
<text x="1068" y="522.4" font-size="11.8" fill="#fff" font-family="Liberation Sans, sans-serif" textLength="23" lengthAdjust="spacingAndGlyphs" xml:space="preserve">10.0</text>
<text x="1068" y="533.4" font-size="11.8" fill="#fff" font-family="Liberation Sans, sans-serif" textLength="16.4" lengthAdjust="spacingAndGlyphs" xml:space="preserve">8.0</text>
<text x="1068" y="544.3" font-size="11.8" fill="#fff" font-family="Liberation Sans, sans-serif" textLength="16.4" lengthAdjust="spacingAndGlyphs" xml:space="preserve">6.0</text>
<text x="1068" y="555.3" font-size="11.8" fill="#fff" font-family="Liberation Sans, sans-serif" textLength="16.4" lengthAdjust="spacingAndGlyphs" xml:space="preserve">4.0</text>
<text x="1068" y="566.3" font-size="11.8" fill="#fff" font-family="Liberation Sans, sans-serif" textLength="16.4" lengthAdjust="spacingAndGlyphs" xml:space="preserve">2.0</text>
<text x="1068" y="577.2" font-size="11.8" fill="#fff" font-family="Liberation Sans, sans-serif" textLength="16.4" lengthAdjust="spacingAndGlyphs" xml:space="preserve">0.0</text>
<text x="1068" y="588.2" font-size="11.8" fill="#fff" font-family="Liberation Sans, sans-serif" textLength="23.7" lengthAdjust="spacingAndGlyphs" xml:space="preserve">-2.0</text>
<text x="1068" y="599.2" font-size="11.8" fill="#fff" font-family="Liberation Sans, sans-serif" textLength="23.7" lengthAdjust="spacingAndGlyphs" xml:space="preserve">-4.0</text>
<text x="1068" y="610.2" font-size="11.8" fill="#fff" font-family="Liberation Sans, sans-serif" textLength="23.7" lengthAdjust="spacingAndGlyphs" xml:space="preserve">-6.0</text>
<text x="1068" y="621.1" font-size="11.8" fill="#fff" font-family="Liberation Sans, sans-serif" textLength="23.7" lengthAdjust="spacingAndGlyphs" xml:space="preserve">-8.0</text>
<text x="1068" y="632.1" font-size="11.8" fill="#fff" font-family="Liberation Sans, sans-serif" textLength="30.3" lengthAdjust="spacingAndGlyphs" xml:space="preserve">-10.0</text>
<text x="1068" y="643.1" font-size="11.8" fill="#fff" font-family="Liberation Sans, sans-serif" textLength="30.3" lengthAdjust="spacingAndGlyphs" xml:space="preserve">-12.0</text>
<text x="1068" y="654" font-size="11.8" fill="#fff" font-family="Liberation Sans, sans-serif" textLength="30.3" lengthAdjust="spacingAndGlyphs" xml:space="preserve">-14.0</text>
<text x="1068" y="665" font-size="11.8" fill="#fff" font-family="Liberation Sans, sans-serif" textLength="30.3" lengthAdjust="spacingAndGlyphs" xml:space="preserve">-16.0</text>
<text x="1068" y="676" font-size="11.8" fill="#fff" font-family="Liberation Sans, sans-serif" textLength="30.3" lengthAdjust="spacingAndGlyphs" xml:space="preserve">-18.0</text>
<text x="1068" y="686.9" font-size="11.8" fill="#fff" font-family="Liberation Sans, sans-serif" textLength="30.3" lengthAdjust="spacingAndGlyphs" xml:space="preserve">-20.0</text>
<text x="1068" y="697.9" font-size="11.8" fill="#fff" font-family="Liberation Sans, sans-serif" textLength="30.3" lengthAdjust="spacingAndGlyphs" xml:space="preserve">-22.0</text>
<text x="1068" y="708.9" font-size="11.8" fill="#fff" font-family="Liberation Sans, sans-serif" textLength="30.3" lengthAdjust="spacingAndGlyphs" xml:space="preserve">-24.0</text>
<line x1="1052" y1="718.8" x2="1134" y2="718.8" stroke="#aaa" stroke-width="1"/>
<rect x="579.5" y="720.5" width="45" height="47" fill="#191970" stroke="#808080" stroke-width="1"/><g transform="translate(579,720)"><path d="M7.2 11.8C7.9 11.2 9.6 8.8 11.2 7.9C12.8 7.1 14.4 6.3 16.9 6.7C19.3 7.1 23.6 9.5 25.9 10.2C28.2 10.9 28.8 11.3 30.7 11C32.6 10.7 36.5 8.9 37.6 8.5" fill="none" stroke="#ffff00" stroke-width="2.0" stroke-linecap="round"/><path d="M37.6 8.9C36.9 9.8 35.3 12.8 33.2 14.6C31.1 16.4 27.6 17.9 25 19.9C22.4 21.9 20 24.1 17.7 26.4C15.4 28.7 13.1 31.5 11.2 33.7C9.3 35.9 7.1 38.5 6.3 39.4" fill="none" stroke="#ffff00" stroke-width="1.6" stroke-linecap="round"/><path d="M6.3 39.4C7.1 38.9 9 36.8 11.2 36.2C13.4 35.6 16.6 35.3 19.3 35.8C22 36.3 25.2 38.7 27.5 39.4C29.8 40.1 31.3 40.5 33.2 39.8C35.1 39.1 38 36.1 38.9 35.4" fill="none" stroke="#ffff00" stroke-width="2.0" stroke-linecap="round"/></g><rect x="626.5" y="720.5" width="45" height="47" fill="#191970" stroke="#808080" stroke-width="1"/><g transform="translate(626,720)"><text x="23" y="9" font-size="6.6" fill="#ffff00" font-family="Liberation Sans, sans-serif" font-weight="bold" text-anchor="middle" textLength="24.5" lengthAdjust="spacingAndGlyphs" xml:space="preserve">CROSS</text><text x="23" y="43.6" font-size="6.6" fill="#ffff00" font-family="Liberation Sans, sans-serif" font-weight="bold" text-anchor="middle" textLength="30" lengthAdjust="spacingAndGlyphs" xml:space="preserve">SECTION</text><g fill="none" stroke="#ffff00" stroke-width="1"><rect x="4.4" y="17.5" width="21" height="19.4"/><rect x="19.8" y="9.8" width="21" height="19.9"/><path d="M4.4 17.5L19.8 9.8M25.4 17.5L40.8 9.8M25.4 36.9L40.8 29.7"/><path d="M4.4 36.9L19.8 29.7" stroke-dasharray="1 1"/></g><path d="M13 14.5L34.5 12.3V31.5L13 33.8Z" fill="#191970"/><path d="M13 14.5L34.5 12.3V31.5L13 33.8Z" fill="url(#dy)"/></g><rect x="673.5" y="720.5" width="45" height="47" fill="#696969" stroke="#8c8c8c" stroke-width="1"/><g transform="translate(673,720)"><text x="23" y="9" font-size="6.6" fill="#e6e6e6" font-family="Liberation Sans, sans-serif" font-weight="bold" text-anchor="middle" textLength="24.5" lengthAdjust="spacingAndGlyphs" xml:space="preserve">CROSS</text><text x="23" y="43.6" font-size="6.6" fill="#e6e6e6" font-family="Liberation Sans, sans-serif" font-weight="bold" text-anchor="middle" textLength="30" lengthAdjust="spacingAndGlyphs" xml:space="preserve">SECTION</text><g fill="none" stroke="#e6e6e6" stroke-width="1"><rect x="4.4" y="17.5" width="21" height="19.4"/><rect x="19.8" y="9.8" width="21" height="19.9"/><path d="M4.4 17.5L19.8 9.8M25.4 17.5L40.8 9.8M25.4 36.9L40.8 29.7"/><path d="M4.4 36.9L19.8 29.7" stroke-dasharray="1 1"/></g><path d="M13 14.5L34.5 12.3V31.5L13 33.8Z" fill="#696969"/><path d="M13 14.5L34.5 12.3V31.5L13 33.8Z" fill="url(#dg)"/></g><rect x="720.5" y="720.5" width="45" height="47" fill="#696969" stroke="#8c8c8c" stroke-width="1"/><g transform="translate(720,720)"><text x="23" y="9" font-size="6.6" fill="#e6e6e6" font-family="Liberation Sans, sans-serif" font-weight="bold" text-anchor="middle" textLength="24.5" lengthAdjust="spacingAndGlyphs" xml:space="preserve">CROSS</text><text x="23" y="43.6" font-size="6.6" fill="#e6e6e6" font-family="Liberation Sans, sans-serif" font-weight="bold" text-anchor="middle" textLength="30" lengthAdjust="spacingAndGlyphs" xml:space="preserve">SECTION</text><g fill="none" stroke="#e6e6e6" stroke-width="1"><rect x="4.4" y="17.5" width="21" height="19.4"/><rect x="19.8" y="9.8" width="21" height="19.9"/><path d="M4.4 17.5L19.8 9.8M25.4 17.5L40.8 9.8M25.4 36.9L40.8 29.7"/><path d="M4.4 36.9L19.8 29.7" stroke-dasharray="1 1"/></g><path d="M13 14.5L34.5 12.3V31.5L13 33.8Z" fill="#696969"/><path d="M13 14.5L34.5 12.3V31.5L13 33.8Z" fill="url(#dg)"/></g>
<rect x="1134" y="420" width="7" height="279" fill="#fff"/><line x1="1134.5" y1="420" x2="1134.5" y2="699" stroke="#fff" stroke-width="1" stroke-dasharray="1 1"/><line x1="1140.5" y1="420" x2="1140.5" y2="699" stroke="#fff" stroke-width="1" stroke-dasharray="1 1"/>
<line x1="573.5" y1="387" x2="573.5" y2="770" stroke="#fff" stroke-width="1" stroke-dasharray="1 1"/><line x1="1133.5" y1="387" x2="1133.5" y2="420" stroke="#fff" stroke-width="1" stroke-dasharray="1 1"/><line x1="1133.5" y1="699" x2="1133.5" y2="770" stroke="#fff" stroke-width="1" stroke-dasharray="1 1"/><line x1="573" y1="770.5" x2="1134" y2="770.5" stroke="#fff" stroke-width="1" stroke-dasharray="1 1"/><line x1="573" y1="387.5" x2="1134" y2="387.5" stroke="#fff" stroke-width="1" stroke-dasharray="1 1"/>
<rect x="433" y="771" width="651.5" height="111.5" fill="#000"/>
<rect x="441" y="796" width="637" height="80" fill="none" stroke="#fff" stroke-width="2"/>
<rect x="580.8" y="771.8" width="44" height="20" fill="#000" stroke="#fff" stroke-width="1.5"/>
<text x="602.8" y="786.5" font-size="12" fill="#fff" font-family="Liberation Sans, sans-serif" text-anchor="middle" textLength="34" lengthAdjust="spacingAndGlyphs" xml:space="preserve">Dismiss</text>
<text x="579" y="810.6" font-size="15" fill="#fff" font-family="Liberation Mono, monospace" textLength="369" lengthAdjust="spacingAndGlyphs" xml:space="preserve">PLATFORM   FIELD      ALTITUDE       TIME</text>
<text x="579" y="825.5" font-size="15" fill="#fff" font-family="Liberation Mono, monospace" textLength="486" lengthAdjust="spacingAndGlyphs" xml:space="preserve">rhb_lowprf maxdz      0.50 km MSL    24-Aug-97,4:00:31</text>
<text x="579" y="840.4" font-size="15" fill="#fff" font-family="Liberation Mono, monospace" textLength="486" lengthAdjust="spacingAndGlyphs" xml:space="preserve">rhb_3d     maxdz      0.50 km MSL    24-Aug-97,4:01:23</text>
<text x="579" y="855.3" font-size="15" fill="#fff" font-family="Liberation Mono, monospace" textLength="351" lengthAdjust="spacingAndGlyphs" xml:space="preserve">rhb_met               24-Aug-97,4:04:59</text>
<line x1="1084.5" y1="771" x2="1084.5" y2="882" stroke="#fff" stroke-width="1" stroke-dasharray="1 1"/><line x1="433" y1="882.5" x2="1085" y2="882.5" stroke="#fff" stroke-width="1" stroke-dasharray="1 1"/>
<rect x="5" y="427" width="569" height="444" fill="#000"/>
<path fill="#0b6e4f" d="M241.1 459.5h4.2v4.2h-4.2zM253.7 459.5h4.2v4.2h-4.2zM262.1 459.5h4.2v4.2h-4.2zM270.5 459.5h4.2v4.2h-4.2zM236.9 463.7h46.2v4.2h-46.2zM249.5 467.9h16.8v4.2h-16.8zM278.9 467.9h4.2v4.2h-4.2zM249.5 472.1h12.6v4.2h-12.6zM287.3 488.9h12.6v4.2h-12.6zM274.7 493.1h4.2v4.2h-4.2zM283.1 493.1h12.6v4.2h-12.6zM253.7 497.3h8.4v4.2h-8.4zM274.7 497.3h12.6v4.2h-12.6zM249.5 501.5h8.4v4.2h-8.4zM266.3 501.5h21v4.2h-21zM262.1 505.7h25.2v4.2h-25.2zM257.9 509.9h29.4v4.2h-29.4zM257.9 514.1h21v4.2h-21zM287.3 514.1h8.4v4.2h-8.4zM257.9 518.3h16.8v4.2h-16.8zM287.3 518.3h8.4v4.2h-8.4zM257.9 522.5h8.4v4.2h-8.4zM278.9 522.5h4.2v4.2h-4.2zM287.3 522.5h12.6v4.2h-12.6zM274.7 526.7h8.4v4.2h-8.4zM287.3 526.7h12.6v4.2h-12.6zM320.9 526.7h12.6v4.2h-12.6zM278.9 530.9h4.2v4.2h-4.2zM287.3 530.9h8.4v4.2h-8.4zM320.9 530.9h21v4.2h-21zM144.5 535.1h4.2v4.2h-4.2zM320.9 535.1h4.2v4.2h-4.2zM329.3 535.1h12.6v4.2h-12.6zM404.9 535.1h8.4v4.2h-8.4zM115.1 539.3h4.2v4.2h-4.2zM123.5 539.3h29.4v4.2h-29.4zM325.1 539.3h16.8v4.2h-16.8zM400.7 539.3h12.6v4.2h-12.6zM123.5 543.5h33.6v4.2h-33.6zM165.5 543.5h12.6v4.2h-12.6zM320.9 543.5h25.2v4.2h-25.2zM400.7 543.5h8.4v4.2h-8.4zM127.7 547.7h25.2v4.2h-25.2zM157.1 547.7h21v4.2h-21zM316.7 547.7h25.2v4.2h-25.2zM375.5 547.7h16.8v4.2h-16.8zM400.7 547.7h8.4v4.2h-8.4zM127.7 551.9h25.2v4.2h-25.2zM161.3 551.9h16.8v4.2h-16.8zM320.9 551.9h16.8v4.2h-16.8zM375.5 551.9h16.8v4.2h-16.8zM400.7 551.9h4.2v4.2h-4.2zM131.9 556.1h12.6v4.2h-12.6zM165.5 556.1h12.6v4.2h-12.6zM333.5 556.1h4.2v4.2h-4.2zM379.7 556.1h12.6v4.2h-12.6zM404.9 556.1h4.2v4.2h-4.2zM136.1 560.3h4.2v4.2h-4.2zM165.5 560.3h8.4v4.2h-8.4zM379.7 560.3h4.2v4.2h-4.2zM388.1 560.3h4.2v4.2h-4.2zM383.9 564.5h12.6v4.2h-12.6zM404.9 564.5h4.2v4.2h-4.2zM383.9 568.7h12.6v4.2h-12.6zM400.7 568.7h12.6v4.2h-12.6zM115.1 572.9h12.6v4.2h-12.6zM375.5 572.9h37.8v4.2h-37.8zM115.1 577.1h21v4.2h-21zM144.5 577.1h4.2v4.2h-4.2zM371.3 577.1h42v4.2h-42zM110.9 581.3h25.2v4.2h-25.2zM140.3 581.3h8.4v4.2h-8.4zM341.9 581.3h16.8v4.2h-16.8zM362.9 581.3h50.4v4.2h-50.4zM417.5 581.3h4.2v4.2h-4.2zM106.7 585.5h29.4v4.2h-29.4zM140.3 585.5h8.4v4.2h-8.4zM312.5 585.5h113.4v4.2h-113.4zM110.9 589.7h21v4.2h-21zM140.3 589.7h8.4v4.2h-8.4zM312.5 589.7h71.4v4.2h-71.4zM396.5 589.7h33.6v4.2h-33.6zM106.7 593.9h25.2v4.2h-25.2zM312.5 593.9h75.6v4.2h-75.6zM392.3 593.9h37.8v4.2h-37.8zM106.7 598.1h25.2v4.2h-25.2zM316.7 598.1h46.2v4.2h-46.2zM367.1 598.1h67.2v4.2h-67.2zM106.7 602.3h4.2v4.2h-4.2zM115.1 602.3h4.2v4.2h-4.2zM123.5 602.3h21v4.2h-21zM316.7 602.3h117.6v4.2h-117.6zM123.5 606.5h33.6v4.2h-33.6zM320.9 606.5h117.6v4.2h-117.6zM123.5 610.7h4.2v4.2h-4.2zM136.1 610.7h21v4.2h-21zM320.9 610.7h117.6v4.2h-117.6zM123.5 614.9h8.4v4.2h-8.4zM140.3 614.9h21v4.2h-21zM320.9 614.9h117.6v4.2h-117.6zM123.5 619.1h4.2v4.2h-4.2zM136.1 619.1h33.6v4.2h-33.6zM320.9 619.1h117.6v4.2h-117.6zM131.9 623.3h37.8v4.2h-37.8zM320.9 623.3h16.8v4.2h-16.8zM350.3 623.3h50.4v4.2h-50.4zM404.9 623.3h29.4v4.2h-29.4zM131.9 627.5h37.8v4.2h-37.8zM320.9 627.5h12.6v4.2h-12.6zM354.5 627.5h84v4.2h-84zM131.9 631.7h16.8v4.2h-16.8zM152.9 631.7h16.8v4.2h-16.8zM320.9 631.7h8.4v4.2h-8.4zM337.7 631.7h8.4v4.2h-8.4zM362.9 631.7h8.4v4.2h-8.4zM375.5 631.7h25.2v4.2h-25.2zM404.9 631.7h33.6v4.2h-33.6zM131.9 635.9h4.2v4.2h-4.2zM144.5 635.9h25.2v4.2h-25.2zM320.9 635.9h8.4v4.2h-8.4zM337.7 635.9h12.6v4.2h-12.6zM388.1 635.9h50.4v4.2h-50.4zM148.7 640.1h16.8v4.2h-16.8zM337.7 640.1h16.8v4.2h-16.8zM375.5 640.1h4.2v4.2h-4.2zM421.7 640.1h12.6v4.2h-12.6zM148.7 644.3h4.2v4.2h-4.2zM157.1 644.3h8.4v4.2h-8.4zM325.1 644.3h33.6v4.2h-33.6zM157.1 648.5h4.2v4.2h-4.2zM316.7 648.5h29.4v4.2h-29.4zM367.1 648.5h8.4v4.2h-8.4zM316.7 652.7h16.8v4.2h-16.8zM341.9 652.7h21v4.2h-21zM367.1 652.7h12.6v4.2h-12.6zM312.5 656.9h21v4.2h-21zM341.9 656.9h37.8v4.2h-37.8zM308.3 661.1h25.2v4.2h-25.2zM341.9 661.1h37.8v4.2h-37.8zM308.3 665.3h4.2v4.2h-4.2zM320.9 665.3h4.2v4.2h-4.2zM329.3 665.3h8.4v4.2h-8.4zM341.9 665.3h8.4v4.2h-8.4zM354.5 665.3h4.2v4.2h-4.2zM178.1 669.5h4.2v4.2h-4.2zM186.5 669.5h4.2v4.2h-4.2zM299.9 669.5h4.2v4.2h-4.2zM329.3 669.5h21v4.2h-21zM400.7 669.5h8.4v4.2h-8.4zM178.1 673.7h12.6v4.2h-12.6zM291.5 673.7h12.6v4.2h-12.6zM312.5 673.7h8.4v4.2h-8.4zM329.3 673.7h16.8v4.2h-16.8zM400.7 673.7h8.4v4.2h-8.4zM178.1 677.9h12.6v4.2h-12.6zM278.9 677.9h67.2v4.2h-67.2zM383.9 677.9h25.2v4.2h-25.2zM413.3 677.9h8.4v4.2h-8.4zM178.1 682.1h12.6v4.2h-12.6zM215.9 682.1h8.4v4.2h-8.4zM278.9 682.1h75.6v4.2h-75.6zM379.7 682.1h46.2v4.2h-46.2zM173.9 686.3h16.8v4.2h-16.8zM207.5 686.3h21v4.2h-21zM278.9 686.3h75.6v4.2h-75.6zM379.7 686.3h46.2v4.2h-46.2zM169.7 690.5h25.2v4.2h-25.2zM211.7 690.5h21v4.2h-21zM283.1 690.5h4.2v4.2h-4.2zM308.3 690.5h25.2v4.2h-25.2zM337.7 690.5h16.8v4.2h-16.8zM358.7 690.5h12.6v4.2h-12.6zM375.5 690.5h54.6v4.2h-54.6zM169.7 694.7h25.2v4.2h-25.2zM220.1 694.7h12.6v4.2h-12.6zM346.1 694.7h4.2v4.2h-4.2zM354.5 694.7h79.8v4.2h-79.8zM165.5 698.9h25.2v4.2h-25.2zM350.3 698.9h79.8v4.2h-79.8zM165.5 703.1h33.6v4.2h-33.6zM346.1 703.1h58.8v4.2h-58.8zM409.1 703.1h21v4.2h-21zM161.3 707.3h46.2v4.2h-46.2zM236.9 707.3h4.2v4.2h-4.2zM341.9 707.3h25.2v4.2h-25.2zM379.7 707.3h16.8v4.2h-16.8zM131.9 711.5h8.4v4.2h-8.4zM165.5 711.5h12.6v4.2h-12.6zM182.3 711.5h25.2v4.2h-25.2zM232.7 711.5h12.6v4.2h-12.6zM341.9 711.5h21v4.2h-21zM379.7 711.5h16.8v4.2h-16.8zM127.7 715.7h16.8v4.2h-16.8zM178.1 715.7h29.4v4.2h-29.4zM224.3 715.7h21v4.2h-21zM249.5 715.7h8.4v4.2h-8.4zM341.9 715.7h25.2v4.2h-25.2zM383.9 715.7h16.8v4.2h-16.8zM127.7 719.9h12.6v4.2h-12.6zM178.1 719.9h21v4.2h-21zM203.3 719.9h4.2v4.2h-4.2zM224.3 719.9h16.8v4.2h-16.8zM249.5 719.9h16.8v4.2h-16.8zM337.7 719.9h42v4.2h-42zM383.9 719.9h25.2v4.2h-25.2zM131.9 724.1h8.4v4.2h-8.4zM178.1 724.1h21v4.2h-21zM245.3 724.1h25.2v4.2h-25.2zM337.7 724.1h37.8v4.2h-37.8zM388.1 724.1h21v4.2h-21zM178.1 728.3h16.8v4.2h-16.8zM249.5 728.3h16.8v4.2h-16.8zM341.9 728.3h37.8v4.2h-37.8zM388.1 728.3h12.6v4.2h-12.6zM182.3 732.5h8.4v4.2h-8.4zM257.9 732.5h4.2v4.2h-4.2zM354.5 732.5h16.8v4.2h-16.8zM224.3 736.7h8.4v4.2h-8.4zM287.3 736.7h16.8v4.2h-16.8zM161.3 740.9h4.2v4.2h-4.2zM220.1 740.9h12.6v4.2h-12.6zM287.3 740.9h16.8v4.2h-16.8zM161.3 745.1h12.6v4.2h-12.6zM220.1 745.1h12.6v4.2h-12.6zM278.9 745.1h25.2v4.2h-25.2zM165.5 749.3h8.4v4.2h-8.4zM220.1 749.3h8.4v4.2h-8.4zM278.9 749.3h25.2v4.2h-25.2zM283.1 753.5h21v4.2h-21zM165.5 757.7h4.2v4.2h-4.2zM186.5 757.7h16.8v4.2h-16.8zM320.9 757.7h12.6v4.2h-12.6zM182.3 761.9h25.2v4.2h-25.2zM316.7 761.9h16.8v4.2h-16.8zM182.3 766.1h25.2v4.2h-25.2zM316.7 766.1h16.8v4.2h-16.8zM186.5 770.3h21v4.2h-21zM194.9 774.5h4.2v4.2h-4.2zM232.7 778.7h4.2v4.2h-4.2zM207.5 782.9h12.6v4.2h-12.6zM224.3 782.9h21v4.2h-21zM207.5 787.1h12.6v4.2h-12.6zM224.3 787.1h33.6v4.2h-33.6zM220.1 791.3h21v4.2h-21zM245.3 791.3h8.4v4.2h-8.4z"/>
<path fill="#00e696" d="M287.3 493.1h4.2v4.2h-4.2zM278.9 497.3h4.2v4.2h-4.2zM249.5 501.5h4.2v4.2h-4.2zM270.5 501.5h12.6v4.2h-12.6zM266.3 505.7h4.2v4.2h-4.2zM274.7 505.7h8.4v4.2h-8.4zM262.1 509.9h21v4.2h-21zM262.1 514.1h12.6v4.2h-12.6zM262.1 518.3h8.4v4.2h-8.4zM299.9 518.3h12.6v4.2h-12.6zM295.7 522.5h16.8v4.2h-16.8zM295.7 526.7h4.2v4.2h-4.2zM320.9 526.7h8.4v4.2h-8.4zM325.1 530.9h12.6v4.2h-12.6zM329.3 535.1h12.6v4.2h-12.6zM182.3 539.3h12.6v4.2h-12.6zM329.3 539.3h12.6v4.2h-12.6zM165.5 543.5h4.2v4.2h-4.2zM173.9 543.5h12.6v4.2h-12.6zM320.9 543.5h21v4.2h-21zM186.5 547.7h8.4v4.2h-8.4zM320.9 547.7h21v4.2h-21zM375.5 547.7h4.2v4.2h-4.2zM400.7 547.7h4.2v4.2h-4.2zM186.5 551.9h12.6v4.2h-12.6zM325.1 551.9h12.6v4.2h-12.6zM371.3 551.9h4.2v4.2h-4.2zM400.7 551.9h4.2v4.2h-4.2zM173.9 556.1h4.2v4.2h-4.2zM190.7 556.1h8.4v4.2h-8.4zM333.5 556.1h12.6v4.2h-12.6zM169.7 560.3h8.4v4.2h-8.4zM199.1 560.3h4.2v4.2h-4.2zM337.7 560.3h8.4v4.2h-8.4zM337.7 564.5h4.2v4.2h-4.2zM119.3 572.9h8.4v4.2h-8.4zM136.1 577.1h4.2v4.2h-4.2zM371.3 577.1h16.8v4.2h-16.8zM140.3 581.3h4.2v4.2h-4.2zM346.1 581.3h8.4v4.2h-8.4zM367.1 581.3h21v4.2h-21zM199.1 585.5h12.6v4.2h-12.6zM215.9 585.5h4.2v4.2h-4.2zM316.7 585.5h8.4v4.2h-8.4zM329.3 585.5h29.4v4.2h-29.4zM362.9 585.5h21v4.2h-21zM131.9 589.7h4.2v4.2h-4.2zM194.9 589.7h12.6v4.2h-12.6zM211.7 589.7h4.2v4.2h-4.2zM312.5 589.7h67.2v4.2h-67.2zM127.7 593.9h4.2v4.2h-4.2zM199.1 593.9h8.4v4.2h-8.4zM211.7 593.9h8.4v4.2h-8.4zM224.3 593.9h4.2v4.2h-4.2zM312.5 593.9h50.4v4.2h-50.4zM371.3 593.9h8.4v4.2h-8.4zM316.7 598.1h42v4.2h-42zM367.1 598.1h12.6v4.2h-12.6zM392.3 598.1h8.4v4.2h-8.4zM409.1 598.1h4.2v4.2h-4.2zM199.1 602.3h8.4v4.2h-8.4zM316.7 602.3h33.6v4.2h-33.6zM358.7 602.3h21v4.2h-21zM388.1 602.3h12.6v4.2h-12.6zM409.1 602.3h12.6v4.2h-12.6zM199.1 606.5h12.6v4.2h-12.6zM320.9 606.5h33.6v4.2h-33.6zM367.1 606.5h8.4v4.2h-8.4zM203.3 610.7h8.4v4.2h-8.4zM320.9 610.7h33.6v4.2h-33.6zM367.1 610.7h4.2v4.2h-4.2zM144.5 614.9h16.8v4.2h-16.8zM211.7 614.9h4.2v4.2h-4.2zM320.9 614.9h12.6v4.2h-12.6zM337.7 614.9h16.8v4.2h-16.8zM144.5 619.1h16.8v4.2h-16.8zM320.9 619.1h12.6v4.2h-12.6zM140.3 623.3h29.4v4.2h-29.4zM320.9 623.3h8.4v4.2h-8.4zM388.1 623.3h4.2v4.2h-4.2zM131.9 627.5h4.2v4.2h-4.2zM140.3 627.5h8.4v4.2h-8.4zM152.9 627.5h16.8v4.2h-16.8zM320.9 627.5h4.2v4.2h-4.2zM388.1 627.5h8.4v4.2h-8.4zM131.9 631.7h8.4v4.2h-8.4zM152.9 631.7h16.8v4.2h-16.8zM320.9 631.7h4.2v4.2h-4.2zM388.1 631.7h12.6v4.2h-12.6zM148.7 635.9h21v4.2h-21zM337.7 635.9h8.4v4.2h-8.4zM388.1 635.9h4.2v4.2h-4.2zM152.9 640.1h12.6v4.2h-12.6zM337.7 640.1h8.4v4.2h-8.4zM157.1 644.3h4.2v4.2h-4.2zM337.7 644.3h4.2v4.2h-4.2zM346.1 644.3h4.2v4.2h-4.2zM316.7 648.5h4.2v4.2h-4.2zM325.1 648.5h4.2v4.2h-4.2zM367.1 648.5h8.4v4.2h-8.4zM316.7 652.7h12.6v4.2h-12.6zM367.1 652.7h12.6v4.2h-12.6zM312.5 656.9h12.6v4.2h-12.6zM350.3 656.9h29.4v4.2h-29.4zM308.3 661.1h4.2v4.2h-4.2zM316.7 661.1h8.4v4.2h-8.4zM346.1 661.1h29.4v4.2h-29.4zM333.5 665.3h4.2v4.2h-4.2zM341.9 665.3h8.4v4.2h-8.4zM203.3 669.5h4.2v4.2h-4.2zM299.9 669.5h4.2v4.2h-4.2zM333.5 669.5h8.4v4.2h-8.4zM178.1 673.7h8.4v4.2h-8.4zM299.9 673.7h4.2v4.2h-4.2zM333.5 673.7h8.4v4.2h-8.4zM178.1 677.9h4.2v4.2h-4.2zM278.9 677.9h16.8v4.2h-16.8zM299.9 677.9h46.2v4.2h-46.2zM207.5 682.1h4.2v4.2h-4.2zM215.9 682.1h8.4v4.2h-8.4zM278.9 682.1h71.4v4.2h-71.4zM207.5 686.3h16.8v4.2h-16.8zM283.1 686.3h71.4v4.2h-71.4zM358.7 686.3h8.4v4.2h-8.4zM383.9 686.3h4.2v4.2h-4.2zM169.7 690.5h4.2v4.2h-4.2zM211.7 690.5h4.2v4.2h-4.2zM224.3 690.5h4.2v4.2h-4.2zM308.3 690.5h4.2v4.2h-4.2zM316.7 690.5h4.2v4.2h-4.2zM325.1 690.5h4.2v4.2h-4.2zM337.7 690.5h12.6v4.2h-12.6zM354.5 690.5h12.6v4.2h-12.6zM383.9 690.5h4.2v4.2h-4.2zM224.3 694.7h8.4v4.2h-8.4zM266.3 694.7h4.2v4.2h-4.2zM358.7 694.7h12.6v4.2h-12.6zM262.1 698.9h8.4v4.2h-8.4zM178.1 703.1h16.8v4.2h-16.8zM283.1 703.1h8.4v4.2h-8.4zM182.3 707.3h21v4.2h-21zM333.5 707.3h4.2v4.2h-4.2zM152.9 711.5h4.2v4.2h-4.2zM182.3 711.5h21v4.2h-21zM182.3 715.7h25.2v4.2h-25.2zM333.5 715.7h4.2v4.2h-4.2zM182.3 719.9h12.6v4.2h-12.6zM249.5 719.9h16.8v4.2h-16.8zM325.1 719.9h37.8v4.2h-37.8zM186.5 724.1h12.6v4.2h-12.6zM203.3 724.1h4.2v4.2h-4.2zM245.3 724.1h25.2v4.2h-25.2zM316.7 724.1h4.2v4.2h-4.2zM325.1 724.1h42v4.2h-42zM182.3 728.3h16.8v4.2h-16.8zM249.5 728.3h16.8v4.2h-16.8zM320.9 728.3h58.8v4.2h-58.8zM287.3 732.5h21v4.2h-21zM312.5 732.5h16.8v4.2h-16.8zM346.1 732.5h4.2v4.2h-4.2zM354.5 732.5h4.2v4.2h-4.2zM224.3 736.7h8.4v4.2h-8.4zM266.3 736.7h4.2v4.2h-4.2zM287.3 736.7h37.8v4.2h-37.8zM224.3 740.9h8.4v4.2h-8.4zM266.3 740.9h8.4v4.2h-8.4zM278.9 740.9h4.2v4.2h-4.2zM287.3 740.9h42v4.2h-42zM291.5 745.1h16.8v4.2h-16.8zM312.5 745.1h4.2v4.2h-4.2zM291.5 749.3h12.6v4.2h-12.6zM287.3 753.5h8.4v4.2h-8.4zM194.9 757.7h8.4v4.2h-8.4zM287.3 757.7h4.2v4.2h-4.2zM190.7 761.9h16.8v4.2h-16.8zM224.3 761.9h8.4v4.2h-8.4zM194.9 766.1h8.4v4.2h-8.4zM224.3 766.1h8.4v4.2h-8.4zM266.3 766.1h8.4v4.2h-8.4zM215.9 770.3h4.2v4.2h-4.2zM211.7 774.5h8.4v4.2h-8.4zM211.7 778.7h8.4v4.2h-8.4zM211.7 782.9h8.4v4.2h-8.4z"/>
<path fill="#c8c8c8" d="M249.5 463.7h12.6v4.2h-12.6zM249.5 467.9h12.6v4.2h-12.6zM253.7 472.1h4.2v4.2h-4.2zM278.9 497.3h4.2v4.2h-4.2zM274.7 501.5h8.4v4.2h-8.4zM266.3 505.7h16.8v4.2h-16.8zM262.1 509.9h16.8v4.2h-16.8zM262.1 514.1h12.6v4.2h-12.6zM266.3 518.3h4.2v4.2h-4.2zM329.3 530.9h8.4v4.2h-8.4zM329.3 535.1h8.4v4.2h-8.4zM140.3 539.3h8.4v4.2h-8.4zM325.1 539.3h16.8v4.2h-16.8zM136.1 543.5h12.6v4.2h-12.6zM325.1 543.5h16.8v4.2h-16.8zM136.1 547.7h12.6v4.2h-12.6zM165.5 547.7h4.2v4.2h-4.2zM325.1 547.7h16.8v4.2h-16.8zM161.3 551.9h12.6v4.2h-12.6zM333.5 551.9h4.2v4.2h-4.2zM152.9 556.1h4.2v4.2h-4.2zM165.5 556.1h4.2v4.2h-4.2zM388.1 568.7h4.2v4.2h-4.2zM375.5 572.9h16.8v4.2h-16.8zM375.5 577.1h16.8v4.2h-16.8zM367.1 581.3h21v4.2h-21zM316.7 585.5h4.2v4.2h-4.2zM350.3 585.5h8.4v4.2h-8.4zM362.9 585.5h4.2v4.2h-4.2zM371.3 585.5h12.6v4.2h-12.6zM312.5 589.7h21v4.2h-21zM346.1 589.7h16.8v4.2h-16.8zM367.1 589.7h12.6v4.2h-12.6zM312.5 593.9h50.4v4.2h-50.4zM316.7 598.1h42v4.2h-42zM131.9 602.3h8.4v4.2h-8.4zM320.9 602.3h29.4v4.2h-29.4zM358.7 602.3h4.2v4.2h-4.2zM367.1 602.3h4.2v4.2h-4.2zM320.9 606.5h4.2v4.2h-4.2zM329.3 606.5h29.4v4.2h-29.4zM144.5 610.7h8.4v4.2h-8.4zM320.9 610.7h8.4v4.2h-8.4zM337.7 610.7h21v4.2h-21zM140.3 614.9h16.8v4.2h-16.8zM320.9 614.9h8.4v4.2h-8.4zM346.1 614.9h8.4v4.2h-8.4zM362.9 614.9h16.8v4.2h-16.8zM144.5 619.1h16.8v4.2h-16.8zM320.9 619.1h8.4v4.2h-8.4zM346.1 619.1h33.6v4.2h-33.6zM144.5 623.3h21v4.2h-21zM320.9 623.3h8.4v4.2h-8.4zM350.3 623.3h21v4.2h-21zM375.5 623.3h4.2v4.2h-4.2zM140.3 627.5h8.4v4.2h-8.4zM152.9 627.5h12.6v4.2h-12.6zM320.9 627.5h8.4v4.2h-8.4zM425.9 627.5h8.4v4.2h-8.4zM152.9 631.7h12.6v4.2h-12.6zM320.9 631.7h8.4v4.2h-8.4zM425.9 631.7h8.4v4.2h-8.4zM148.7 635.9h16.8v4.2h-16.8zM325.1 635.9h4.2v4.2h-4.2zM341.9 635.9h4.2v4.2h-4.2zM425.9 635.9h8.4v4.2h-8.4zM157.1 640.1h4.2v4.2h-4.2zM341.9 640.1h8.4v4.2h-8.4zM425.9 640.1h8.4v4.2h-8.4zM341.9 644.3h8.4v4.2h-8.4zM320.9 652.7h8.4v4.2h-8.4zM312.5 656.9h21v4.2h-21zM354.5 656.9h8.4v4.2h-8.4zM308.3 661.1h4.2v4.2h-4.2zM316.7 661.1h8.4v4.2h-8.4zM341.9 661.1h8.4v4.2h-8.4zM362.9 661.1h4.2v4.2h-4.2zM308.3 665.3h4.2v4.2h-4.2zM333.5 665.3h4.2v4.2h-4.2zM341.9 665.3h8.4v4.2h-8.4zM354.5 665.3h4.2v4.2h-4.2zM371.3 665.3h4.2v4.2h-4.2zM299.9 669.5h4.2v4.2h-4.2zM329.3 669.5h21v4.2h-21zM362.9 669.5h4.2v4.2h-4.2zM178.1 673.7h8.4v4.2h-8.4zM299.9 673.7h4.2v4.2h-4.2zM312.5 673.7h4.2v4.2h-4.2zM329.3 673.7h37.8v4.2h-37.8zM278.9 677.9h84v4.2h-84zM291.5 682.1h71.4v4.2h-71.4zM295.7 686.3h4.2v4.2h-4.2zM312.5 686.3h50.4v4.2h-50.4zM169.7 690.5h12.6v4.2h-12.6zM320.9 690.5h8.4v4.2h-8.4zM337.7 690.5h21v4.2h-21zM404.9 690.5h8.4v4.2h-8.4zM169.7 694.7h12.6v4.2h-12.6zM346.1 694.7h37.8v4.2h-37.8zM169.7 698.9h8.4v4.2h-8.4zM346.1 698.9h33.6v4.2h-33.6zM182.3 703.1h8.4v4.2h-8.4zM341.9 703.1h16.8v4.2h-16.8zM182.3 707.3h16.8v4.2h-16.8zM350.3 707.3h4.2v4.2h-4.2zM182.3 711.5h16.8v4.2h-16.8zM350.3 711.5h4.2v4.2h-4.2zM131.9 715.7h4.2v4.2h-4.2zM186.5 715.7h16.8v4.2h-16.8zM131.9 719.9h8.4v4.2h-8.4zM182.3 719.9h16.8v4.2h-16.8zM249.5 719.9h12.6v4.2h-12.6zM346.1 719.9h8.4v4.2h-8.4zM131.9 724.1h8.4v4.2h-8.4zM161.3 724.1h4.2v4.2h-4.2zM182.3 724.1h12.6v4.2h-12.6zM249.5 724.1h12.6v4.2h-12.6zM161.3 728.3h8.4v4.2h-8.4zM249.5 728.3h12.6v4.2h-12.6zM161.3 732.5h4.2v4.2h-4.2zM165.5 749.3h4.2v4.2h-4.2zM169.7 753.5h4.2v4.2h-4.2zM165.5 757.7h8.4v4.2h-8.4zM165.5 761.9h8.4v4.2h-8.4z"/>
<path fill="#e6a028" d="M270.5 505.7h8.4v4.2h-8.4zM262.1 509.9h4.2v4.2h-4.2zM333.5 535.1h4.2v4.2h-4.2zM329.3 539.3h8.4v4.2h-8.4zM325.1 543.5h12.6v4.2h-12.6zM371.3 585.5h8.4v4.2h-8.4zM316.7 589.7h16.8v4.2h-16.8zM350.3 589.7h8.4v4.2h-8.4zM316.7 593.9h16.8v4.2h-16.8zM337.7 593.9h21v4.2h-21zM320.9 598.1h37.8v4.2h-37.8zM329.3 602.3h21v4.2h-21zM333.5 606.5h12.6v4.2h-12.6zM320.9 614.9h4.2v4.2h-4.2zM152.9 619.1h4.2v4.2h-4.2zM320.9 619.1h4.2v4.2h-4.2zM148.7 623.3h12.6v4.2h-12.6zM152.9 627.5h12.6v4.2h-12.6zM152.9 631.7h8.4v4.2h-8.4zM152.9 635.9h8.4v4.2h-8.4zM316.7 656.9h8.4v4.2h-8.4zM308.3 661.1h4.2v4.2h-4.2zM316.7 661.1h16.8v4.2h-16.8zM329.3 665.3h8.4v4.2h-8.4zM299.9 669.5h4.2v4.2h-4.2zM333.5 669.5h4.2v4.2h-4.2zM299.9 673.7h4.2v4.2h-4.2zM283.1 677.9h4.2v4.2h-4.2zM291.5 677.9h4.2v4.2h-4.2zM299.9 677.9h16.8v4.2h-16.8zM333.5 677.9h4.2v4.2h-4.2zM295.7 682.1h4.2v4.2h-4.2zM304.1 682.1h4.2v4.2h-4.2zM312.5 682.1h8.4v4.2h-8.4zM325.1 682.1h21v4.2h-21zM329.3 686.3h16.8v4.2h-16.8zM341.9 690.5h4.2v4.2h-4.2zM186.5 707.3h8.4v4.2h-8.4zM190.7 711.5h4.2v4.2h-4.2zM182.3 719.9h4.2v4.2h-4.2zM253.7 719.9h4.2v4.2h-4.2zM249.5 724.1h8.4v4.2h-8.4zM253.7 728.3h4.2v4.2h-4.2z"/>

<path fill="#00aadc" d="M247.4 564.5h2.1v2.1h-2.1zM283.1 564.5h4.2v2.1h-4.2zM243.2 566.6h8.4v2.1h-8.4zM281 566.6h4.2v2.1h-4.2zM243.2 568.7h4.2v2.1h-4.2zM281 568.7h4.2v2.1h-4.2zM245.3 570.8h6.3v2.1h-6.3zM281 570.8h4.2v2.1h-4.2zM245.3 572.9h6.3v2.1h-6.3zM281 572.9h4.2v2.1h-4.2zM239 575h4.2v2.1h-4.2zM245.3 575h4.2v2.1h-4.2zM239 577.1h4.2v2.1h-4.2zM264.2 577.1h6.3v2.1h-6.3zM241.1 579.2h4.2v2.1h-4.2zM264.2 579.2h6.3v2.1h-6.3zM289.4 579.2h4.2v2.1h-4.2zM295.7 579.2h2.1v2.1h-2.1zM241.1 581.3h4.2v2.1h-4.2zM262.1 581.3h8.4v2.1h-8.4zM289.4 581.3h2.1v2.1h-2.1zM295.7 581.3h4.2v2.1h-4.2zM236.9 583.4h2.1v2.1h-2.1zM243.2 583.4h4.2v2.1h-4.2zM262.1 583.4h8.4v2.1h-8.4zM295.7 583.4h2.1v2.1h-2.1zM234.8 585.5h6.3v2.1h-6.3zM245.3 585.5h2.1v2.1h-2.1zM262.1 585.5h10.5v2.1h-10.5zM239 587.6h4.2v2.1h-4.2zM245.3 587.6h4.2v2.1h-4.2zM262.1 587.6h4.2v2.1h-4.2zM268.4 587.6h4.2v2.1h-4.2zM226.4 589.7h4.2v2.1h-4.2zM241.1 589.7h2.1v2.1h-2.1zM247.4 589.7h2.1v2.1h-2.1zM264.2 589.7h2.1v2.1h-2.1zM270.5 589.7h2.1v2.1h-2.1zM287.3 589.7h4.2v2.1h-4.2zM213.8 591.8h2.1v2.1h-2.1zM228.5 591.8h4.2v2.1h-4.2zM241.1 591.8h2.1v2.1h-2.1zM249.5 591.8h2.1v2.1h-2.1zM272.6 591.8h2.1v2.1h-2.1zM213.8 593.9h6.3v2.1h-6.3zM226.4 593.9h2.1v2.1h-2.1zM230.6 593.9h2.1v2.1h-2.1zM236.9 593.9h2.1v2.1h-2.1zM249.5 593.9h2.1v2.1h-2.1zM255.8 593.9h2.1v2.1h-2.1zM270.5 593.9h4.2v2.1h-4.2zM285.2 593.9h4.2v2.1h-4.2zM291.5 593.9h2.1v2.1h-2.1zM215.9 596h6.3v2.1h-6.3zM239 596h2.1v2.1h-2.1zM251.6 596h2.1v2.1h-2.1zM255.8 596h2.1v2.1h-2.1zM260 596h4.2v2.1h-4.2zM270.5 596h6.3v2.1h-6.3zM289.4 596h4.2v2.1h-4.2zM218 598.1h4.2v2.1h-4.2zM241.1 598.1h2.1v2.1h-2.1zM249.5 598.1h2.1v2.1h-2.1zM257.9 598.1h2.1v2.1h-2.1zM262.1 598.1h2.1v2.1h-2.1zM270.5 598.1h6.3v2.1h-6.3zM289.4 598.1h2.1v2.1h-2.1zM251.6 600.2h4.2v2.1h-4.2zM257.9 600.2h2.1v2.1h-2.1zM262.1 600.2h4.2v2.1h-4.2zM270.5 600.2h4.2v2.1h-4.2zM278.9 600.2h4.2v2.1h-4.2zM287.3 600.2h2.1v2.1h-2.1zM306.2 600.2h2.1v2.1h-2.1zM213.8 602.3h6.3v2.1h-6.3zM222.2 602.3h4.2v2.1h-4.2zM243.2 602.3h2.1v2.1h-2.1zM249.5 602.3h8.4v2.1h-8.4zM262.1 602.3h2.1v2.1h-2.1zM270.5 602.3h4.2v2.1h-4.2zM278.9 602.3h2.1v2.1h-2.1zM285.2 602.3h2.1v2.1h-2.1zM295.7 602.3h2.1v2.1h-2.1zM213.8 604.4h4.2v2.1h-4.2zM222.2 604.4h8.4v2.1h-8.4zM243.2 604.4h4.2v2.1h-4.2zM249.5 604.4h12.6v2.1h-12.6zM270.5 604.4h8.4v2.1h-8.4zM287.3 604.4h2.1v2.1h-2.1zM295.7 604.4h2.1v2.1h-2.1zM222.2 606.5h2.1v2.1h-2.1zM226.4 606.5h8.4v2.1h-8.4zM247.4 606.5h2.1v2.1h-2.1zM253.7 606.5h12.6v2.1h-12.6zM270.5 606.5h8.4v2.1h-8.4zM285.2 606.5h2.1v2.1h-2.1zM291.5 606.5h6.3v2.1h-6.3zM226.4 608.6h2.1v2.1h-2.1zM232.7 608.6h10.5v2.1h-10.5zM249.5 608.6h2.1v2.1h-2.1zM253.7 608.6h12.6v2.1h-12.6zM272.6 608.6h8.4v2.1h-8.4zM283.1 608.6h4.2v2.1h-4.2zM291.5 608.6h4.2v2.1h-4.2zM207.5 610.7h2.1v2.1h-2.1zM236.9 610.7h2.1v2.1h-2.1zM241.1 610.7h2.1v2.1h-2.1zM249.5 610.7h4.2v2.1h-4.2zM255.8 610.7h4.2v2.1h-4.2zM281 610.7h4.2v2.1h-4.2zM289.4 610.7h2.1v2.1h-2.1zM293.6 610.7h2.1v2.1h-2.1zM207.5 612.8h10.5v2.1h-10.5zM234.8 612.8h2.1v2.1h-2.1zM241.1 612.8h4.2v2.1h-4.2zM249.5 612.8h6.3v2.1h-6.3zM283.1 612.8h2.1v2.1h-2.1zM287.3 612.8h4.2v2.1h-4.2zM295.7 612.8h4.2v2.1h-4.2zM209.6 614.9h14.7v2.1h-14.7zM230.6 614.9h2.1v2.1h-2.1zM234.8 614.9h2.1v2.1h-2.1zM239 614.9h2.1v2.1h-2.1zM245.3 614.9h4.2v2.1h-4.2zM251.6 614.9h4.2v2.1h-4.2zM287.3 614.9h2.1v2.1h-2.1zM291.5 614.9h4.2v2.1h-4.2zM209.6 617h2.1v2.1h-2.1zM220.1 617h2.1v2.1h-2.1zM230.6 617h2.1v2.1h-2.1zM236.9 617h10.5v2.1h-10.5zM249.5 617h4.2v2.1h-4.2zM287.3 617h4.2v2.1h-4.2zM297.8 617h2.1v2.1h-2.1zM308.3 617h4.2v2.1h-4.2zM241.1 619.1h8.4v2.1h-8.4zM287.3 619.1h6.3v2.1h-6.3zM299.9 619.1h8.4v2.1h-8.4zM220.1 621.2h8.4v2.1h-8.4zM234.8 621.2h2.1v2.1h-2.1zM239 621.2h14.7v2.1h-14.7zM287.3 621.2h2.1v2.1h-2.1zM291.5 621.2h4.2v2.1h-4.2zM312.5 621.2h2.1v2.1h-2.1zM220.1 623.3h10.5v2.1h-10.5zM249.5 623.3h4.2v2.1h-4.2zM287.3 623.3h2.1v2.1h-2.1zM297.8 623.3h4.2v2.1h-4.2zM304.1 623.3h10.5v2.1h-10.5zM222.2 625.4h21v2.1h-21zM249.5 625.4h2.1v2.1h-2.1zM289.4 625.4h16.8v2.1h-16.8zM215.9 627.5h8.4v2.1h-8.4zM226.4 627.5h2.1v2.1h-2.1zM245.3 627.5h4.2v2.1h-4.2zM297.8 627.5h2.1v2.1h-2.1zM215.9 629.6h4.2v2.1h-4.2zM228.5 629.6h16.8v2.1h-16.8zM251.6 629.6h2.1v2.1h-2.1zM287.3 629.6h8.4v2.1h-8.4zM228.5 631.7h12.6v2.1h-12.6zM243.2 631.7h6.3v2.1h-6.3zM251.6 631.7h2.1v2.1h-2.1zM291.5 631.7h6.3v2.1h-6.3zM302 631.7h4.2v2.1h-4.2zM308.3 631.7h4.2v2.1h-4.2zM220.1 633.8h12.6v2.1h-12.6zM239 633.8h2.1v2.1h-2.1zM247.4 633.8h2.1v2.1h-2.1zM251.6 633.8h2.1v2.1h-2.1zM287.3 633.8h8.4v2.1h-8.4zM297.8 633.8h8.4v2.1h-8.4zM308.3 633.8h6.3v2.1h-6.3zM220.1 635.9h10.5v2.1h-10.5zM241.1 635.9h2.1v2.1h-2.1zM245.3 635.9h4.2v2.1h-4.2zM253.7 635.9h2.1v2.1h-2.1zM285.2 635.9h12.6v2.1h-12.6zM299.9 635.9h8.4v2.1h-8.4zM211.7 638h14.7v2.1h-14.7zM249.5 638h6.3v2.1h-6.3zM285.2 638h14.7v2.1h-14.7zM306.2 638h4.2v2.1h-4.2zM211.7 640.1h6.3v2.1h-6.3zM241.1 640.1h4.2v2.1h-4.2zM247.4 640.1h6.3v2.1h-6.3zM287.3 640.1h12.6v2.1h-12.6zM306.2 640.1h6.3v2.1h-6.3zM230.6 642.2h4.2v2.1h-4.2zM236.9 642.2h2.1v2.1h-2.1zM243.2 642.2h10.5v2.1h-10.5zM255.8 642.2h4.2v2.1h-4.2zM278.9 642.2h6.3v2.1h-6.3zM291.5 642.2h2.1v2.1h-2.1zM299.9 642.2h4.2v2.1h-4.2zM310.4 642.2h8.4v2.1h-8.4zM226.4 644.3h12.6v2.1h-12.6zM247.4 644.3h4.2v2.1h-4.2zM253.7 644.3h2.1v2.1h-2.1zM264.2 644.3h2.1v2.1h-2.1zM272.6 644.3h2.1v2.1h-2.1zM276.8 644.3h10.5v2.1h-10.5zM295.7 644.3h2.1v2.1h-2.1zM302 644.3h2.1v2.1h-2.1zM314.6 644.3h4.2v2.1h-4.2zM222.2 646.4h12.6v2.1h-12.6zM243.2 646.4h2.1v2.1h-2.1zM251.6 646.4h4.2v2.1h-4.2zM257.9 646.4h2.1v2.1h-2.1zM262.1 646.4h4.2v2.1h-4.2zM268.4 646.4h2.1v2.1h-2.1zM272.6 646.4h2.1v2.1h-2.1zM278.9 646.4h2.1v2.1h-2.1zM285.2 646.4h4.2v2.1h-4.2zM291.5 646.4h2.1v2.1h-2.1zM297.8 646.4h6.3v2.1h-6.3zM222.2 648.5h8.4v2.1h-8.4zM241.1 648.5h6.3v2.1h-6.3zM251.6 648.5h2.1v2.1h-2.1zM257.9 648.5h4.2v2.1h-4.2zM264.2 648.5h2.1v2.1h-2.1zM268.4 648.5h2.1v2.1h-2.1zM272.6 648.5h2.1v2.1h-2.1zM278.9 648.5h4.2v2.1h-4.2zM287.3 648.5h4.2v2.1h-4.2zM293.6 648.5h4.2v2.1h-4.2zM299.9 648.5h4.2v2.1h-4.2zM224.3 650.6h2.1v2.1h-2.1zM236.9 650.6h4.2v2.1h-4.2zM243.2 650.6h2.1v2.1h-2.1zM249.5 650.6h4.2v2.1h-4.2zM257.9 650.6h2.1v2.1h-2.1zM262.1 650.6h4.2v2.1h-4.2zM268.4 650.6h2.1v2.1h-2.1zM287.3 650.6h6.3v2.1h-6.3zM295.7 650.6h2.1v2.1h-2.1zM304.1 650.6h4.2v2.1h-4.2zM234.8 652.7h4.2v2.1h-4.2zM251.6 652.7h2.1v2.1h-2.1zM255.8 652.7h4.2v2.1h-4.2zM262.1 652.7h2.1v2.1h-2.1zM268.4 652.7h2.1v2.1h-2.1zM272.6 652.7h2.1v2.1h-2.1zM283.1 652.7h2.1v2.1h-2.1zM289.4 652.7h6.3v2.1h-6.3zM230.6 654.8h6.3v2.1h-6.3zM243.2 654.8h4.2v2.1h-4.2zM249.5 654.8h2.1v2.1h-2.1zM255.8 654.8h2.1v2.1h-2.1zM262.1 654.8h2.1v2.1h-2.1zM283.1 654.8h2.1v2.1h-2.1zM293.6 654.8h2.1v2.1h-2.1zM297.8 654.8h2.1v2.1h-2.1zM230.6 656.9h2.1v2.1h-2.1zM241.1 656.9h4.2v2.1h-4.2zM247.4 656.9h4.2v2.1h-4.2zM253.7 656.9h2.1v2.1h-2.1zM260 656.9h2.1v2.1h-2.1zM272.6 656.9h2.1v2.1h-2.1zM285.2 656.9h2.1v2.1h-2.1zM239 659h4.2v2.1h-4.2zM247.4 659h2.1v2.1h-2.1zM251.6 659h4.2v2.1h-4.2zM285.2 659h4.2v2.1h-4.2zM291.5 659h2.1v2.1h-2.1zM239 661.1h2.1v2.1h-2.1zM245.3 661.1h4.2v2.1h-4.2zM287.3 661.1h2.1v2.1h-2.1zM291.5 661.1h4.2v2.1h-4.2zM241.1 663.2h6.3v2.1h-6.3zM287.3 663.2h8.4v2.1h-8.4zM239 665.3h6.3v2.1h-6.3zM249.5 665.3h2.1v2.1h-2.1zM262.1 665.3h4.2v2.1h-4.2zM289.4 665.3h8.4v2.1h-8.4zM241.1 667.4h4.2v2.1h-4.2zM249.5 667.4h2.1v2.1h-2.1zM289.4 667.4h2.1v2.1h-2.1zM293.6 667.4h6.3v2.1h-6.3zM253.7 669.5h2.1v2.1h-2.1zM270.5 669.5h2.1v2.1h-2.1zM291.5 669.5h8.4v2.1h-8.4zM251.6 671.6h4.2v2.1h-4.2zM257.9 671.6h2.1v2.1h-2.1zM270.5 671.6h2.1v2.1h-2.1zM291.5 671.6h2.1v2.1h-2.1zM295.7 671.6h4.2v2.1h-4.2zM236.9 673.7h2.1v2.1h-2.1zM251.6 673.7h4.2v2.1h-4.2zM260 673.7h2.1v2.1h-2.1zM264.2 673.7h4.2v2.1h-4.2zM270.5 673.7h2.1v2.1h-2.1zM295.7 673.7h4.2v2.1h-4.2zM302 673.7h2.1v2.1h-2.1zM234.8 675.8h4.2v2.1h-4.2zM251.6 675.8h2.1v2.1h-2.1zM257.9 675.8h2.1v2.1h-2.1zM249.5 677.9h4.2v2.1h-4.2zM264.2 677.9h2.1v2.1h-2.1zM295.7 677.9h2.1v2.1h-2.1zM249.5 680h4.2v2.1h-4.2zM264.2 680h2.1v2.1h-2.1zM249.5 682.1h2.1v2.1h-2.1zM264.2 682.1h2.1v2.1h-2.1zM276.8 682.1h4.2v2.1h-4.2zM295.7 682.1h6.3v2.1h-6.3zM247.4 684.2h4.2v2.1h-4.2zM264.2 684.2h2.1v2.1h-2.1zM293.6 684.2h2.1v2.1h-2.1zM297.8 684.2h4.2v2.1h-4.2zM247.4 686.3h4.2v2.1h-4.2zM262.1 686.3h4.2v2.1h-4.2zM247.4 688.4h2.1v2.1h-2.1zM262.1 688.4h4.2v2.1h-4.2zM262.1 690.5h4.2v2.1h-4.2z"/>
<path fill="#0a6ee6" d="M262.1 583.4h2.1v2.1h-2.1zM262.1 585.5h4.2v2.1h-4.2zM262.1 587.6h4.2v2.1h-4.2zM264.2 589.7h2.1v2.1h-2.1zM249.5 591.8h2.1v2.1h-2.1zM272.6 591.8h2.1v2.1h-2.1zM249.5 593.9h2.1v2.1h-2.1zM255.8 593.9h2.1v2.1h-2.1zM272.6 593.9h2.1v2.1h-2.1zM255.8 596h2.1v2.1h-2.1zM274.7 596h2.1v2.1h-2.1zM241.1 598.1h2.1v2.1h-2.1zM249.5 598.1h2.1v2.1h-2.1zM257.9 598.1h2.1v2.1h-2.1zM274.7 598.1h2.1v2.1h-2.1zM251.6 600.2h2.1v2.1h-2.1zM257.9 600.2h2.1v2.1h-2.1zM281 600.2h2.1v2.1h-2.1zM253.7 602.3h2.1v2.1h-2.1zM272.6 602.3h2.1v2.1h-2.1zM245.3 604.4h2.1v2.1h-2.1zM249.5 604.4h2.1v2.1h-2.1zM253.7 604.4h2.1v2.1h-2.1zM257.9 604.4h4.2v2.1h-4.2zM270.5 604.4h6.3v2.1h-6.3zM247.4 606.5h2.1v2.1h-2.1zM253.7 606.5h8.4v2.1h-8.4zM272.6 606.5h4.2v2.1h-4.2zM293.6 606.5h4.2v2.1h-4.2zM239 608.6h4.2v2.1h-4.2zM249.5 608.6h2.1v2.1h-2.1zM253.7 608.6h8.4v2.1h-8.4zM268.4 608.6h2.1v2.1h-2.1zM272.6 608.6h8.4v2.1h-8.4zM285.2 608.6h2.1v2.1h-2.1zM291.5 608.6h4.2v2.1h-4.2zM241.1 610.7h2.1v2.1h-2.1zM251.6 610.7h2.1v2.1h-2.1zM255.8 610.7h4.2v2.1h-4.2zM289.4 610.7h2.1v2.1h-2.1zM234.8 612.8h2.1v2.1h-2.1zM253.7 612.8h2.1v2.1h-2.1zM262.1 612.8h2.1v2.1h-2.1zM270.5 612.8h2.1v2.1h-2.1zM276.8 612.8h2.1v2.1h-2.1zM283.1 612.8h2.1v2.1h-2.1zM287.3 612.8h2.1v2.1h-2.1zM230.6 614.9h2.1v2.1h-2.1zM234.8 614.9h2.1v2.1h-2.1zM239 614.9h2.1v2.1h-2.1zM245.3 614.9h4.2v2.1h-4.2zM253.7 614.9h2.1v2.1h-2.1zM260 614.9h2.1v2.1h-2.1zM270.5 614.9h4.2v2.1h-4.2zM281 614.9h2.1v2.1h-2.1zM287.3 614.9h2.1v2.1h-2.1zM236.9 617h4.2v2.1h-4.2zM249.5 617h4.2v2.1h-4.2zM257.9 617h2.1v2.1h-2.1zM262.1 617h2.1v2.1h-2.1zM270.5 617h2.1v2.1h-2.1zM283.1 617h2.1v2.1h-2.1zM308.3 617h4.2v2.1h-4.2zM241.1 619.1h6.3v2.1h-6.3zM255.8 619.1h2.1v2.1h-2.1zM260 619.1h2.1v2.1h-2.1zM270.5 619.1h2.1v2.1h-2.1zM276.8 619.1h2.1v2.1h-2.1zM281 619.1h2.1v2.1h-2.1zM285.2 619.1h4.2v2.1h-4.2zM291.5 619.1h2.1v2.1h-2.1zM299.9 619.1h8.4v2.1h-8.4zM226.4 621.2h2.1v2.1h-2.1zM234.8 621.2h2.1v2.1h-2.1zM239 621.2h4.2v2.1h-4.2zM249.5 621.2h6.3v2.1h-6.3zM257.9 621.2h2.1v2.1h-2.1zM268.4 621.2h2.1v2.1h-2.1zM272.6 621.2h2.1v2.1h-2.1zM278.9 621.2h10.5v2.1h-10.5zM291.5 621.2h4.2v2.1h-4.2zM226.4 623.3h4.2v2.1h-4.2zM253.7 623.3h4.2v2.1h-4.2zM262.1 623.3h2.1v2.1h-2.1zM274.7 623.3h2.1v2.1h-2.1zM283.1 623.3h4.2v2.1h-4.2zM226.4 625.4h16.8v2.1h-16.8zM249.5 625.4h2.1v2.1h-2.1zM253.7 625.4h12.6v2.1h-12.6zM274.7 625.4h4.2v2.1h-4.2zM287.3 625.4h10.5v2.1h-10.5zM302 625.4h4.2v2.1h-4.2zM253.7 627.5h10.5v2.1h-10.5zM297.8 627.5h2.1v2.1h-2.1zM228.5 629.6h4.2v2.1h-4.2zM257.9 629.6h2.1v2.1h-2.1zM274.7 629.6h6.3v2.1h-6.3zM287.3 629.6h8.4v2.1h-8.4zM228.5 631.7h12.6v2.1h-12.6zM243.2 631.7h6.3v2.1h-6.3zM251.6 631.7h10.5v2.1h-10.5zM266.3 631.7h2.1v2.1h-2.1zM270.5 631.7h2.1v2.1h-2.1zM276.8 631.7h10.5v2.1h-10.5zM291.5 631.7h6.3v2.1h-6.3zM308.3 631.7h4.2v2.1h-4.2zM226.4 633.8h6.3v2.1h-6.3zM251.6 633.8h4.2v2.1h-4.2zM268.4 633.8h2.1v2.1h-2.1zM274.7 633.8h4.2v2.1h-4.2zM285.2 633.8h10.5v2.1h-10.5zM297.8 633.8h6.3v2.1h-6.3zM308.3 633.8h6.3v2.1h-6.3zM228.5 635.9h2.1v2.1h-2.1zM241.1 635.9h2.1v2.1h-2.1zM247.4 635.9h2.1v2.1h-2.1zM255.8 635.9h2.1v2.1h-2.1zM270.5 635.9h4.2v2.1h-4.2zM278.9 635.9h18.9v2.1h-18.9zM299.9 635.9h8.4v2.1h-8.4zM251.6 638h2.1v2.1h-2.1zM270.5 638h2.1v2.1h-2.1zM274.7 638h4.2v2.1h-4.2zM281 638h2.1v2.1h-2.1zM285.2 638h2.1v2.1h-2.1zM291.5 638h8.4v2.1h-8.4zM306.2 638h4.2v2.1h-4.2zM241.1 640.1h4.2v2.1h-4.2zM247.4 640.1h4.2v2.1h-4.2zM257.9 640.1h2.1v2.1h-2.1zM268.4 640.1h2.1v2.1h-2.1zM278.9 640.1h4.2v2.1h-4.2zM287.3 640.1h12.6v2.1h-12.6zM306.2 640.1h6.3v2.1h-6.3zM230.6 642.2h4.2v2.1h-4.2zM236.9 642.2h2.1v2.1h-2.1zM243.2 642.2h2.1v2.1h-2.1zM251.6 642.2h2.1v2.1h-2.1zM255.8 642.2h2.1v2.1h-2.1zM281 642.2h2.1v2.1h-2.1zM299.9 642.2h2.1v2.1h-2.1zM310.4 642.2h2.1v2.1h-2.1zM230.6 644.3h2.1v2.1h-2.1zM236.9 644.3h2.1v2.1h-2.1zM249.5 644.3h2.1v2.1h-2.1zM253.7 644.3h2.1v2.1h-2.1zM268.4 644.3h2.1v2.1h-2.1zM272.6 644.3h2.1v2.1h-2.1zM281 644.3h4.2v2.1h-4.2zM243.2 646.4h2.1v2.1h-2.1zM251.6 646.4h4.2v2.1h-4.2zM257.9 646.4h2.1v2.1h-2.1zM262.1 646.4h2.1v2.1h-2.1zM268.4 646.4h2.1v2.1h-2.1zM272.6 646.4h2.1v2.1h-2.1zM287.3 646.4h2.1v2.1h-2.1zM291.5 646.4h2.1v2.1h-2.1zM299.9 646.4h4.2v2.1h-4.2zM241.1 648.5h6.3v2.1h-6.3zM251.6 648.5h2.1v2.1h-2.1zM257.9 648.5h2.1v2.1h-2.1zM264.2 648.5h2.1v2.1h-2.1zM268.4 648.5h2.1v2.1h-2.1zM272.6 648.5h2.1v2.1h-2.1zM287.3 648.5h4.2v2.1h-4.2zM293.6 648.5h4.2v2.1h-4.2zM299.9 648.5h4.2v2.1h-4.2zM236.9 650.6h4.2v2.1h-4.2zM243.2 650.6h2.1v2.1h-2.1zM249.5 650.6h4.2v2.1h-4.2zM257.9 650.6h2.1v2.1h-2.1zM262.1 650.6h4.2v2.1h-4.2zM268.4 650.6h2.1v2.1h-2.1zM287.3 650.6h4.2v2.1h-4.2zM295.7 650.6h2.1v2.1h-2.1zM304.1 650.6h4.2v2.1h-4.2zM234.8 652.7h4.2v2.1h-4.2zM255.8 652.7h4.2v2.1h-4.2zM262.1 652.7h2.1v2.1h-2.1zM289.4 652.7h6.3v2.1h-6.3zM243.2 654.8h4.2v2.1h-4.2zM255.8 654.8h2.1v2.1h-2.1zM262.1 654.8h2.1v2.1h-2.1zM293.6 654.8h2.1v2.1h-2.1zM297.8 654.8h2.1v2.1h-2.1zM241.1 656.9h4.2v2.1h-4.2zM260 656.9h2.1v2.1h-2.1zM272.6 656.9h2.1v2.1h-2.1zM241.1 659h2.1v2.1h-2.1zM251.6 659h4.2v2.1h-4.2zM291.5 659h2.1v2.1h-2.1zM291.5 661.1h4.2v2.1h-4.2zM293.6 663.2h2.1v2.1h-2.1zM270.5 669.5h2.1v2.1h-2.1z"/>
<path fill="#1e3cdc" d="M253.7 602.3h2.1v2.1h-2.1zM249.5 604.4h2.1v2.1h-2.1zM253.7 604.4h2.1v2.1h-2.1zM247.4 606.5h6.3v2.1h-6.3zM255.8 606.5h4.2v2.1h-4.2zM251.6 608.6h8.4v2.1h-8.4zM251.6 610.7h4.2v2.1h-4.2zM257.9 610.7h4.2v2.1h-4.2zM245.3 612.8h4.2v2.1h-4.2zM253.7 612.8h4.2v2.1h-4.2zM247.4 614.9h2.1v2.1h-2.1zM253.7 614.9h4.2v2.1h-4.2zM260 614.9h2.1v2.1h-2.1zM247.4 617h6.3v2.1h-6.3zM257.9 617h2.1v2.1h-2.1zM262.1 617h2.1v2.1h-2.1zM241.1 619.1h6.3v2.1h-6.3zM251.6 619.1h6.3v2.1h-6.3zM260 619.1h2.1v2.1h-2.1zM241.1 621.2h2.1v2.1h-2.1zM249.5 621.2h4.2v2.1h-4.2zM257.9 621.2h2.1v2.1h-2.1zM241.1 623.3h4.2v2.1h-4.2zM253.7 623.3h4.2v2.1h-4.2zM247.4 625.4h2.1v2.1h-2.1zM251.6 625.4h2.1v2.1h-2.1zM255.8 625.4h6.3v2.1h-6.3zM241.1 627.5h2.1v2.1h-2.1zM249.5 627.5h4.2v2.1h-4.2zM255.8 627.5h8.4v2.1h-8.4zM257.9 629.6h4.2v2.1h-4.2zM241.1 631.7h2.1v2.1h-2.1zM249.5 631.7h8.4v2.1h-8.4zM262.1 631.7h2.1v2.1h-2.1zM241.1 633.8h6.3v2.1h-6.3zM251.6 633.8h4.2v2.1h-4.2zM257.9 633.8h2.1v2.1h-2.1zM266.3 633.8h2.1v2.1h-2.1zM247.4 635.9h2.1v2.1h-2.1zM255.8 635.9h2.1v2.1h-2.1zM262.1 635.9h2.1v2.1h-2.1zM270.5 635.9h2.1v2.1h-2.1zM243.2 638h2.1v2.1h-2.1zM251.6 638h2.1v2.1h-2.1zM255.8 638h4.2v2.1h-4.2zM270.5 638h2.1v2.1h-2.1zM247.4 640.1h4.2v2.1h-4.2zM253.7 640.1h4.2v2.1h-4.2zM251.6 642.2h6.3v2.1h-6.3zM268.4 642.2h2.1v2.1h-2.1zM251.6 644.3h6.3v2.1h-6.3zM268.4 644.3h2.1v2.1h-2.1zM247.4 646.4h8.4v2.1h-8.4zM257.9 646.4h2.1v2.1h-2.1zM268.4 646.4h2.1v2.1h-2.1zM272.6 646.4h2.1v2.1h-2.1zM268.4 648.5h2.1v2.1h-2.1zM272.6 648.5h2.1v2.1h-2.1zM257.9 650.6h2.1v2.1h-2.1zM264.2 650.6h2.1v2.1h-2.1zM268.4 650.6h2.1v2.1h-2.1zM272.6 650.6h2.1v2.1h-2.1zM255.8 652.7h2.1v2.1h-2.1zM266.3 652.7h2.1v2.1h-2.1zM262.1 654.8h2.1v2.1h-2.1zM266.3 654.8h2.1v2.1h-2.1z"/>
<path fill="#00e696" d="M243.2 566.6h4.2v2.1h-4.2zM243.2 568.7h2.1v2.1h-2.1zM245.3 570.8h4.2v2.1h-4.2zM239 575h4.2v2.1h-4.2zM239 577.1h4.2v2.1h-4.2zM295.7 579.2h2.1v2.1h-2.1zM243.2 581.3h2.1v2.1h-2.1zM295.7 581.3h4.2v2.1h-4.2zM243.2 583.4h2.1v2.1h-2.1zM295.7 583.4h2.1v2.1h-2.1zM234.8 585.5h2.1v2.1h-2.1zM262.1 585.5h4.2v2.1h-4.2zM262.1 587.6h4.2v2.1h-4.2zM226.4 589.7h4.2v2.1h-4.2zM228.5 591.8h4.2v2.1h-4.2zM218 593.9h2.1v2.1h-2.1zM226.4 593.9h2.1v2.1h-2.1zM230.6 593.9h2.1v2.1h-2.1zM218 596h4.2v2.1h-4.2zM218 598.1h4.2v2.1h-4.2zM222.2 602.3h4.2v2.1h-4.2zM211.7 612.8h6.3v2.1h-6.3zM211.7 614.9h6.3v2.1h-6.3zM220.1 614.9h4.2v2.1h-4.2zM230.6 614.9h2.1v2.1h-2.1zM220.1 617h2.1v2.1h-2.1zM228.5 623.3h2.1v2.1h-2.1zM224.3 625.4h2.1v2.1h-2.1zM228.5 625.4h2.1v2.1h-2.1zM228.5 629.6h2.1v2.1h-2.1zM228.5 631.7h6.3v2.1h-6.3zM308.3 631.7h4.2v2.1h-4.2zM222.2 633.8h10.5v2.1h-10.5zM308.3 633.8h6.3v2.1h-6.3zM220.1 635.9h4.2v2.1h-4.2zM226.4 635.9h4.2v2.1h-4.2zM306.2 635.9h2.1v2.1h-2.1zM215.9 638h10.5v2.1h-10.5zM306.2 638h4.2v2.1h-4.2zM215.9 640.1h2.1v2.1h-2.1zM306.2 640.1h6.3v2.1h-6.3zM310.4 642.2h8.4v2.1h-8.4zM226.4 644.3h6.3v2.1h-6.3zM314.6 644.3h2.1v2.1h-2.1zM222.2 646.4h6.3v2.1h-6.3zM222.2 648.5h2.1v2.1h-2.1zM236.9 650.6h4.2v2.1h-4.2zM304.1 650.6h4.2v2.1h-4.2zM234.8 652.7h4.2v2.1h-4.2zM230.6 654.8h6.3v2.1h-6.3zM243.2 654.8h4.2v2.1h-4.2zM297.8 654.8h2.1v2.1h-2.1zM230.6 656.9h2.1v2.1h-2.1zM241.1 656.9h4.2v2.1h-4.2zM239 659h4.2v2.1h-4.2zM239 661.1h2.1v2.1h-2.1zM262.1 686.3h4.2v2.1h-4.2zM247.4 688.4h2.1v2.1h-2.1z"/>
<path fill="#0b6e4f" d="M287.3 577.1h2.1v2.1h-2.1zM310.4 591.8h2.1v2.1h-2.1zM312.5 593.9h2.1v2.1h-2.1zM310.4 596h4.2v2.1h-4.2zM312.5 598.1h4.2v2.1h-4.2zM302 600.2h2.1v2.1h-2.1zM310.4 600.2h6.3v2.1h-6.3zM276.8 602.3h12.6v2.1h-12.6zM291.5 602.3h2.1v2.1h-2.1zM302 602.3h4.2v2.1h-4.2zM316.7 602.3h2.1v2.1h-2.1zM255.8 604.4h4.2v2.1h-4.2zM264.2 604.4h4.2v2.1h-4.2zM272.6 604.4h16.8v2.1h-16.8zM291.5 604.4h2.1v2.1h-2.1zM299.9 604.4h8.4v2.1h-8.4zM312.5 604.4h6.3v2.1h-6.3zM257.9 606.5h2.1v2.1h-2.1zM264.2 606.5h25.2v2.1h-25.2zM293.6 606.5h2.1v2.1h-2.1zM299.9 606.5h21v2.1h-21zM260 608.6h60.9v2.1h-60.9zM257.9 610.7h65.1v2.1h-65.1zM251.6 612.8h2.1v2.1h-2.1zM257.9 612.8h65.1v2.1h-65.1zM249.5 614.9h2.1v2.1h-2.1zM253.7 614.9h2.1v2.1h-2.1zM257.9 614.9h65.1v2.1h-65.1zM251.6 617h2.1v2.1h-2.1zM260 617h63v2.1h-63zM251.6 619.1h71.4v2.1h-71.4zM247.4 621.2h4.2v2.1h-4.2zM253.7 621.2h2.1v2.1h-2.1zM257.9 621.2h67.2v2.1h-67.2zM243.2 623.3h6.3v2.1h-6.3zM251.6 623.3h73.5v2.1h-73.5zM241.1 625.4h58.8v2.1h-58.8zM304.1 625.4h21v2.1h-21zM241.1 627.5h2.1v2.1h-2.1zM245.3 627.5h8.4v2.1h-8.4zM255.8 627.5h44.1v2.1h-44.1zM306.2 627.5h18.9v2.1h-18.9zM247.4 629.6h50.4v2.1h-50.4zM304.1 629.6h21v2.1h-21zM245.3 631.7h2.1v2.1h-2.1zM249.5 631.7h48.3v2.1h-48.3zM308.3 631.7h14.7v2.1h-14.7zM255.8 633.8h2.1v2.1h-2.1zM262.1 633.8h35.7v2.1h-35.7zM312.5 633.8h6.3v2.1h-6.3zM320.9 633.8h2.1v2.1h-2.1zM249.5 635.9h2.1v2.1h-2.1zM264.2 635.9h2.1v2.1h-2.1zM268.4 635.9h21v2.1h-21zM295.7 635.9h4.2v2.1h-4.2zM302 635.9h2.1v2.1h-2.1zM310.4 635.9h2.1v2.1h-2.1zM314.6 635.9h8.4v2.1h-8.4zM266.3 638h18.9v2.1h-18.9zM287.3 638h2.1v2.1h-2.1zM266.3 640.1h21v2.1h-21zM291.5 640.1h2.1v2.1h-2.1zM306.2 640.1h2.1v2.1h-2.1zM310.4 640.1h2.1v2.1h-2.1zM268.4 642.2h4.2v2.1h-4.2zM274.7 642.2h12.6v2.1h-12.6zM302 642.2h14.7v2.1h-14.7zM270.5 644.3h2.1v2.1h-2.1zM276.8 644.3h12.6v2.1h-12.6zM302 644.3h18.9v2.1h-18.9zM272.6 646.4h14.7v2.1h-14.7zM297.8 646.4h23.1v2.1h-23.1zM274.7 648.5h2.1v2.1h-2.1zM278.9 648.5h8.4v2.1h-8.4zM295.7 648.5h23.1v2.1h-23.1zM270.5 650.6h21v2.1h-21zM295.7 650.6h23.1v2.1h-23.1zM268.4 652.7h18.9v2.1h-18.9zM295.7 652.7h21v2.1h-21zM266.3 654.8h23.1v2.1h-23.1zM291.5 654.8h25.2v2.1h-25.2zM236.9 656.9h4.2v2.1h-4.2zM262.1 656.9h2.1v2.1h-2.1zM266.3 656.9h25.2v2.1h-25.2zM295.7 656.9h18.9v2.1h-18.9zM236.9 659h2.1v2.1h-2.1zM266.3 659h48.3v2.1h-48.3zM234.8 661.1h2.1v2.1h-2.1zM264.2 661.1h48.3v2.1h-48.3zM266.3 663.2h44.1v2.1h-44.1zM266.3 665.3h42v2.1h-42zM264.2 667.4h42v2.1h-42zM264.2 669.5h39.9v2.1h-39.9zM266.3 671.6h33.6v2.1h-33.6zM268.4 673.7h27.3v2.1h-27.3zM270.5 675.8h21v2.1h-21zM270.5 677.9h2.1v2.1h-2.1zM274.7 677.9h12.6v2.1h-12.6zM274.7 680h2.1v2.1h-2.1z"/>
<path fill="#00e696" d="M287.3 577.1h2.1v2.1h-2.1zM255.8 585.5h2.1v2.1h-2.1zM228.5 591.8h4.2v2.1h-4.2zM226.4 593.9h6.3v2.1h-6.3zM234.8 593.9h4.2v2.1h-4.2zM312.5 593.9h2.1v2.1h-2.1zM226.4 596h8.4v2.1h-8.4zM236.9 596h2.1v2.1h-2.1zM310.4 596h4.2v2.1h-4.2zM224.3 598.1h8.4v2.1h-8.4zM234.8 598.1h2.1v2.1h-2.1zM245.3 598.1h2.1v2.1h-2.1zM312.5 598.1h4.2v2.1h-4.2zM226.4 600.2h6.3v2.1h-6.3zM234.8 600.2h2.1v2.1h-2.1zM302 600.2h2.1v2.1h-2.1zM312.5 600.2h4.2v2.1h-4.2zM232.7 602.3h2.1v2.1h-2.1zM283.1 602.3h2.1v2.1h-2.1zM264.2 604.4h2.1v2.1h-2.1zM302 604.4h6.3v2.1h-6.3zM257.9 606.5h2.1v2.1h-2.1zM264.2 606.5h10.5v2.1h-10.5zM283.1 606.5h2.1v2.1h-2.1zM302 606.5h4.2v2.1h-4.2zM308.3 606.5h4.2v2.1h-4.2zM314.6 606.5h6.3v2.1h-6.3zM260 608.6h18.9v2.1h-18.9zM281 608.6h6.3v2.1h-6.3zM289.4 608.6h6.3v2.1h-6.3zM299.9 608.6h21v2.1h-21zM260 610.7h4.2v2.1h-4.2zM266.3 610.7h29.4v2.1h-29.4zM297.8 610.7h2.1v2.1h-2.1zM302 610.7h10.5v2.1h-10.5zM314.6 610.7h8.4v2.1h-8.4zM260 612.8h8.4v2.1h-8.4zM270.5 612.8h27.3v2.1h-27.3zM302 612.8h21v2.1h-21zM257.9 614.9h39.9v2.1h-39.9zM299.9 614.9h23.1v2.1h-23.1zM251.6 617h2.1v2.1h-2.1zM260 617h39.9v2.1h-39.9zM302 617h18.9v2.1h-18.9zM260 619.1h39.9v2.1h-39.9zM302 619.1h18.9v2.1h-18.9zM257.9 621.2h42v2.1h-42zM302 621.2h18.9v2.1h-18.9zM323 621.2h2.1v2.1h-2.1zM251.6 623.3h2.1v2.1h-2.1zM257.9 623.3h42v2.1h-42zM304.1 623.3h21v2.1h-21zM243.2 625.4h2.1v2.1h-2.1zM247.4 625.4h2.1v2.1h-2.1zM251.6 625.4h2.1v2.1h-2.1zM257.9 625.4h37.8v2.1h-37.8zM306.2 625.4h18.9v2.1h-18.9zM245.3 627.5h6.3v2.1h-6.3zM255.8 627.5h2.1v2.1h-2.1zM264.2 627.5h33.6v2.1h-33.6zM308.3 627.5h16.8v2.1h-16.8zM218 629.6h2.1v2.1h-2.1zM247.4 629.6h4.2v2.1h-4.2zM255.8 629.6h4.2v2.1h-4.2zM262.1 629.6h6.3v2.1h-6.3zM272.6 629.6h21v2.1h-21zM308.3 629.6h12.6v2.1h-12.6zM323 629.6h2.1v2.1h-2.1zM249.5 631.7h2.1v2.1h-2.1zM253.7 631.7h6.3v2.1h-6.3zM262.1 631.7h21v2.1h-21zM287.3 631.7h10.5v2.1h-10.5zM308.3 631.7h10.5v2.1h-10.5zM320.9 631.7h2.1v2.1h-2.1zM264.2 633.8h4.2v2.1h-4.2zM270.5 633.8h12.6v2.1h-12.6zM291.5 633.8h4.2v2.1h-4.2zM312.5 633.8h2.1v2.1h-2.1zM316.7 633.8h2.1v2.1h-2.1zM264.2 635.9h2.1v2.1h-2.1zM270.5 635.9h4.2v2.1h-4.2zM276.8 635.9h6.3v2.1h-6.3zM310.4 635.9h2.1v2.1h-2.1zM316.7 635.9h2.1v2.1h-2.1zM270.5 638h12.6v2.1h-12.6zM272.6 640.1h2.1v2.1h-2.1zM270.5 642.2h2.1v2.1h-2.1zM281 642.2h2.1v2.1h-2.1zM310.4 642.2h2.1v2.1h-2.1zM314.6 642.2h2.1v2.1h-2.1zM283.1 644.3h4.2v2.1h-4.2zM308.3 644.3h2.1v2.1h-2.1zM312.5 644.3h2.1v2.1h-2.1zM318.8 644.3h2.1v2.1h-2.1zM274.7 646.4h2.1v2.1h-2.1zM281 646.4h6.3v2.1h-6.3zM302 646.4h12.6v2.1h-12.6zM316.7 646.4h2.1v2.1h-2.1zM281 648.5h6.3v2.1h-6.3zM297.8 648.5h2.1v2.1h-2.1zM302 648.5h16.8v2.1h-16.8zM270.5 650.6h8.4v2.1h-8.4zM283.1 650.6h4.2v2.1h-4.2zM297.8 650.6h2.1v2.1h-2.1zM302 650.6h14.7v2.1h-14.7zM272.6 652.7h10.5v2.1h-10.5zM297.8 652.7h18.9v2.1h-18.9zM266.3 654.8h2.1v2.1h-2.1zM270.5 654.8h16.8v2.1h-16.8zM291.5 654.8h2.1v2.1h-2.1zM295.7 654.8h21v2.1h-21zM236.9 656.9h4.2v2.1h-4.2zM266.3 656.9h12.6v2.1h-12.6zM281 656.9h6.3v2.1h-6.3zM297.8 656.9h16.8v2.1h-16.8zM236.9 659h2.1v2.1h-2.1zM266.3 659h31.5v2.1h-31.5zM299.9 659h2.1v2.1h-2.1zM304.1 659h10.5v2.1h-10.5zM234.8 661.1h2.1v2.1h-2.1zM239 661.1h2.1v2.1h-2.1zM266.3 661.1h25.2v2.1h-25.2zM293.6 661.1h18.9v2.1h-18.9zM266.3 663.2h44.1v2.1h-44.1zM266.3 665.3h42v2.1h-42zM268.4 667.4h37.8v2.1h-37.8zM268.4 669.5h35.7v2.1h-35.7zM270.5 671.6h29.4v2.1h-29.4zM270.5 673.7h25.2v2.1h-25.2zM272.6 675.8h18.9v2.1h-18.9zM276.8 677.9h10.5v2.1h-10.5zM274.7 680h2.1v2.1h-2.1z"/>
<path fill="#c8c8c8" d="M287.3 577.1h2.1v2.1h-2.1zM312.5 593.9h2.1v2.1h-2.1zM310.4 596h4.2v2.1h-4.2zM312.5 598.1h4.2v2.1h-4.2zM310.4 600.2h6.3v2.1h-6.3zM302 604.4h4.2v2.1h-4.2zM302 606.5h4.2v2.1h-4.2zM316.7 606.5h4.2v2.1h-4.2zM268.4 608.6h2.1v2.1h-2.1zM272.6 608.6h2.1v2.1h-2.1zM289.4 608.6h6.3v2.1h-6.3zM299.9 608.6h2.1v2.1h-2.1zM304.1 608.6h6.3v2.1h-6.3zM316.7 608.6h4.2v2.1h-4.2zM266.3 610.7h10.5v2.1h-10.5zM278.9 610.7h16.8v2.1h-16.8zM297.8 610.7h2.1v2.1h-2.1zM302 610.7h10.5v2.1h-10.5zM314.6 610.7h8.4v2.1h-8.4zM264.2 612.8h4.2v2.1h-4.2zM272.6 612.8h12.6v2.1h-12.6zM287.3 612.8h10.5v2.1h-10.5zM304.1 612.8h18.9v2.1h-18.9zM262.1 614.9h4.2v2.1h-4.2zM268.4 614.9h29.4v2.1h-29.4zM302 614.9h2.1v2.1h-2.1zM308.3 614.9h14.7v2.1h-14.7zM251.6 617h2.1v2.1h-2.1zM260 617h4.2v2.1h-4.2zM266.3 617h31.5v2.1h-31.5zM302 617h18.9v2.1h-18.9zM260 619.1h2.1v2.1h-2.1zM264.2 619.1h35.7v2.1h-35.7zM304.1 619.1h16.8v2.1h-16.8zM257.9 621.2h42v2.1h-42zM304.1 621.2h16.8v2.1h-16.8zM260 623.3h37.8v2.1h-37.8zM304.1 623.3h21v2.1h-21zM257.9 625.4h2.1v2.1h-2.1zM264.2 625.4h31.5v2.1h-31.5zM308.3 625.4h16.8v2.1h-16.8zM249.5 627.5h2.1v2.1h-2.1zM264.2 627.5h4.2v2.1h-4.2zM270.5 627.5h23.1v2.1h-23.1zM295.7 627.5h2.1v2.1h-2.1zM308.3 627.5h16.8v2.1h-16.8zM255.8 629.6h2.1v2.1h-2.1zM262.1 629.6h6.3v2.1h-6.3zM272.6 629.6h10.5v2.1h-10.5zM285.2 629.6h6.3v2.1h-6.3zM310.4 629.6h8.4v2.1h-8.4zM323 629.6h2.1v2.1h-2.1zM262.1 631.7h21v2.1h-21zM287.3 631.7h8.4v2.1h-8.4zM308.3 631.7h4.2v2.1h-4.2zM314.6 631.7h2.1v2.1h-2.1zM320.9 631.7h2.1v2.1h-2.1zM264.2 633.8h4.2v2.1h-4.2zM270.5 633.8h12.6v2.1h-12.6zM312.5 633.8h2.1v2.1h-2.1zM270.5 635.9h2.1v2.1h-2.1zM276.8 635.9h4.2v2.1h-4.2zM272.6 638h2.1v2.1h-2.1zM278.9 638h2.1v2.1h-2.1zM283.1 644.3h2.1v2.1h-2.1zM308.3 644.3h2.1v2.1h-2.1zM302 646.4h8.4v2.1h-8.4zM281 648.5h4.2v2.1h-4.2zM302 648.5h12.6v2.1h-12.6zM316.7 648.5h2.1v2.1h-2.1zM272.6 650.6h4.2v2.1h-4.2zM283.1 650.6h2.1v2.1h-2.1zM297.8 650.6h2.1v2.1h-2.1zM302 650.6h14.7v2.1h-14.7zM272.6 652.7h2.1v2.1h-2.1zM281 652.7h2.1v2.1h-2.1zM297.8 652.7h18.9v2.1h-18.9zM270.5 654.8h10.5v2.1h-10.5zM283.1 654.8h4.2v2.1h-4.2zM291.5 654.8h2.1v2.1h-2.1zM295.7 654.8h21v2.1h-21zM236.9 656.9h4.2v2.1h-4.2zM266.3 656.9h12.6v2.1h-12.6zM281 656.9h6.3v2.1h-6.3zM297.8 656.9h2.1v2.1h-2.1zM302 656.9h12.6v2.1h-12.6zM236.9 659h2.1v2.1h-2.1zM266.3 659h23.1v2.1h-23.1zM291.5 659h6.3v2.1h-6.3zM299.9 659h2.1v2.1h-2.1zM304.1 659h10.5v2.1h-10.5zM268.4 661.1h23.1v2.1h-23.1zM293.6 661.1h18.9v2.1h-18.9zM268.4 663.2h14.7v2.1h-14.7zM285.2 663.2h25.2v2.1h-25.2zM266.3 665.3h42v2.1h-42zM268.4 667.4h37.8v2.1h-37.8zM268.4 669.5h35.7v2.1h-35.7zM270.5 671.6h2.1v2.1h-2.1zM274.7 671.6h25.2v2.1h-25.2zM272.6 673.7h2.1v2.1h-2.1zM276.8 673.7h18.9v2.1h-18.9zM274.7 675.8h16.8v2.1h-16.8zM278.9 677.9h2.1v2.1h-2.1zM283.1 677.9h2.1v2.1h-2.1z"/>
<path fill="#e6a028" d="M318.8 606.5h2.1v2.1h-2.1zM318.8 608.6h2.1v2.1h-2.1zM308.3 610.7h2.1v2.1h-2.1zM316.7 610.7h4.2v2.1h-4.2zM278.9 612.8h6.3v2.1h-6.3zM287.3 612.8h2.1v2.1h-2.1zM291.5 612.8h4.2v2.1h-4.2zM308.3 612.8h6.3v2.1h-6.3zM316.7 612.8h6.3v2.1h-6.3zM270.5 614.9h2.1v2.1h-2.1zM274.7 614.9h21v2.1h-21zM308.3 614.9h14.7v2.1h-14.7zM266.3 617h2.1v2.1h-2.1zM270.5 617h25.2v2.1h-25.2zM308.3 617h12.6v2.1h-12.6zM264.2 619.1h33.6v2.1h-33.6zM304.1 619.1h16.8v2.1h-16.8zM260 621.2h2.1v2.1h-2.1zM264.2 621.2h33.6v2.1h-33.6zM306.2 621.2h14.7v2.1h-14.7zM260 623.3h35.7v2.1h-35.7zM308.3 623.3h16.8v2.1h-16.8zM264.2 625.4h31.5v2.1h-31.5zM308.3 625.4h14.7v2.1h-14.7zM264.2 627.5h4.2v2.1h-4.2zM270.5 627.5h12.6v2.1h-12.6zM285.2 627.5h2.1v2.1h-2.1zM289.4 627.5h4.2v2.1h-4.2zM308.3 627.5h16.8v2.1h-16.8zM264.2 629.6h4.2v2.1h-4.2zM272.6 629.6h8.4v2.1h-8.4zM289.4 629.6h2.1v2.1h-2.1zM312.5 629.6h4.2v2.1h-4.2zM264.2 631.7h2.1v2.1h-2.1zM272.6 631.7h2.1v2.1h-2.1zM276.8 631.7h6.3v2.1h-6.3zM272.6 633.8h2.1v2.1h-2.1zM276.8 633.8h6.3v2.1h-6.3zM306.2 648.5h4.2v2.1h-4.2zM283.1 650.6h2.1v2.1h-2.1zM302 650.6h12.6v2.1h-12.6zM299.9 652.7h16.8v2.1h-16.8zM270.5 654.8h8.4v2.1h-8.4zM302 654.8h14.7v2.1h-14.7zM268.4 656.9h10.5v2.1h-10.5zM306.2 656.9h8.4v2.1h-8.4zM236.9 659h2.1v2.1h-2.1zM270.5 659h8.4v2.1h-8.4zM285.2 659h2.1v2.1h-2.1zM293.6 659h4.2v2.1h-4.2zM306.2 659h8.4v2.1h-8.4zM268.4 661.1h6.3v2.1h-6.3zM276.8 661.1h2.1v2.1h-2.1zM281 661.1h8.4v2.1h-8.4zM295.7 661.1h6.3v2.1h-6.3zM304.1 661.1h8.4v2.1h-8.4zM268.4 663.2h14.7v2.1h-14.7zM285.2 663.2h25.2v2.1h-25.2zM268.4 665.3h39.9v2.1h-39.9zM268.4 667.4h37.8v2.1h-37.8zM268.4 669.5h8.4v2.1h-8.4zM281 669.5h23.1v2.1h-23.1zM270.5 671.6h2.1v2.1h-2.1zM276.8 671.6h2.1v2.1h-2.1zM281 671.6h18.9v2.1h-18.9zM281 673.7h10.5v2.1h-10.5zM293.6 673.7h2.1v2.1h-2.1zM287.3 675.8h4.2v2.1h-4.2z"/>
<path fill="#fad714" d="M312.5 614.9h4.2v2.1h-4.2zM310.4 617h8.4v2.1h-8.4zM310.4 619.1h8.4v2.1h-8.4zM312.5 621.2h2.1v2.1h-2.1zM306.2 648.5h2.1v2.1h-2.1zM304.1 650.6h10.5v2.1h-10.5zM302 652.7h14.7v2.1h-14.7zM304.1 654.8h12.6v2.1h-12.6zM310.4 656.9h4.2v2.1h-4.2zM308.3 659h6.3v2.1h-6.3z"/>
<defs><clipPath id="rc"><rect x="54" y="458" width="434" height="337"/></clipPath></defs><g clip-path="url(#rc)" fill="none" stroke="#fff" stroke-width="1"><circle cx="270.5" cy="627.5" r="28"/><circle cx="270.5" cy="627.5" r="56"/><circle cx="270.5" cy="627.5" r="84"/><circle cx="270.5" cy="627.5" r="112"/><circle cx="270.5" cy="627.5" r="140"/><circle cx="270.5" cy="627.5" r="168"/><circle cx="270.5" cy="627.5" r="196"/><circle cx="270.5" cy="627.5" r="224"/><line x1="112.1" y1="469.1" x2="428.9" y2="785.9" stroke="#fff" stroke-width="1"/><line x1="112.1" y1="785.9" x2="428.9" y2="469.1" stroke="#fff" stroke-width="1"/><line x1="54" y1="627.5" x2="488" y2="627.5" stroke="#fff" stroke-width="1"/><line x1="270.5" y1="458" x2="270.5" y2="795" stroke="#fff" stroke-width="1"/></g><line x1="290" y1="647" x2="322" y2="677" stroke="#fff" stroke-width="3"/><line x1="269.7" y1="628.4" x2="245.8" y2="719" stroke="#ff0000" stroke-width="3"/><circle cx="214.4" cy="550.3" r="7" fill="none" stroke="#e69a1e" stroke-width="1"/><circle cx="243.5" cy="703" r="7" fill="none" stroke="#e69a1e" stroke-width="1"/><text x="214.5" y="565.5" font-size="5" fill="#e69a1e" font-family="Liberation Sans, sans-serif" font-weight="bold" text-anchor="middle" xml:space="preserve">sto-met</text><text x="244" y="718.5" font-size="5" fill="#e69a1e" font-family="Liberation Sans, sans-serif" font-weight="bold" text-anchor="middle" xml:space="preserve">bo-125-5</text><line x1="244.4" y1="544" x2="244.4" y2="555" stroke="#f0e68c" stroke-width="1"/><line x1="239" y1="549.4" x2="250" y2="549.4" stroke="#f0e68c" stroke-width="1"/><line x1="241" y1="557.5" x2="247" y2="557.5" stroke="#00aadc" stroke-width="1"/><text x="43" y="549.5" font-size="5" fill="#f0e68c" font-family="Liberation Sans, sans-serif" text-anchor="middle" xml:space="preserve">10</text><text x="243.5" y="807" font-size="5" fill="#f0e68c" font-family="Liberation Sans, sans-serif" text-anchor="middle" xml:space="preserve">-125</text><line x1="264" y1="628" x2="276" y2="628" stroke="#ff0000" stroke-width="1.2"/>
<text transform="translate(15.8,448) scale(0.9573,1)" font-size="25" fill="#ffff00" font-family="Liberation Sans, sans-serif" xml:space="preserve">24<tspan dx="2">-</tspan><tspan dx="2">a</tspan>ug<tspan dx="2">-</tspan><tspan dx="2">1</tspan>997,04:05:00</text>
<text x="274" y="448" font-size="24.5" fill="#fff" font-family="Liberation Sans, sans-serif" textLength="256" lengthAdjust="spacingAndGlyphs" xml:space="preserve">maxdz plot.  maxdz plot.</text>
<text x="15.8" y="479" font-size="24.5" fill="#fff" font-family="Liberation Sans, sans-serif" textLength="155" lengthAdjust="spacingAndGlyphs" xml:space="preserve">rhb_met track.</text>
<line x1="488" y1="458.5" x2="573" y2="458.5" stroke="#aaa" stroke-width="1"/>
<text x="490" y="470.5" font-size="17.5" fill="#fff" font-family="Liberation Sans, sans-serif" textLength="51" lengthAdjust="spacingAndGlyphs" xml:space="preserve">maxdz</text>
<rect x="490.2" y="485" width="9.7" height="7.2" fill="#ff8080"/>
<rect x="490.2" y="492" width="9.7" height="7.2" fill="#ff8c94"/>
<rect x="490.2" y="499" width="9.7" height="7.2" fill="#ffaa5a"/>
<rect x="490.2" y="506" width="9.7" height="7.2" fill="#ffd7af"/>
<rect x="490.2" y="513" width="9.7" height="7.2" fill="#fad714"/>
<rect x="490.2" y="520" width="9.7" height="7.2" fill="#eeb422"/>
<rect x="490.2" y="526.9" width="9.7" height="7.2" fill="#da9632"/>
<rect x="490.2" y="533.9" width="9.7" height="7.2" fill="#c8c8c8"/>
<rect x="490.2" y="540.9" width="9.7" height="7.2" fill="#00704a"/>
<rect x="490.2" y="547.9" width="9.7" height="7.2" fill="#00e696"/>
<rect x="490.2" y="554.9" width="9.7" height="7.2" fill="#00b4e6"/>
<rect x="490.2" y="561.9" width="9.7" height="7.2" fill="#0a6ee6"/>
<rect x="490.2" y="568.9" width="9.7" height="7.2" fill="#1e3cdc"/>
<rect x="490.2" y="575.9" width="9.7" height="7.2" fill="#3c1edc"/>
<rect x="490.2" y="582.9" width="9.7" height="7.2" fill="#6e00f0"/>
<rect x="490.2" y="589.9" width="9.7" height="7.2" fill="#8c00ff"/>
<text x="505.8" y="492.3" font-size="17.6" fill="#fff" font-family="Liberation Sans, sans-serif" textLength="34.2" lengthAdjust="spacingAndGlyphs" xml:space="preserve">65.0</text>
<text x="505.8" y="520.2" font-size="17.6" fill="#fff" font-family="Liberation Sans, sans-serif" textLength="34.2" lengthAdjust="spacingAndGlyphs" xml:space="preserve">45.0</text>
<text x="505.8" y="548.1" font-size="17.6" fill="#fff" font-family="Liberation Sans, sans-serif" textLength="34.2" lengthAdjust="spacingAndGlyphs" xml:space="preserve">25.0</text>
<text x="505.8" y="576" font-size="17.6" fill="#fff" font-family="Liberation Sans, sans-serif" textLength="24.5" lengthAdjust="spacingAndGlyphs" xml:space="preserve">5.0</text>
<text x="505.8" y="603.9" font-size="17.6" fill="#fff" font-family="Liberation Sans, sans-serif" textLength="45.2" lengthAdjust="spacingAndGlyphs" xml:space="preserve">-15.0</text>
<line x1="488" y1="626.8" x2="573" y2="626.8" stroke="#aaa" stroke-width="1"/>
<text x="490" y="638.8" font-size="17.5" fill="#fff" font-family="Liberation Sans, sans-serif" textLength="51" lengthAdjust="spacingAndGlyphs" xml:space="preserve">maxdz</text>
<rect x="490.2" y="653.3" width="9.7" height="7.2" fill="#ff8080"/>
<rect x="490.2" y="660.3" width="9.7" height="7.2" fill="#ff8c94"/>
<rect x="490.2" y="667.3" width="9.7" height="7.2" fill="#ffaa5a"/>
<rect x="490.2" y="674.3" width="9.7" height="7.2" fill="#ffd7af"/>
<rect x="490.2" y="681.3" width="9.7" height="7.2" fill="#fad714"/>
<rect x="490.2" y="688.2" width="9.7" height="7.2" fill="#eeb422"/>
<rect x="490.2" y="695.2" width="9.7" height="7.2" fill="#da9632"/>
<rect x="490.2" y="702.2" width="9.7" height="7.2" fill="#c8c8c8"/>
<rect x="490.2" y="709.2" width="9.7" height="7.2" fill="#00704a"/>
<rect x="490.2" y="716.2" width="9.7" height="7.2" fill="#00e696"/>
<rect x="490.2" y="723.2" width="9.7" height="7.2" fill="#00b4e6"/>
<rect x="490.2" y="730.2" width="9.7" height="7.2" fill="#0a6ee6"/>
<rect x="490.2" y="737.2" width="9.7" height="7.2" fill="#1e3cdc"/>
<rect x="490.2" y="744.2" width="9.7" height="7.2" fill="#3c1edc"/>
<rect x="490.2" y="751.2" width="9.7" height="7.2" fill="#6e00f0"/>
<rect x="490.2" y="758.2" width="9.7" height="7.2" fill="#8c00ff"/>
<text x="505.8" y="660.6" font-size="17.6" fill="#fff" font-family="Liberation Sans, sans-serif" textLength="34.2" lengthAdjust="spacingAndGlyphs" xml:space="preserve">65.0</text>
<text x="505.8" y="688.5" font-size="17.6" fill="#fff" font-family="Liberation Sans, sans-serif" textLength="34.2" lengthAdjust="spacingAndGlyphs" xml:space="preserve">45.0</text>
<text x="505.8" y="716.4" font-size="17.6" fill="#fff" font-family="Liberation Sans, sans-serif" textLength="34.2" lengthAdjust="spacingAndGlyphs" xml:space="preserve">25.0</text>
<text x="505.8" y="744.3" font-size="17.6" fill="#fff" font-family="Liberation Sans, sans-serif" textLength="24.5" lengthAdjust="spacingAndGlyphs" xml:space="preserve">5.0</text>
<text x="505.8" y="772.2" font-size="17.6" fill="#fff" font-family="Liberation Sans, sans-serif" textLength="45.2" lengthAdjust="spacingAndGlyphs" xml:space="preserve">-15.0</text>
<line x1="488" y1="794.5" x2="573" y2="794.5" stroke="#aaa" stroke-width="1"/><line x1="488" y1="819.5" x2="573" y2="819.5" stroke="#aaa" stroke-width="1"/>
<text x="489.5" y="807.5" font-size="10.5" fill="#ff0000" font-family="Liberation Sans, sans-serif" xml:space="preserve">rhb_met</text>
<text x="381" y="860" font-size="24.5" fill="#fff" font-family="Liberation Sans, sans-serif" textLength="181" lengthAdjust="spacingAndGlyphs" xml:space="preserve">Alt: 0.50 km MSL</text>
<rect x="10.5" y="821.5" width="45" height="47" fill="#191970" stroke="#808080" stroke-width="1"/><g transform="translate(10,821)"><path d="M7.2 11.8C7.9 11.2 9.6 8.8 11.2 7.9C12.8 7.1 14.4 6.3 16.9 6.7C19.3 7.1 23.6 9.5 25.9 10.2C28.2 10.9 28.8 11.3 30.7 11C32.6 10.7 36.5 8.9 37.6 8.5" fill="none" stroke="#ffff00" stroke-width="2.0" stroke-linecap="round"/><path d="M37.6 8.9C36.9 9.8 35.3 12.8 33.2 14.6C31.1 16.4 27.6 17.9 25 19.9C22.4 21.9 20 24.1 17.7 26.4C15.4 28.7 13.1 31.5 11.2 33.7C9.3 35.9 7.1 38.5 6.3 39.4" fill="none" stroke="#ffff00" stroke-width="1.6" stroke-linecap="round"/><path d="M6.3 39.4C7.1 38.9 9 36.8 11.2 36.2C13.4 35.6 16.6 35.3 19.3 35.8C22 36.3 25.2 38.7 27.5 39.4C29.8 40.1 31.3 40.5 33.2 39.8C35.1 39.1 38 36.1 38.9 35.4" fill="none" stroke="#ffff00" stroke-width="2.0" stroke-linecap="round"/></g><rect x="57.5" y="821.5" width="45" height="47" fill="#696969" stroke="#8c8c8c" stroke-width="1"/><g transform="translate(57,821)"><text x="2.6" y="14.8" font-size="14.5" fill="#dcdcdc" font-family="Liberation Sans, sans-serif" font-weight="bold" textLength="30.5" lengthAdjust="spacingAndGlyphs" xml:space="preserve">GOES</text><clipPath id="gc57821"><rect x="2.5" y="17" width="22" height="27"/></clipPath><g clip-path="url(#gc57821)"><circle cx="6" cy="35" r="17.5" fill="url(#dg)"/><circle cx="7" cy="41" r="4.5" fill="#dcdcdc"/><circle cx="16.5" cy="27.5" r="3.6" fill="#dcdcdc"/><circle cx="6" cy="22" r="2.2" fill="#dcdcdc"/></g><path d="M23 24.5L40 21.5M24.5 31.5L40 22" stroke="#dcdcdc" stroke-width="1" stroke-dasharray="1 1.4" fill="none"/><path d="M40.8 18.2L43.4 21L40.8 23.8L38.2 21Z" fill="#dcdcdc"/><text x="25.5" y="42.5" font-size="9.5" fill="#dcdcdc" font-family="Liberation Sans, sans-serif" textLength="13.5" lengthAdjust="spacingAndGlyphs" xml:space="preserve">.IR</text><rect x="20" y="17.5" width="0.9" height="0.9" fill="#dcdcdc"/><rect x="30" y="21" width="0.9" height="0.9" fill="#dcdcdc"/><rect x="38" y="30" width="0.9" height="0.9" fill="#dcdcdc"/><rect x="33" y="33" width="0.9" height="0.9" fill="#dcdcdc"/><rect x="28" y="38" width="0.9" height="0.9" fill="#dcdcdc"/><rect x="24" y="43" width="0.9" height="0.9" fill="#dcdcdc"/></g><rect x="104.5" y="821.5" width="45" height="47" fill="#191970" stroke="#808080" stroke-width="1"/><g transform="translate(104,821)"><path d="M4.8 9.4Q9 27.5 27 31.2" fill="none" stroke="#ffff00" stroke-width="1.8" stroke-linecap="round"/><path d="M12.5 21L15 24L15.8 39.4H8.6L11 29Z" fill="#ffff00"/><rect x="12.2" y="20.3" width="4.2" height="4.2" fill="none" stroke="#ffff00" stroke-width="0.8"/><text x="35.6" y="5" font-size="12.5" fill="#ffff00" font-family="Liberation Sans, sans-serif" style="writing-mode:vertical-rl;text-orientation:upright;letter-spacing:-2.1px">SUR</text></g><rect x="151.5" y="821.5" width="45" height="47" fill="#191970" stroke="#808080" stroke-width="1"/><g transform="translate(151,821)"><g fill="none" stroke="#ffff00" stroke-width="1.3"><rect x="5.2" y="5.4" width="35" height="36"/><path d="M13.9 5.4v36M5.2 14.4h35"/><path d="M22.7 5.4v36M5.2 23.4h35"/><path d="M31.4 5.4v36M5.2 32.4h35"/></g><path d="M12 8Q16 26 33 30.5" fill="none" stroke="#ffff00" stroke-width="1.8"/><path d="M19 22L21.5 25L22.5 41H15L17.5 30Z" fill="#ffff00"/></g><rect x="198.7" y="821.5" width="12.5" height="47" fill="#191970" stroke="#808080" stroke-width="1"/><g transform="translate(198.2,821)"><text x="6.8" y="5.2" font-size="6.2" fill="#ffff00" font-family="Liberation Sans, sans-serif" style="writing-mode:vertical-rl;text-orientation:upright;letter-spacing:-1.1px" font-weight="bold">BOUNDS</text></g>
<rect x="213.9" y="845.5" width="20.5" height="22.5" fill="#191970" stroke="#808080" stroke-width="1"/><g transform="translate(213.4,845)"><g fill="none" stroke="#ffff00" stroke-width="1"><rect x="3.4" y="4.2" width="15" height="15"/><path d="M8.4 4.2v15M13.4 4.2v15M3.4 9.2h15M3.4 14.2h15"/></g></g><rect x="236.9" y="821.5" width="19" height="47" fill="#191970" stroke="#808080" stroke-width="1"/><g transform="translate(236.4,821)"><path d="M3 6l3-2 2 1-2 3 1 2-2 2-1-2-2 1zM9.5 5.5l3-1.5 4-0.5-2 2.5 1.5 2-2.5 1-1 3.5-1.5-3 1-2.5z M3 13l2 1-1 1.5z" fill="#ffff00"/><text x="10" y="16.9" font-size="9" fill="#ffff00" font-family="Liberation Sans, sans-serif" style="writing-mode:vertical-rl;text-orientation:upright;letter-spacing:-2px">MAP</text></g><rect x="258.5" y="821.5" width="19.5" height="47" fill="#191970" stroke="#808080" stroke-width="1"/><g transform="translate(258,821)"><g fill="none" stroke="#ffff00" stroke-width="1"><ellipse cx="10.4" cy="23.5" rx="7.5" ry="9.4"/><ellipse cx="10.4" cy="23.5" rx="5" ry="6.2"/><ellipse cx="10.4" cy="23.5" rx="2.5" ry="3.1"/><path d="M12.9 23.5L17.9 23.5"/><path d="M12.2 25.7L15.7 30.1"/><path d="M10.4 26.6L10.4 32.9"/><path d="M8.6 25.7L5.1 30.1"/><path d="M7.9 23.5L2.9 23.5"/><path d="M8.6 21.3L5.1 16.9"/><path d="M10.4 20.4L10.4 14.1"/><path d="M12.2 21.3L15.7 16.9"/></g></g><rect x="280.9" y="845.5" width="20.5" height="22.5" fill="#191970" stroke="#808080" stroke-width="1"/><g transform="translate(280.4,845)"><circle cx="10.7" cy="12" r="6.3" fill="none" stroke="#ffff00" stroke-width="1.1"/></g><rect x="303.8" y="821.5" width="44.6" height="47" fill="#191970" stroke="#808080" stroke-width="1"/><g transform="translate(303.3,821)"><g fill="none" stroke="#ffff00" stroke-width="1.1"><path d="M6 32.5h33.2l-2.6 6"/><path d="M6 32.5q0.5 3.5 3.5 6"/><path d="M8 32.5v-8.5h4.4l2 7"/><circle cx="22.3" cy="23.4" r="3.1"/><path d="M21.2 26.4v6M23.4 26.4v6"/><path d="M34.2 16v16.5"/></g><path d="M3 44v-4.5l2 1.3 2.2-2.2 2.2 2.2 2.4-1.6 2.2 1.6 2.4-2 2.4 2 2.4-1.8 2.4 1.8 2.4-2 2.4 2 2.4-1.8 2.4 1.8 2.4-2.2 2.2 2.2 2.2-2.4V44z" fill="#ffff00"/></g>
<line x1="5" y1="427" x2="573" y2="427" stroke="#fff" stroke-width="1" stroke-dasharray="1 1"/><line x1="573.5" y1="427" x2="573.5" y2="871" stroke="#fff" stroke-width="1" stroke-dasharray="1 1"/><line x1="5" y1="871" x2="573" y2="871" stroke="#fff" stroke-width="1" stroke-dasharray="1 1"/><line x1="5.5" y1="427" x2="5.5" y2="871" stroke="#fff" stroke-width="1" stroke-dasharray="1 1"/>
<rect x="0" y="0" width="145" height="2" fill="#006400"/><rect x="572" y="0" width="160" height="2" fill="#006400"/><rect x="145" y="0" width="76" height="2" fill="#999"/><rect x="221" y="0" width="31" height="2" fill="#0000cd"/><rect x="252" y="0" width="320" height="2" fill="#999"/><rect x="732" y="0" width="243" height="2" fill="#999"/><rect x="975" y="0" width="31" height="2" fill="#0000cd"/><rect x="1006" y="0" width="127" height="2" fill="#999"/>
<line x1="0" y1="2.5" x2="1133" y2="2.5" stroke="#fff" stroke-width="1" stroke-dasharray="1 1"/>
</svg></body></html>
